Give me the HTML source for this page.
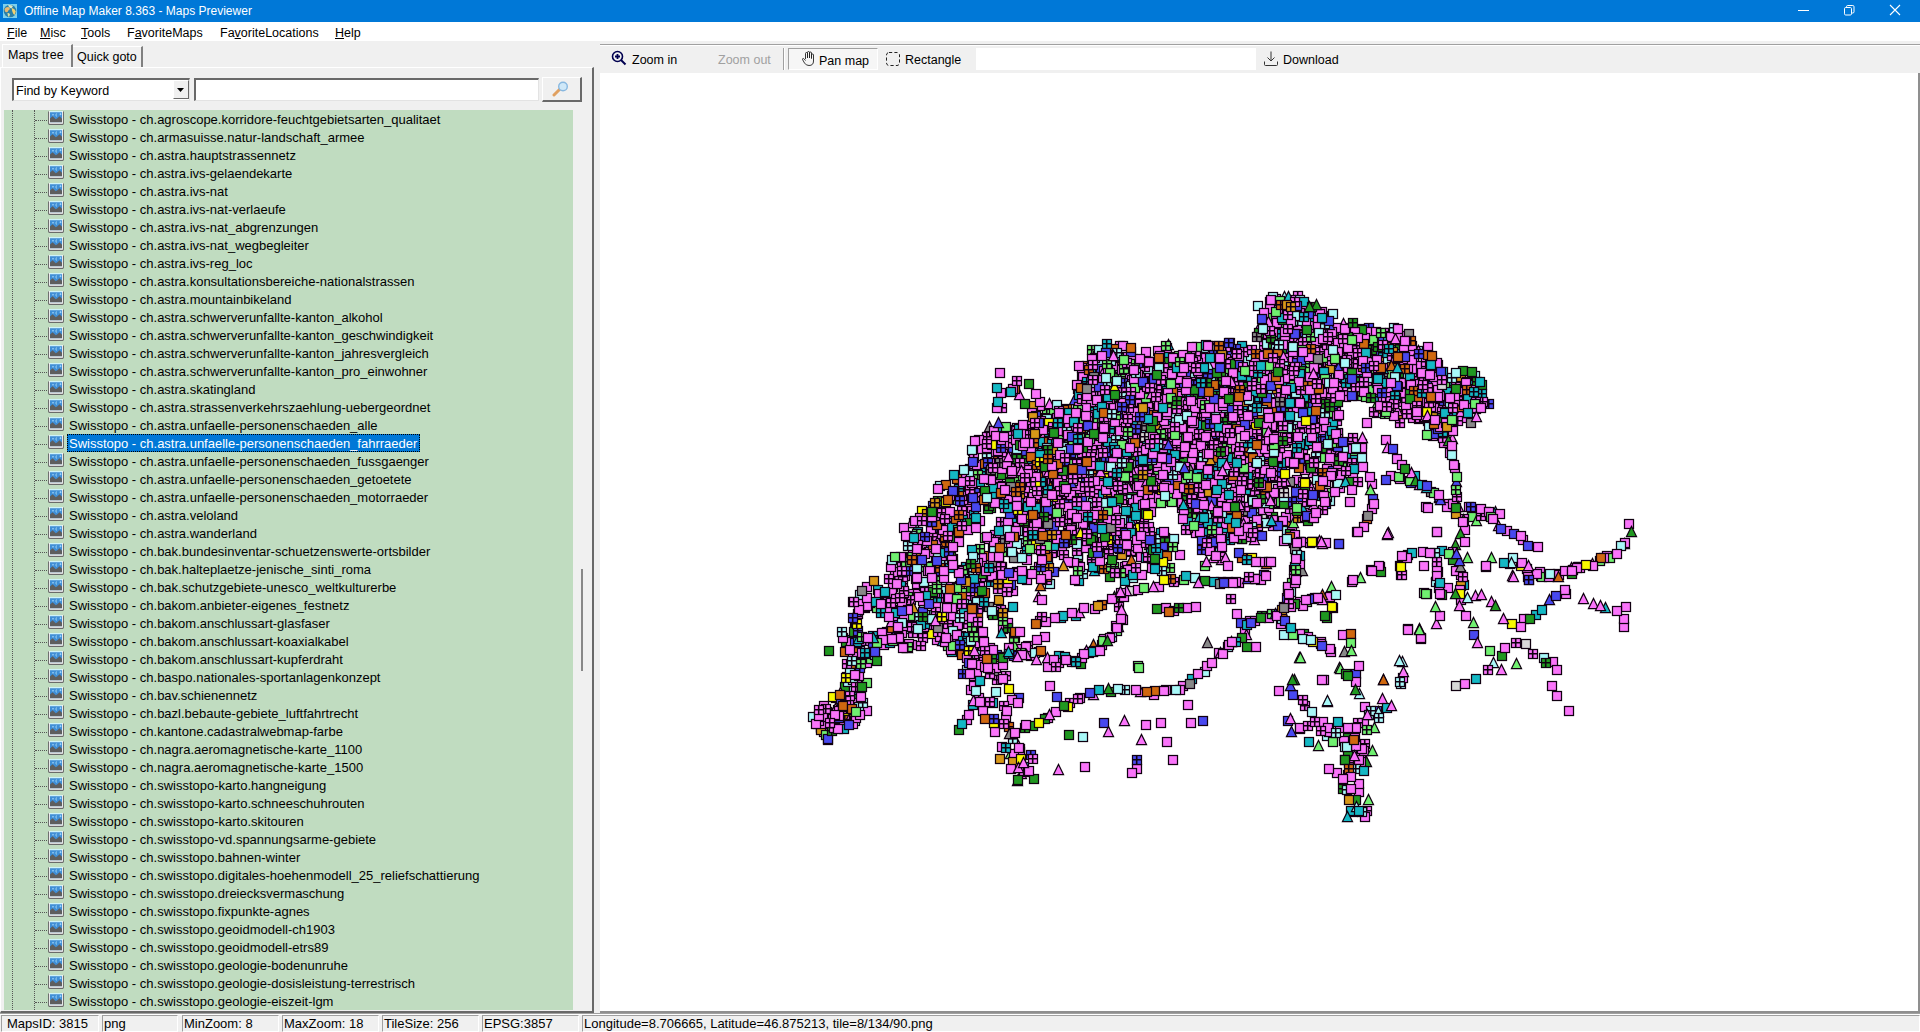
<!DOCTYPE html>
<html><head><meta charset="utf-8">
<style>
*{margin:0;padding:0;box-sizing:border-box}
html,body{width:1920px;height:1032px;overflow:hidden;background:#f0f0f0;font-family:"Liberation Sans",sans-serif;position:relative}
.a{position:absolute}
#title{left:0;top:0;width:1920px;height:22px;background:#0078d7;color:#fff;font-size:12px}
#menu{left:0;top:22px;width:1920px;height:19px;background:#fff;font-size:12.5px;color:#000}
#menu span{position:absolute;top:4px}
.tree{left:4px;top:110px;width:570px;height:900px;background:#c0dcc0;overflow:hidden;border-right:1px solid #f4f8f4}
.row{position:absolute;left:0;height:18px;width:569px;font-size:13px;line-height:16px;white-space:nowrap}
.row .t{position:absolute;left:63px;top:0;height:18px;line-height:16px;padding:1px 2px 0 1px;color:#000;border:1px solid transparent}
.row .t.sel{background:#0078d7;color:#fff;border:1px dotted #000}
.row .ic{position:absolute;left:44px;top:1px;width:16px;height:14px}
.row .h{position:absolute;left:31px;top:10px;width:12px;border-top:1px dotted #555}
.vl{position:absolute;width:0;border-left:1px dotted #555}
#status{left:0;top:1013px;width:1920px;height:19px;font-size:13px}
.sp{position:absolute;top:2px;height:17px;border-top:1px solid #a0a0a0;border-left:1px solid #a0a0a0;border-bottom:1px solid #fff;border-right:1px solid #fff;padding-left:1px;line-height:15px;white-space:nowrap}
</style></head><body>
<div id="title" class="a">
 <svg class="a" style="left:3px;top:4px" width="14" height="14" viewBox="0 0 14 14"><rect width="14" height="14" fill="#7cd0ee"/><circle cx="7" cy="7" r="6.3" fill="#2a7fa8"/><path d="M1.5 5 Q3 2.5 6 3.2 L7 5 Q5 6.5 4.5 8 Q3 8.5 2 7.5Z" fill="#e8b870"/><path d="M5 1.2 Q8 0.8 10 2 L8.5 4.5 Q7 4 6 3Z" fill="#d8e8c8"/><path d="M9 4 Q12 4.5 12.8 7.5 L11.5 11 Q10 10 9.5 8 Q8.5 6 9 4Z" fill="#f0d070"/><path d="M4.5 9 Q6.5 8.5 7 10.5 L6 13 Q4.5 12 4.5 9Z" fill="#e0e0a0"/></svg>
 <span class="a" style="left:24px;top:4px">Offline Map Maker 8.363 - Maps Previewer</span>
 <svg class="a" style="left:1798px;top:10px" width="12" height="2"><rect width="11" height="1" fill="#fff"/></svg>
 <svg class="a" style="left:1843px;top:4px" width="13" height="13" viewBox="0 0 13 13"><rect x="1.5" y="3.5" width="7" height="7.5" rx="1.2" fill="none" stroke="#fff"/><path d="M3.5 3.5V2.7Q3.5 1.5 4.7 1.5H9.8Q11 1.5 11 2.7V7.8Q11 9 9.8 9H8.5" fill="none" stroke="#fff"/></svg>
 <svg class="a" style="left:1889px;top:4px" width="12" height="12" viewBox="0 0 12 12"><path d="M1 1L11 11M11 1L1 11" stroke="#fff" stroke-width="1.1"/></svg>
</div>
<div id="menu" class="a">
 <span style="left:7px"><u>F</u>ile</span>
 <span style="left:40px"><u>M</u>isc</span>
 <span style="left:81px"><u>T</u>ools</span>
 <span style="left:127px">F<u>a</u>voriteMaps</span>
 <span style="left:220px">Fa<u>v</u>oriteLocations</span>
 <span style="left:335px"><u>H</u>elp</span>
</div>

<div class="a" style="left:2px;top:44px;width:71px;height:24px;background:#f0f0f0;border-top:1px solid #fff;border-left:1px solid #fff;border-right:2px solid #808080"></div>
<span class="a" style="left:8px;top:48px;font-size:12.5px">Maps tree</span>
<div class="a" style="left:73px;top:46px;width:70px;height:21px;border-top:1px solid #fff;border-right:2px solid #808080"></div>
<span class="a" style="left:77px;top:50px;font-size:12.5px">Quick goto</span>
<div class="a" style="left:0px;top:67px;width:594px;height:946px;border-top:1px solid #fff;border-left:1px solid #fff;border-right:2px solid #696969;border-bottom:2px solid #696969"></div>
<div class="a" style="left:12px;top:78px;width:178px;height:23px;background:#fff;border-top:2px solid #696969;border-left:2px solid #696969;border-bottom:1px solid #e3e3e3;border-right:1px solid #e3e3e3"></div>
<span class="a" style="left:16px;top:84px;font-size:12.5px">Find by Keyword</span>
<div class="a" style="left:173px;top:80px;width:16px;height:19px;background:#f0f0f0;border-right:1px solid #696969;border-bottom:1px solid #696969;border-left:1px solid #fff;border-top:1px solid #fff"></div>
<svg class="a" style="left:177px;top:88px" width="8" height="5"><path d="M0 0 H7 L3.5 4Z" fill="#000"/></svg>
<div class="a" style="left:194px;top:78px;width:345px;height:23px;background:#fff;border-top:2px solid #696969;border-left:2px solid #696969;border-bottom:1px solid #e3e3e3;border-right:1px solid #e3e3e3"></div>
<div class="a" style="left:542px;top:77px;width:40px;height:25px;background:#f0f0f0;border-top:1px solid #fff;border-left:1px solid #fff;border-right:2px solid #696969;border-bottom:2px solid #696969"></div>
<svg class="a" style="left:552px;top:81px" width="18" height="16" viewBox="0 0 18 16"><line x1="2" y1="14" x2="8" y2="8" stroke="#e0a060" stroke-width="3" stroke-linecap="round"/><circle cx="11" cy="5.5" r="4.3" fill="#cfe8f8" stroke="#88b8e0" stroke-width="1.4"/></svg>
<div class="a tree">
<div class="vl" style="left:8px;top:0;height:900px"></div>
<div class="vl" style="left:30px;top:0;height:900px"></div>
<div class="row" style="top:0px"><div class="h"></div><svg class="ic" viewBox="0 0 16 14"><rect x="1" y="0" width="14" height="13" fill="#fff"/><path d="M0.6 0.5V12.6Q0.6 13.4 1.4 13.4H14.6Q15.4 13.4 15.4 12.6V0.5" fill="none" stroke="#6a6a6a" stroke-width="1.1"/><rect x="2" y="0.3" width="12" height="0.9" fill="#b8eef8"/><rect x="2" y="1.2" width="12" height="10" fill="#3f8ed6"/><path d="M2 11.2V7.5L4.6 5.3L7.8 8.2L9.4 7.2L11.5 5.2L14 7.8V11.2Z" fill="#5e5e5e"/><path d="M5 2.8L5.9 3.8L5 4.8L4.1 3.8Z" fill="#a8dcff"/><path d="M9.3 2.3A1.6 1.6 0 1 0 9.3 5.8A2 2 0 0 1 9.3 2.3Z" fill="#c8f4ff"/><path d="M12.5 2.2V4.2M11.5 3.2H13.5" stroke="#a8dcff" stroke-width="0.8"/></svg><span class="t">Swisstopo - ch.agroscope.korridore-feuchtgebietsarten_qualitaet</span></div>
<div class="row" style="top:18px"><div class="h"></div><svg class="ic" viewBox="0 0 16 14"><rect x="1" y="0" width="14" height="13" fill="#fff"/><path d="M0.6 0.5V12.6Q0.6 13.4 1.4 13.4H14.6Q15.4 13.4 15.4 12.6V0.5" fill="none" stroke="#6a6a6a" stroke-width="1.1"/><rect x="2" y="0.3" width="12" height="0.9" fill="#b8eef8"/><rect x="2" y="1.2" width="12" height="10" fill="#3f8ed6"/><path d="M2 11.2V7.5L4.6 5.3L7.8 8.2L9.4 7.2L11.5 5.2L14 7.8V11.2Z" fill="#5e5e5e"/><path d="M5 2.8L5.9 3.8L5 4.8L4.1 3.8Z" fill="#a8dcff"/><path d="M9.3 2.3A1.6 1.6 0 1 0 9.3 5.8A2 2 0 0 1 9.3 2.3Z" fill="#c8f4ff"/><path d="M12.5 2.2V4.2M11.5 3.2H13.5" stroke="#a8dcff" stroke-width="0.8"/></svg><span class="t">Swisstopo - ch.armasuisse.natur-landschaft_armee</span></div>
<div class="row" style="top:36px"><div class="h"></div><svg class="ic" viewBox="0 0 16 14"><rect x="1" y="0" width="14" height="13" fill="#fff"/><path d="M0.6 0.5V12.6Q0.6 13.4 1.4 13.4H14.6Q15.4 13.4 15.4 12.6V0.5" fill="none" stroke="#6a6a6a" stroke-width="1.1"/><rect x="2" y="0.3" width="12" height="0.9" fill="#b8eef8"/><rect x="2" y="1.2" width="12" height="10" fill="#3f8ed6"/><path d="M2 11.2V7.5L4.6 5.3L7.8 8.2L9.4 7.2L11.5 5.2L14 7.8V11.2Z" fill="#5e5e5e"/><path d="M5 2.8L5.9 3.8L5 4.8L4.1 3.8Z" fill="#a8dcff"/><path d="M9.3 2.3A1.6 1.6 0 1 0 9.3 5.8A2 2 0 0 1 9.3 2.3Z" fill="#c8f4ff"/><path d="M12.5 2.2V4.2M11.5 3.2H13.5" stroke="#a8dcff" stroke-width="0.8"/></svg><span class="t">Swisstopo - ch.astra.hauptstrassennetz</span></div>
<div class="row" style="top:54px"><div class="h"></div><svg class="ic" viewBox="0 0 16 14"><rect x="1" y="0" width="14" height="13" fill="#fff"/><path d="M0.6 0.5V12.6Q0.6 13.4 1.4 13.4H14.6Q15.4 13.4 15.4 12.6V0.5" fill="none" stroke="#6a6a6a" stroke-width="1.1"/><rect x="2" y="0.3" width="12" height="0.9" fill="#b8eef8"/><rect x="2" y="1.2" width="12" height="10" fill="#3f8ed6"/><path d="M2 11.2V7.5L4.6 5.3L7.8 8.2L9.4 7.2L11.5 5.2L14 7.8V11.2Z" fill="#5e5e5e"/><path d="M5 2.8L5.9 3.8L5 4.8L4.1 3.8Z" fill="#a8dcff"/><path d="M9.3 2.3A1.6 1.6 0 1 0 9.3 5.8A2 2 0 0 1 9.3 2.3Z" fill="#c8f4ff"/><path d="M12.5 2.2V4.2M11.5 3.2H13.5" stroke="#a8dcff" stroke-width="0.8"/></svg><span class="t">Swisstopo - ch.astra.ivs-gelaendekarte</span></div>
<div class="row" style="top:72px"><div class="h"></div><svg class="ic" viewBox="0 0 16 14"><rect x="1" y="0" width="14" height="13" fill="#fff"/><path d="M0.6 0.5V12.6Q0.6 13.4 1.4 13.4H14.6Q15.4 13.4 15.4 12.6V0.5" fill="none" stroke="#6a6a6a" stroke-width="1.1"/><rect x="2" y="0.3" width="12" height="0.9" fill="#b8eef8"/><rect x="2" y="1.2" width="12" height="10" fill="#3f8ed6"/><path d="M2 11.2V7.5L4.6 5.3L7.8 8.2L9.4 7.2L11.5 5.2L14 7.8V11.2Z" fill="#5e5e5e"/><path d="M5 2.8L5.9 3.8L5 4.8L4.1 3.8Z" fill="#a8dcff"/><path d="M9.3 2.3A1.6 1.6 0 1 0 9.3 5.8A2 2 0 0 1 9.3 2.3Z" fill="#c8f4ff"/><path d="M12.5 2.2V4.2M11.5 3.2H13.5" stroke="#a8dcff" stroke-width="0.8"/></svg><span class="t">Swisstopo - ch.astra.ivs-nat</span></div>
<div class="row" style="top:90px"><div class="h"></div><svg class="ic" viewBox="0 0 16 14"><rect x="1" y="0" width="14" height="13" fill="#fff"/><path d="M0.6 0.5V12.6Q0.6 13.4 1.4 13.4H14.6Q15.4 13.4 15.4 12.6V0.5" fill="none" stroke="#6a6a6a" stroke-width="1.1"/><rect x="2" y="0.3" width="12" height="0.9" fill="#b8eef8"/><rect x="2" y="1.2" width="12" height="10" fill="#3f8ed6"/><path d="M2 11.2V7.5L4.6 5.3L7.8 8.2L9.4 7.2L11.5 5.2L14 7.8V11.2Z" fill="#5e5e5e"/><path d="M5 2.8L5.9 3.8L5 4.8L4.1 3.8Z" fill="#a8dcff"/><path d="M9.3 2.3A1.6 1.6 0 1 0 9.3 5.8A2 2 0 0 1 9.3 2.3Z" fill="#c8f4ff"/><path d="M12.5 2.2V4.2M11.5 3.2H13.5" stroke="#a8dcff" stroke-width="0.8"/></svg><span class="t">Swisstopo - ch.astra.ivs-nat-verlaeufe</span></div>
<div class="row" style="top:108px"><div class="h"></div><svg class="ic" viewBox="0 0 16 14"><rect x="1" y="0" width="14" height="13" fill="#fff"/><path d="M0.6 0.5V12.6Q0.6 13.4 1.4 13.4H14.6Q15.4 13.4 15.4 12.6V0.5" fill="none" stroke="#6a6a6a" stroke-width="1.1"/><rect x="2" y="0.3" width="12" height="0.9" fill="#b8eef8"/><rect x="2" y="1.2" width="12" height="10" fill="#3f8ed6"/><path d="M2 11.2V7.5L4.6 5.3L7.8 8.2L9.4 7.2L11.5 5.2L14 7.8V11.2Z" fill="#5e5e5e"/><path d="M5 2.8L5.9 3.8L5 4.8L4.1 3.8Z" fill="#a8dcff"/><path d="M9.3 2.3A1.6 1.6 0 1 0 9.3 5.8A2 2 0 0 1 9.3 2.3Z" fill="#c8f4ff"/><path d="M12.5 2.2V4.2M11.5 3.2H13.5" stroke="#a8dcff" stroke-width="0.8"/></svg><span class="t">Swisstopo - ch.astra.ivs-nat_abgrenzungen</span></div>
<div class="row" style="top:126px"><div class="h"></div><svg class="ic" viewBox="0 0 16 14"><rect x="1" y="0" width="14" height="13" fill="#fff"/><path d="M0.6 0.5V12.6Q0.6 13.4 1.4 13.4H14.6Q15.4 13.4 15.4 12.6V0.5" fill="none" stroke="#6a6a6a" stroke-width="1.1"/><rect x="2" y="0.3" width="12" height="0.9" fill="#b8eef8"/><rect x="2" y="1.2" width="12" height="10" fill="#3f8ed6"/><path d="M2 11.2V7.5L4.6 5.3L7.8 8.2L9.4 7.2L11.5 5.2L14 7.8V11.2Z" fill="#5e5e5e"/><path d="M5 2.8L5.9 3.8L5 4.8L4.1 3.8Z" fill="#a8dcff"/><path d="M9.3 2.3A1.6 1.6 0 1 0 9.3 5.8A2 2 0 0 1 9.3 2.3Z" fill="#c8f4ff"/><path d="M12.5 2.2V4.2M11.5 3.2H13.5" stroke="#a8dcff" stroke-width="0.8"/></svg><span class="t">Swisstopo - ch.astra.ivs-nat_wegbegleiter</span></div>
<div class="row" style="top:144px"><div class="h"></div><svg class="ic" viewBox="0 0 16 14"><rect x="1" y="0" width="14" height="13" fill="#fff"/><path d="M0.6 0.5V12.6Q0.6 13.4 1.4 13.4H14.6Q15.4 13.4 15.4 12.6V0.5" fill="none" stroke="#6a6a6a" stroke-width="1.1"/><rect x="2" y="0.3" width="12" height="0.9" fill="#b8eef8"/><rect x="2" y="1.2" width="12" height="10" fill="#3f8ed6"/><path d="M2 11.2V7.5L4.6 5.3L7.8 8.2L9.4 7.2L11.5 5.2L14 7.8V11.2Z" fill="#5e5e5e"/><path d="M5 2.8L5.9 3.8L5 4.8L4.1 3.8Z" fill="#a8dcff"/><path d="M9.3 2.3A1.6 1.6 0 1 0 9.3 5.8A2 2 0 0 1 9.3 2.3Z" fill="#c8f4ff"/><path d="M12.5 2.2V4.2M11.5 3.2H13.5" stroke="#a8dcff" stroke-width="0.8"/></svg><span class="t">Swisstopo - ch.astra.ivs-reg_loc</span></div>
<div class="row" style="top:162px"><div class="h"></div><svg class="ic" viewBox="0 0 16 14"><rect x="1" y="0" width="14" height="13" fill="#fff"/><path d="M0.6 0.5V12.6Q0.6 13.4 1.4 13.4H14.6Q15.4 13.4 15.4 12.6V0.5" fill="none" stroke="#6a6a6a" stroke-width="1.1"/><rect x="2" y="0.3" width="12" height="0.9" fill="#b8eef8"/><rect x="2" y="1.2" width="12" height="10" fill="#3f8ed6"/><path d="M2 11.2V7.5L4.6 5.3L7.8 8.2L9.4 7.2L11.5 5.2L14 7.8V11.2Z" fill="#5e5e5e"/><path d="M5 2.8L5.9 3.8L5 4.8L4.1 3.8Z" fill="#a8dcff"/><path d="M9.3 2.3A1.6 1.6 0 1 0 9.3 5.8A2 2 0 0 1 9.3 2.3Z" fill="#c8f4ff"/><path d="M12.5 2.2V4.2M11.5 3.2H13.5" stroke="#a8dcff" stroke-width="0.8"/></svg><span class="t">Swisstopo - ch.astra.konsultationsbereiche-nationalstrassen</span></div>
<div class="row" style="top:180px"><div class="h"></div><svg class="ic" viewBox="0 0 16 14"><rect x="1" y="0" width="14" height="13" fill="#fff"/><path d="M0.6 0.5V12.6Q0.6 13.4 1.4 13.4H14.6Q15.4 13.4 15.4 12.6V0.5" fill="none" stroke="#6a6a6a" stroke-width="1.1"/><rect x="2" y="0.3" width="12" height="0.9" fill="#b8eef8"/><rect x="2" y="1.2" width="12" height="10" fill="#3f8ed6"/><path d="M2 11.2V7.5L4.6 5.3L7.8 8.2L9.4 7.2L11.5 5.2L14 7.8V11.2Z" fill="#5e5e5e"/><path d="M5 2.8L5.9 3.8L5 4.8L4.1 3.8Z" fill="#a8dcff"/><path d="M9.3 2.3A1.6 1.6 0 1 0 9.3 5.8A2 2 0 0 1 9.3 2.3Z" fill="#c8f4ff"/><path d="M12.5 2.2V4.2M11.5 3.2H13.5" stroke="#a8dcff" stroke-width="0.8"/></svg><span class="t">Swisstopo - ch.astra.mountainbikeland</span></div>
<div class="row" style="top:198px"><div class="h"></div><svg class="ic" viewBox="0 0 16 14"><rect x="1" y="0" width="14" height="13" fill="#fff"/><path d="M0.6 0.5V12.6Q0.6 13.4 1.4 13.4H14.6Q15.4 13.4 15.4 12.6V0.5" fill="none" stroke="#6a6a6a" stroke-width="1.1"/><rect x="2" y="0.3" width="12" height="0.9" fill="#b8eef8"/><rect x="2" y="1.2" width="12" height="10" fill="#3f8ed6"/><path d="M2 11.2V7.5L4.6 5.3L7.8 8.2L9.4 7.2L11.5 5.2L14 7.8V11.2Z" fill="#5e5e5e"/><path d="M5 2.8L5.9 3.8L5 4.8L4.1 3.8Z" fill="#a8dcff"/><path d="M9.3 2.3A1.6 1.6 0 1 0 9.3 5.8A2 2 0 0 1 9.3 2.3Z" fill="#c8f4ff"/><path d="M12.5 2.2V4.2M11.5 3.2H13.5" stroke="#a8dcff" stroke-width="0.8"/></svg><span class="t">Swisstopo - ch.astra.schwerverunfallte-kanton_alkohol</span></div>
<div class="row" style="top:216px"><div class="h"></div><svg class="ic" viewBox="0 0 16 14"><rect x="1" y="0" width="14" height="13" fill="#fff"/><path d="M0.6 0.5V12.6Q0.6 13.4 1.4 13.4H14.6Q15.4 13.4 15.4 12.6V0.5" fill="none" stroke="#6a6a6a" stroke-width="1.1"/><rect x="2" y="0.3" width="12" height="0.9" fill="#b8eef8"/><rect x="2" y="1.2" width="12" height="10" fill="#3f8ed6"/><path d="M2 11.2V7.5L4.6 5.3L7.8 8.2L9.4 7.2L11.5 5.2L14 7.8V11.2Z" fill="#5e5e5e"/><path d="M5 2.8L5.9 3.8L5 4.8L4.1 3.8Z" fill="#a8dcff"/><path d="M9.3 2.3A1.6 1.6 0 1 0 9.3 5.8A2 2 0 0 1 9.3 2.3Z" fill="#c8f4ff"/><path d="M12.5 2.2V4.2M11.5 3.2H13.5" stroke="#a8dcff" stroke-width="0.8"/></svg><span class="t">Swisstopo - ch.astra.schwerverunfallte-kanton_geschwindigkeit</span></div>
<div class="row" style="top:234px"><div class="h"></div><svg class="ic" viewBox="0 0 16 14"><rect x="1" y="0" width="14" height="13" fill="#fff"/><path d="M0.6 0.5V12.6Q0.6 13.4 1.4 13.4H14.6Q15.4 13.4 15.4 12.6V0.5" fill="none" stroke="#6a6a6a" stroke-width="1.1"/><rect x="2" y="0.3" width="12" height="0.9" fill="#b8eef8"/><rect x="2" y="1.2" width="12" height="10" fill="#3f8ed6"/><path d="M2 11.2V7.5L4.6 5.3L7.8 8.2L9.4 7.2L11.5 5.2L14 7.8V11.2Z" fill="#5e5e5e"/><path d="M5 2.8L5.9 3.8L5 4.8L4.1 3.8Z" fill="#a8dcff"/><path d="M9.3 2.3A1.6 1.6 0 1 0 9.3 5.8A2 2 0 0 1 9.3 2.3Z" fill="#c8f4ff"/><path d="M12.5 2.2V4.2M11.5 3.2H13.5" stroke="#a8dcff" stroke-width="0.8"/></svg><span class="t">Swisstopo - ch.astra.schwerverunfallte-kanton_jahresvergleich</span></div>
<div class="row" style="top:252px"><div class="h"></div><svg class="ic" viewBox="0 0 16 14"><rect x="1" y="0" width="14" height="13" fill="#fff"/><path d="M0.6 0.5V12.6Q0.6 13.4 1.4 13.4H14.6Q15.4 13.4 15.4 12.6V0.5" fill="none" stroke="#6a6a6a" stroke-width="1.1"/><rect x="2" y="0.3" width="12" height="0.9" fill="#b8eef8"/><rect x="2" y="1.2" width="12" height="10" fill="#3f8ed6"/><path d="M2 11.2V7.5L4.6 5.3L7.8 8.2L9.4 7.2L11.5 5.2L14 7.8V11.2Z" fill="#5e5e5e"/><path d="M5 2.8L5.9 3.8L5 4.8L4.1 3.8Z" fill="#a8dcff"/><path d="M9.3 2.3A1.6 1.6 0 1 0 9.3 5.8A2 2 0 0 1 9.3 2.3Z" fill="#c8f4ff"/><path d="M12.5 2.2V4.2M11.5 3.2H13.5" stroke="#a8dcff" stroke-width="0.8"/></svg><span class="t">Swisstopo - ch.astra.schwerverunfallte-kanton_pro_einwohner</span></div>
<div class="row" style="top:270px"><div class="h"></div><svg class="ic" viewBox="0 0 16 14"><rect x="1" y="0" width="14" height="13" fill="#fff"/><path d="M0.6 0.5V12.6Q0.6 13.4 1.4 13.4H14.6Q15.4 13.4 15.4 12.6V0.5" fill="none" stroke="#6a6a6a" stroke-width="1.1"/><rect x="2" y="0.3" width="12" height="0.9" fill="#b8eef8"/><rect x="2" y="1.2" width="12" height="10" fill="#3f8ed6"/><path d="M2 11.2V7.5L4.6 5.3L7.8 8.2L9.4 7.2L11.5 5.2L14 7.8V11.2Z" fill="#5e5e5e"/><path d="M5 2.8L5.9 3.8L5 4.8L4.1 3.8Z" fill="#a8dcff"/><path d="M9.3 2.3A1.6 1.6 0 1 0 9.3 5.8A2 2 0 0 1 9.3 2.3Z" fill="#c8f4ff"/><path d="M12.5 2.2V4.2M11.5 3.2H13.5" stroke="#a8dcff" stroke-width="0.8"/></svg><span class="t">Swisstopo - ch.astra.skatingland</span></div>
<div class="row" style="top:288px"><div class="h"></div><svg class="ic" viewBox="0 0 16 14"><rect x="1" y="0" width="14" height="13" fill="#fff"/><path d="M0.6 0.5V12.6Q0.6 13.4 1.4 13.4H14.6Q15.4 13.4 15.4 12.6V0.5" fill="none" stroke="#6a6a6a" stroke-width="1.1"/><rect x="2" y="0.3" width="12" height="0.9" fill="#b8eef8"/><rect x="2" y="1.2" width="12" height="10" fill="#3f8ed6"/><path d="M2 11.2V7.5L4.6 5.3L7.8 8.2L9.4 7.2L11.5 5.2L14 7.8V11.2Z" fill="#5e5e5e"/><path d="M5 2.8L5.9 3.8L5 4.8L4.1 3.8Z" fill="#a8dcff"/><path d="M9.3 2.3A1.6 1.6 0 1 0 9.3 5.8A2 2 0 0 1 9.3 2.3Z" fill="#c8f4ff"/><path d="M12.5 2.2V4.2M11.5 3.2H13.5" stroke="#a8dcff" stroke-width="0.8"/></svg><span class="t">Swisstopo - ch.astra.strassenverkehrszaehlung-uebergeordnet</span></div>
<div class="row" style="top:306px"><div class="h"></div><svg class="ic" viewBox="0 0 16 14"><rect x="1" y="0" width="14" height="13" fill="#fff"/><path d="M0.6 0.5V12.6Q0.6 13.4 1.4 13.4H14.6Q15.4 13.4 15.4 12.6V0.5" fill="none" stroke="#6a6a6a" stroke-width="1.1"/><rect x="2" y="0.3" width="12" height="0.9" fill="#b8eef8"/><rect x="2" y="1.2" width="12" height="10" fill="#3f8ed6"/><path d="M2 11.2V7.5L4.6 5.3L7.8 8.2L9.4 7.2L11.5 5.2L14 7.8V11.2Z" fill="#5e5e5e"/><path d="M5 2.8L5.9 3.8L5 4.8L4.1 3.8Z" fill="#a8dcff"/><path d="M9.3 2.3A1.6 1.6 0 1 0 9.3 5.8A2 2 0 0 1 9.3 2.3Z" fill="#c8f4ff"/><path d="M12.5 2.2V4.2M11.5 3.2H13.5" stroke="#a8dcff" stroke-width="0.8"/></svg><span class="t">Swisstopo - ch.astra.unfaelle-personenschaeden_alle</span></div>
<div class="row" style="top:324px"><div class="h"></div><svg class="ic" viewBox="0 0 16 14"><rect x="1" y="0" width="14" height="13" fill="#fff"/><path d="M0.6 0.5V12.6Q0.6 13.4 1.4 13.4H14.6Q15.4 13.4 15.4 12.6V0.5" fill="none" stroke="#6a6a6a" stroke-width="1.1"/><rect x="2" y="0.3" width="12" height="0.9" fill="#b8eef8"/><rect x="2" y="1.2" width="12" height="10" fill="#3f8ed6"/><path d="M2 11.2V7.5L4.6 5.3L7.8 8.2L9.4 7.2L11.5 5.2L14 7.8V11.2Z" fill="#5e5e5e"/><path d="M5 2.8L5.9 3.8L5 4.8L4.1 3.8Z" fill="#a8dcff"/><path d="M9.3 2.3A1.6 1.6 0 1 0 9.3 5.8A2 2 0 0 1 9.3 2.3Z" fill="#c8f4ff"/><path d="M12.5 2.2V4.2M11.5 3.2H13.5" stroke="#a8dcff" stroke-width="0.8"/></svg><span class="t sel">Swisstopo - ch.astra.unfaelle-personenschaeden_fahrraeder</span></div>
<div class="row" style="top:342px"><div class="h"></div><svg class="ic" viewBox="0 0 16 14"><rect x="1" y="0" width="14" height="13" fill="#fff"/><path d="M0.6 0.5V12.6Q0.6 13.4 1.4 13.4H14.6Q15.4 13.4 15.4 12.6V0.5" fill="none" stroke="#6a6a6a" stroke-width="1.1"/><rect x="2" y="0.3" width="12" height="0.9" fill="#b8eef8"/><rect x="2" y="1.2" width="12" height="10" fill="#3f8ed6"/><path d="M2 11.2V7.5L4.6 5.3L7.8 8.2L9.4 7.2L11.5 5.2L14 7.8V11.2Z" fill="#5e5e5e"/><path d="M5 2.8L5.9 3.8L5 4.8L4.1 3.8Z" fill="#a8dcff"/><path d="M9.3 2.3A1.6 1.6 0 1 0 9.3 5.8A2 2 0 0 1 9.3 2.3Z" fill="#c8f4ff"/><path d="M12.5 2.2V4.2M11.5 3.2H13.5" stroke="#a8dcff" stroke-width="0.8"/></svg><span class="t">Swisstopo - ch.astra.unfaelle-personenschaeden_fussgaenger</span></div>
<div class="row" style="top:360px"><div class="h"></div><svg class="ic" viewBox="0 0 16 14"><rect x="1" y="0" width="14" height="13" fill="#fff"/><path d="M0.6 0.5V12.6Q0.6 13.4 1.4 13.4H14.6Q15.4 13.4 15.4 12.6V0.5" fill="none" stroke="#6a6a6a" stroke-width="1.1"/><rect x="2" y="0.3" width="12" height="0.9" fill="#b8eef8"/><rect x="2" y="1.2" width="12" height="10" fill="#3f8ed6"/><path d="M2 11.2V7.5L4.6 5.3L7.8 8.2L9.4 7.2L11.5 5.2L14 7.8V11.2Z" fill="#5e5e5e"/><path d="M5 2.8L5.9 3.8L5 4.8L4.1 3.8Z" fill="#a8dcff"/><path d="M9.3 2.3A1.6 1.6 0 1 0 9.3 5.8A2 2 0 0 1 9.3 2.3Z" fill="#c8f4ff"/><path d="M12.5 2.2V4.2M11.5 3.2H13.5" stroke="#a8dcff" stroke-width="0.8"/></svg><span class="t">Swisstopo - ch.astra.unfaelle-personenschaeden_getoetete</span></div>
<div class="row" style="top:378px"><div class="h"></div><svg class="ic" viewBox="0 0 16 14"><rect x="1" y="0" width="14" height="13" fill="#fff"/><path d="M0.6 0.5V12.6Q0.6 13.4 1.4 13.4H14.6Q15.4 13.4 15.4 12.6V0.5" fill="none" stroke="#6a6a6a" stroke-width="1.1"/><rect x="2" y="0.3" width="12" height="0.9" fill="#b8eef8"/><rect x="2" y="1.2" width="12" height="10" fill="#3f8ed6"/><path d="M2 11.2V7.5L4.6 5.3L7.8 8.2L9.4 7.2L11.5 5.2L14 7.8V11.2Z" fill="#5e5e5e"/><path d="M5 2.8L5.9 3.8L5 4.8L4.1 3.8Z" fill="#a8dcff"/><path d="M9.3 2.3A1.6 1.6 0 1 0 9.3 5.8A2 2 0 0 1 9.3 2.3Z" fill="#c8f4ff"/><path d="M12.5 2.2V4.2M11.5 3.2H13.5" stroke="#a8dcff" stroke-width="0.8"/></svg><span class="t">Swisstopo - ch.astra.unfaelle-personenschaeden_motorraeder</span></div>
<div class="row" style="top:396px"><div class="h"></div><svg class="ic" viewBox="0 0 16 14"><rect x="1" y="0" width="14" height="13" fill="#fff"/><path d="M0.6 0.5V12.6Q0.6 13.4 1.4 13.4H14.6Q15.4 13.4 15.4 12.6V0.5" fill="none" stroke="#6a6a6a" stroke-width="1.1"/><rect x="2" y="0.3" width="12" height="0.9" fill="#b8eef8"/><rect x="2" y="1.2" width="12" height="10" fill="#3f8ed6"/><path d="M2 11.2V7.5L4.6 5.3L7.8 8.2L9.4 7.2L11.5 5.2L14 7.8V11.2Z" fill="#5e5e5e"/><path d="M5 2.8L5.9 3.8L5 4.8L4.1 3.8Z" fill="#a8dcff"/><path d="M9.3 2.3A1.6 1.6 0 1 0 9.3 5.8A2 2 0 0 1 9.3 2.3Z" fill="#c8f4ff"/><path d="M12.5 2.2V4.2M11.5 3.2H13.5" stroke="#a8dcff" stroke-width="0.8"/></svg><span class="t">Swisstopo - ch.astra.veloland</span></div>
<div class="row" style="top:414px"><div class="h"></div><svg class="ic" viewBox="0 0 16 14"><rect x="1" y="0" width="14" height="13" fill="#fff"/><path d="M0.6 0.5V12.6Q0.6 13.4 1.4 13.4H14.6Q15.4 13.4 15.4 12.6V0.5" fill="none" stroke="#6a6a6a" stroke-width="1.1"/><rect x="2" y="0.3" width="12" height="0.9" fill="#b8eef8"/><rect x="2" y="1.2" width="12" height="10" fill="#3f8ed6"/><path d="M2 11.2V7.5L4.6 5.3L7.8 8.2L9.4 7.2L11.5 5.2L14 7.8V11.2Z" fill="#5e5e5e"/><path d="M5 2.8L5.9 3.8L5 4.8L4.1 3.8Z" fill="#a8dcff"/><path d="M9.3 2.3A1.6 1.6 0 1 0 9.3 5.8A2 2 0 0 1 9.3 2.3Z" fill="#c8f4ff"/><path d="M12.5 2.2V4.2M11.5 3.2H13.5" stroke="#a8dcff" stroke-width="0.8"/></svg><span class="t">Swisstopo - ch.astra.wanderland</span></div>
<div class="row" style="top:432px"><div class="h"></div><svg class="ic" viewBox="0 0 16 14"><rect x="1" y="0" width="14" height="13" fill="#fff"/><path d="M0.6 0.5V12.6Q0.6 13.4 1.4 13.4H14.6Q15.4 13.4 15.4 12.6V0.5" fill="none" stroke="#6a6a6a" stroke-width="1.1"/><rect x="2" y="0.3" width="12" height="0.9" fill="#b8eef8"/><rect x="2" y="1.2" width="12" height="10" fill="#3f8ed6"/><path d="M2 11.2V7.5L4.6 5.3L7.8 8.2L9.4 7.2L11.5 5.2L14 7.8V11.2Z" fill="#5e5e5e"/><path d="M5 2.8L5.9 3.8L5 4.8L4.1 3.8Z" fill="#a8dcff"/><path d="M9.3 2.3A1.6 1.6 0 1 0 9.3 5.8A2 2 0 0 1 9.3 2.3Z" fill="#c8f4ff"/><path d="M12.5 2.2V4.2M11.5 3.2H13.5" stroke="#a8dcff" stroke-width="0.8"/></svg><span class="t">Swisstopo - ch.bak.bundesinventar-schuetzenswerte-ortsbilder</span></div>
<div class="row" style="top:450px"><div class="h"></div><svg class="ic" viewBox="0 0 16 14"><rect x="1" y="0" width="14" height="13" fill="#fff"/><path d="M0.6 0.5V12.6Q0.6 13.4 1.4 13.4H14.6Q15.4 13.4 15.4 12.6V0.5" fill="none" stroke="#6a6a6a" stroke-width="1.1"/><rect x="2" y="0.3" width="12" height="0.9" fill="#b8eef8"/><rect x="2" y="1.2" width="12" height="10" fill="#3f8ed6"/><path d="M2 11.2V7.5L4.6 5.3L7.8 8.2L9.4 7.2L11.5 5.2L14 7.8V11.2Z" fill="#5e5e5e"/><path d="M5 2.8L5.9 3.8L5 4.8L4.1 3.8Z" fill="#a8dcff"/><path d="M9.3 2.3A1.6 1.6 0 1 0 9.3 5.8A2 2 0 0 1 9.3 2.3Z" fill="#c8f4ff"/><path d="M12.5 2.2V4.2M11.5 3.2H13.5" stroke="#a8dcff" stroke-width="0.8"/></svg><span class="t">Swisstopo - ch.bak.halteplaetze-jenische_sinti_roma</span></div>
<div class="row" style="top:468px"><div class="h"></div><svg class="ic" viewBox="0 0 16 14"><rect x="1" y="0" width="14" height="13" fill="#fff"/><path d="M0.6 0.5V12.6Q0.6 13.4 1.4 13.4H14.6Q15.4 13.4 15.4 12.6V0.5" fill="none" stroke="#6a6a6a" stroke-width="1.1"/><rect x="2" y="0.3" width="12" height="0.9" fill="#b8eef8"/><rect x="2" y="1.2" width="12" height="10" fill="#3f8ed6"/><path d="M2 11.2V7.5L4.6 5.3L7.8 8.2L9.4 7.2L11.5 5.2L14 7.8V11.2Z" fill="#5e5e5e"/><path d="M5 2.8L5.9 3.8L5 4.8L4.1 3.8Z" fill="#a8dcff"/><path d="M9.3 2.3A1.6 1.6 0 1 0 9.3 5.8A2 2 0 0 1 9.3 2.3Z" fill="#c8f4ff"/><path d="M12.5 2.2V4.2M11.5 3.2H13.5" stroke="#a8dcff" stroke-width="0.8"/></svg><span class="t">Swisstopo - ch.bak.schutzgebiete-unesco_weltkulturerbe</span></div>
<div class="row" style="top:486px"><div class="h"></div><svg class="ic" viewBox="0 0 16 14"><rect x="1" y="0" width="14" height="13" fill="#fff"/><path d="M0.6 0.5V12.6Q0.6 13.4 1.4 13.4H14.6Q15.4 13.4 15.4 12.6V0.5" fill="none" stroke="#6a6a6a" stroke-width="1.1"/><rect x="2" y="0.3" width="12" height="0.9" fill="#b8eef8"/><rect x="2" y="1.2" width="12" height="10" fill="#3f8ed6"/><path d="M2 11.2V7.5L4.6 5.3L7.8 8.2L9.4 7.2L11.5 5.2L14 7.8V11.2Z" fill="#5e5e5e"/><path d="M5 2.8L5.9 3.8L5 4.8L4.1 3.8Z" fill="#a8dcff"/><path d="M9.3 2.3A1.6 1.6 0 1 0 9.3 5.8A2 2 0 0 1 9.3 2.3Z" fill="#c8f4ff"/><path d="M12.5 2.2V4.2M11.5 3.2H13.5" stroke="#a8dcff" stroke-width="0.8"/></svg><span class="t">Swisstopo - ch.bakom.anbieter-eigenes_festnetz</span></div>
<div class="row" style="top:504px"><div class="h"></div><svg class="ic" viewBox="0 0 16 14"><rect x="1" y="0" width="14" height="13" fill="#fff"/><path d="M0.6 0.5V12.6Q0.6 13.4 1.4 13.4H14.6Q15.4 13.4 15.4 12.6V0.5" fill="none" stroke="#6a6a6a" stroke-width="1.1"/><rect x="2" y="0.3" width="12" height="0.9" fill="#b8eef8"/><rect x="2" y="1.2" width="12" height="10" fill="#3f8ed6"/><path d="M2 11.2V7.5L4.6 5.3L7.8 8.2L9.4 7.2L11.5 5.2L14 7.8V11.2Z" fill="#5e5e5e"/><path d="M5 2.8L5.9 3.8L5 4.8L4.1 3.8Z" fill="#a8dcff"/><path d="M9.3 2.3A1.6 1.6 0 1 0 9.3 5.8A2 2 0 0 1 9.3 2.3Z" fill="#c8f4ff"/><path d="M12.5 2.2V4.2M11.5 3.2H13.5" stroke="#a8dcff" stroke-width="0.8"/></svg><span class="t">Swisstopo - ch.bakom.anschlussart-glasfaser</span></div>
<div class="row" style="top:522px"><div class="h"></div><svg class="ic" viewBox="0 0 16 14"><rect x="1" y="0" width="14" height="13" fill="#fff"/><path d="M0.6 0.5V12.6Q0.6 13.4 1.4 13.4H14.6Q15.4 13.4 15.4 12.6V0.5" fill="none" stroke="#6a6a6a" stroke-width="1.1"/><rect x="2" y="0.3" width="12" height="0.9" fill="#b8eef8"/><rect x="2" y="1.2" width="12" height="10" fill="#3f8ed6"/><path d="M2 11.2V7.5L4.6 5.3L7.8 8.2L9.4 7.2L11.5 5.2L14 7.8V11.2Z" fill="#5e5e5e"/><path d="M5 2.8L5.9 3.8L5 4.8L4.1 3.8Z" fill="#a8dcff"/><path d="M9.3 2.3A1.6 1.6 0 1 0 9.3 5.8A2 2 0 0 1 9.3 2.3Z" fill="#c8f4ff"/><path d="M12.5 2.2V4.2M11.5 3.2H13.5" stroke="#a8dcff" stroke-width="0.8"/></svg><span class="t">Swisstopo - ch.bakom.anschlussart-koaxialkabel</span></div>
<div class="row" style="top:540px"><div class="h"></div><svg class="ic" viewBox="0 0 16 14"><rect x="1" y="0" width="14" height="13" fill="#fff"/><path d="M0.6 0.5V12.6Q0.6 13.4 1.4 13.4H14.6Q15.4 13.4 15.4 12.6V0.5" fill="none" stroke="#6a6a6a" stroke-width="1.1"/><rect x="2" y="0.3" width="12" height="0.9" fill="#b8eef8"/><rect x="2" y="1.2" width="12" height="10" fill="#3f8ed6"/><path d="M2 11.2V7.5L4.6 5.3L7.8 8.2L9.4 7.2L11.5 5.2L14 7.8V11.2Z" fill="#5e5e5e"/><path d="M5 2.8L5.9 3.8L5 4.8L4.1 3.8Z" fill="#a8dcff"/><path d="M9.3 2.3A1.6 1.6 0 1 0 9.3 5.8A2 2 0 0 1 9.3 2.3Z" fill="#c8f4ff"/><path d="M12.5 2.2V4.2M11.5 3.2H13.5" stroke="#a8dcff" stroke-width="0.8"/></svg><span class="t">Swisstopo - ch.bakom.anschlussart-kupferdraht</span></div>
<div class="row" style="top:558px"><div class="h"></div><svg class="ic" viewBox="0 0 16 14"><rect x="1" y="0" width="14" height="13" fill="#fff"/><path d="M0.6 0.5V12.6Q0.6 13.4 1.4 13.4H14.6Q15.4 13.4 15.4 12.6V0.5" fill="none" stroke="#6a6a6a" stroke-width="1.1"/><rect x="2" y="0.3" width="12" height="0.9" fill="#b8eef8"/><rect x="2" y="1.2" width="12" height="10" fill="#3f8ed6"/><path d="M2 11.2V7.5L4.6 5.3L7.8 8.2L9.4 7.2L11.5 5.2L14 7.8V11.2Z" fill="#5e5e5e"/><path d="M5 2.8L5.9 3.8L5 4.8L4.1 3.8Z" fill="#a8dcff"/><path d="M9.3 2.3A1.6 1.6 0 1 0 9.3 5.8A2 2 0 0 1 9.3 2.3Z" fill="#c8f4ff"/><path d="M12.5 2.2V4.2M11.5 3.2H13.5" stroke="#a8dcff" stroke-width="0.8"/></svg><span class="t">Swisstopo - ch.baspo.nationales-sportanlagenkonzept</span></div>
<div class="row" style="top:576px"><div class="h"></div><svg class="ic" viewBox="0 0 16 14"><rect x="1" y="0" width="14" height="13" fill="#fff"/><path d="M0.6 0.5V12.6Q0.6 13.4 1.4 13.4H14.6Q15.4 13.4 15.4 12.6V0.5" fill="none" stroke="#6a6a6a" stroke-width="1.1"/><rect x="2" y="0.3" width="12" height="0.9" fill="#b8eef8"/><rect x="2" y="1.2" width="12" height="10" fill="#3f8ed6"/><path d="M2 11.2V7.5L4.6 5.3L7.8 8.2L9.4 7.2L11.5 5.2L14 7.8V11.2Z" fill="#5e5e5e"/><path d="M5 2.8L5.9 3.8L5 4.8L4.1 3.8Z" fill="#a8dcff"/><path d="M9.3 2.3A1.6 1.6 0 1 0 9.3 5.8A2 2 0 0 1 9.3 2.3Z" fill="#c8f4ff"/><path d="M12.5 2.2V4.2M11.5 3.2H13.5" stroke="#a8dcff" stroke-width="0.8"/></svg><span class="t">Swisstopo - ch.bav.schienennetz</span></div>
<div class="row" style="top:594px"><div class="h"></div><svg class="ic" viewBox="0 0 16 14"><rect x="1" y="0" width="14" height="13" fill="#fff"/><path d="M0.6 0.5V12.6Q0.6 13.4 1.4 13.4H14.6Q15.4 13.4 15.4 12.6V0.5" fill="none" stroke="#6a6a6a" stroke-width="1.1"/><rect x="2" y="0.3" width="12" height="0.9" fill="#b8eef8"/><rect x="2" y="1.2" width="12" height="10" fill="#3f8ed6"/><path d="M2 11.2V7.5L4.6 5.3L7.8 8.2L9.4 7.2L11.5 5.2L14 7.8V11.2Z" fill="#5e5e5e"/><path d="M5 2.8L5.9 3.8L5 4.8L4.1 3.8Z" fill="#a8dcff"/><path d="M9.3 2.3A1.6 1.6 0 1 0 9.3 5.8A2 2 0 0 1 9.3 2.3Z" fill="#c8f4ff"/><path d="M12.5 2.2V4.2M11.5 3.2H13.5" stroke="#a8dcff" stroke-width="0.8"/></svg><span class="t">Swisstopo - ch.bazl.bebaute-gebiete_luftfahrtrecht</span></div>
<div class="row" style="top:612px"><div class="h"></div><svg class="ic" viewBox="0 0 16 14"><rect x="1" y="0" width="14" height="13" fill="#fff"/><path d="M0.6 0.5V12.6Q0.6 13.4 1.4 13.4H14.6Q15.4 13.4 15.4 12.6V0.5" fill="none" stroke="#6a6a6a" stroke-width="1.1"/><rect x="2" y="0.3" width="12" height="0.9" fill="#b8eef8"/><rect x="2" y="1.2" width="12" height="10" fill="#3f8ed6"/><path d="M2 11.2V7.5L4.6 5.3L7.8 8.2L9.4 7.2L11.5 5.2L14 7.8V11.2Z" fill="#5e5e5e"/><path d="M5 2.8L5.9 3.8L5 4.8L4.1 3.8Z" fill="#a8dcff"/><path d="M9.3 2.3A1.6 1.6 0 1 0 9.3 5.8A2 2 0 0 1 9.3 2.3Z" fill="#c8f4ff"/><path d="M12.5 2.2V4.2M11.5 3.2H13.5" stroke="#a8dcff" stroke-width="0.8"/></svg><span class="t">Swisstopo - ch.kantone.cadastralwebmap-farbe</span></div>
<div class="row" style="top:630px"><div class="h"></div><svg class="ic" viewBox="0 0 16 14"><rect x="1" y="0" width="14" height="13" fill="#fff"/><path d="M0.6 0.5V12.6Q0.6 13.4 1.4 13.4H14.6Q15.4 13.4 15.4 12.6V0.5" fill="none" stroke="#6a6a6a" stroke-width="1.1"/><rect x="2" y="0.3" width="12" height="0.9" fill="#b8eef8"/><rect x="2" y="1.2" width="12" height="10" fill="#3f8ed6"/><path d="M2 11.2V7.5L4.6 5.3L7.8 8.2L9.4 7.2L11.5 5.2L14 7.8V11.2Z" fill="#5e5e5e"/><path d="M5 2.8L5.9 3.8L5 4.8L4.1 3.8Z" fill="#a8dcff"/><path d="M9.3 2.3A1.6 1.6 0 1 0 9.3 5.8A2 2 0 0 1 9.3 2.3Z" fill="#c8f4ff"/><path d="M12.5 2.2V4.2M11.5 3.2H13.5" stroke="#a8dcff" stroke-width="0.8"/></svg><span class="t">Swisstopo - ch.nagra.aeromagnetische-karte_1100</span></div>
<div class="row" style="top:648px"><div class="h"></div><svg class="ic" viewBox="0 0 16 14"><rect x="1" y="0" width="14" height="13" fill="#fff"/><path d="M0.6 0.5V12.6Q0.6 13.4 1.4 13.4H14.6Q15.4 13.4 15.4 12.6V0.5" fill="none" stroke="#6a6a6a" stroke-width="1.1"/><rect x="2" y="0.3" width="12" height="0.9" fill="#b8eef8"/><rect x="2" y="1.2" width="12" height="10" fill="#3f8ed6"/><path d="M2 11.2V7.5L4.6 5.3L7.8 8.2L9.4 7.2L11.5 5.2L14 7.8V11.2Z" fill="#5e5e5e"/><path d="M5 2.8L5.9 3.8L5 4.8L4.1 3.8Z" fill="#a8dcff"/><path d="M9.3 2.3A1.6 1.6 0 1 0 9.3 5.8A2 2 0 0 1 9.3 2.3Z" fill="#c8f4ff"/><path d="M12.5 2.2V4.2M11.5 3.2H13.5" stroke="#a8dcff" stroke-width="0.8"/></svg><span class="t">Swisstopo - ch.nagra.aeromagnetische-karte_1500</span></div>
<div class="row" style="top:666px"><div class="h"></div><svg class="ic" viewBox="0 0 16 14"><rect x="1" y="0" width="14" height="13" fill="#fff"/><path d="M0.6 0.5V12.6Q0.6 13.4 1.4 13.4H14.6Q15.4 13.4 15.4 12.6V0.5" fill="none" stroke="#6a6a6a" stroke-width="1.1"/><rect x="2" y="0.3" width="12" height="0.9" fill="#b8eef8"/><rect x="2" y="1.2" width="12" height="10" fill="#3f8ed6"/><path d="M2 11.2V7.5L4.6 5.3L7.8 8.2L9.4 7.2L11.5 5.2L14 7.8V11.2Z" fill="#5e5e5e"/><path d="M5 2.8L5.9 3.8L5 4.8L4.1 3.8Z" fill="#a8dcff"/><path d="M9.3 2.3A1.6 1.6 0 1 0 9.3 5.8A2 2 0 0 1 9.3 2.3Z" fill="#c8f4ff"/><path d="M12.5 2.2V4.2M11.5 3.2H13.5" stroke="#a8dcff" stroke-width="0.8"/></svg><span class="t">Swisstopo - ch.swisstopo-karto.hangneigung</span></div>
<div class="row" style="top:684px"><div class="h"></div><svg class="ic" viewBox="0 0 16 14"><rect x="1" y="0" width="14" height="13" fill="#fff"/><path d="M0.6 0.5V12.6Q0.6 13.4 1.4 13.4H14.6Q15.4 13.4 15.4 12.6V0.5" fill="none" stroke="#6a6a6a" stroke-width="1.1"/><rect x="2" y="0.3" width="12" height="0.9" fill="#b8eef8"/><rect x="2" y="1.2" width="12" height="10" fill="#3f8ed6"/><path d="M2 11.2V7.5L4.6 5.3L7.8 8.2L9.4 7.2L11.5 5.2L14 7.8V11.2Z" fill="#5e5e5e"/><path d="M5 2.8L5.9 3.8L5 4.8L4.1 3.8Z" fill="#a8dcff"/><path d="M9.3 2.3A1.6 1.6 0 1 0 9.3 5.8A2 2 0 0 1 9.3 2.3Z" fill="#c8f4ff"/><path d="M12.5 2.2V4.2M11.5 3.2H13.5" stroke="#a8dcff" stroke-width="0.8"/></svg><span class="t">Swisstopo - ch.swisstopo-karto.schneeschuhrouten</span></div>
<div class="row" style="top:702px"><div class="h"></div><svg class="ic" viewBox="0 0 16 14"><rect x="1" y="0" width="14" height="13" fill="#fff"/><path d="M0.6 0.5V12.6Q0.6 13.4 1.4 13.4H14.6Q15.4 13.4 15.4 12.6V0.5" fill="none" stroke="#6a6a6a" stroke-width="1.1"/><rect x="2" y="0.3" width="12" height="0.9" fill="#b8eef8"/><rect x="2" y="1.2" width="12" height="10" fill="#3f8ed6"/><path d="M2 11.2V7.5L4.6 5.3L7.8 8.2L9.4 7.2L11.5 5.2L14 7.8V11.2Z" fill="#5e5e5e"/><path d="M5 2.8L5.9 3.8L5 4.8L4.1 3.8Z" fill="#a8dcff"/><path d="M9.3 2.3A1.6 1.6 0 1 0 9.3 5.8A2 2 0 0 1 9.3 2.3Z" fill="#c8f4ff"/><path d="M12.5 2.2V4.2M11.5 3.2H13.5" stroke="#a8dcff" stroke-width="0.8"/></svg><span class="t">Swisstopo - ch.swisstopo-karto.skitouren</span></div>
<div class="row" style="top:720px"><div class="h"></div><svg class="ic" viewBox="0 0 16 14"><rect x="1" y="0" width="14" height="13" fill="#fff"/><path d="M0.6 0.5V12.6Q0.6 13.4 1.4 13.4H14.6Q15.4 13.4 15.4 12.6V0.5" fill="none" stroke="#6a6a6a" stroke-width="1.1"/><rect x="2" y="0.3" width="12" height="0.9" fill="#b8eef8"/><rect x="2" y="1.2" width="12" height="10" fill="#3f8ed6"/><path d="M2 11.2V7.5L4.6 5.3L7.8 8.2L9.4 7.2L11.5 5.2L14 7.8V11.2Z" fill="#5e5e5e"/><path d="M5 2.8L5.9 3.8L5 4.8L4.1 3.8Z" fill="#a8dcff"/><path d="M9.3 2.3A1.6 1.6 0 1 0 9.3 5.8A2 2 0 0 1 9.3 2.3Z" fill="#c8f4ff"/><path d="M12.5 2.2V4.2M11.5 3.2H13.5" stroke="#a8dcff" stroke-width="0.8"/></svg><span class="t">Swisstopo - ch.swisstopo-vd.spannungsarme-gebiete</span></div>
<div class="row" style="top:738px"><div class="h"></div><svg class="ic" viewBox="0 0 16 14"><rect x="1" y="0" width="14" height="13" fill="#fff"/><path d="M0.6 0.5V12.6Q0.6 13.4 1.4 13.4H14.6Q15.4 13.4 15.4 12.6V0.5" fill="none" stroke="#6a6a6a" stroke-width="1.1"/><rect x="2" y="0.3" width="12" height="0.9" fill="#b8eef8"/><rect x="2" y="1.2" width="12" height="10" fill="#3f8ed6"/><path d="M2 11.2V7.5L4.6 5.3L7.8 8.2L9.4 7.2L11.5 5.2L14 7.8V11.2Z" fill="#5e5e5e"/><path d="M5 2.8L5.9 3.8L5 4.8L4.1 3.8Z" fill="#a8dcff"/><path d="M9.3 2.3A1.6 1.6 0 1 0 9.3 5.8A2 2 0 0 1 9.3 2.3Z" fill="#c8f4ff"/><path d="M12.5 2.2V4.2M11.5 3.2H13.5" stroke="#a8dcff" stroke-width="0.8"/></svg><span class="t">Swisstopo - ch.swisstopo.bahnen-winter</span></div>
<div class="row" style="top:756px"><div class="h"></div><svg class="ic" viewBox="0 0 16 14"><rect x="1" y="0" width="14" height="13" fill="#fff"/><path d="M0.6 0.5V12.6Q0.6 13.4 1.4 13.4H14.6Q15.4 13.4 15.4 12.6V0.5" fill="none" stroke="#6a6a6a" stroke-width="1.1"/><rect x="2" y="0.3" width="12" height="0.9" fill="#b8eef8"/><rect x="2" y="1.2" width="12" height="10" fill="#3f8ed6"/><path d="M2 11.2V7.5L4.6 5.3L7.8 8.2L9.4 7.2L11.5 5.2L14 7.8V11.2Z" fill="#5e5e5e"/><path d="M5 2.8L5.9 3.8L5 4.8L4.1 3.8Z" fill="#a8dcff"/><path d="M9.3 2.3A1.6 1.6 0 1 0 9.3 5.8A2 2 0 0 1 9.3 2.3Z" fill="#c8f4ff"/><path d="M12.5 2.2V4.2M11.5 3.2H13.5" stroke="#a8dcff" stroke-width="0.8"/></svg><span class="t">Swisstopo - ch.swisstopo.digitales-hoehenmodell_25_reliefschattierung</span></div>
<div class="row" style="top:774px"><div class="h"></div><svg class="ic" viewBox="0 0 16 14"><rect x="1" y="0" width="14" height="13" fill="#fff"/><path d="M0.6 0.5V12.6Q0.6 13.4 1.4 13.4H14.6Q15.4 13.4 15.4 12.6V0.5" fill="none" stroke="#6a6a6a" stroke-width="1.1"/><rect x="2" y="0.3" width="12" height="0.9" fill="#b8eef8"/><rect x="2" y="1.2" width="12" height="10" fill="#3f8ed6"/><path d="M2 11.2V7.5L4.6 5.3L7.8 8.2L9.4 7.2L11.5 5.2L14 7.8V11.2Z" fill="#5e5e5e"/><path d="M5 2.8L5.9 3.8L5 4.8L4.1 3.8Z" fill="#a8dcff"/><path d="M9.3 2.3A1.6 1.6 0 1 0 9.3 5.8A2 2 0 0 1 9.3 2.3Z" fill="#c8f4ff"/><path d="M12.5 2.2V4.2M11.5 3.2H13.5" stroke="#a8dcff" stroke-width="0.8"/></svg><span class="t">Swisstopo - ch.swisstopo.dreiecksvermaschung</span></div>
<div class="row" style="top:792px"><div class="h"></div><svg class="ic" viewBox="0 0 16 14"><rect x="1" y="0" width="14" height="13" fill="#fff"/><path d="M0.6 0.5V12.6Q0.6 13.4 1.4 13.4H14.6Q15.4 13.4 15.4 12.6V0.5" fill="none" stroke="#6a6a6a" stroke-width="1.1"/><rect x="2" y="0.3" width="12" height="0.9" fill="#b8eef8"/><rect x="2" y="1.2" width="12" height="10" fill="#3f8ed6"/><path d="M2 11.2V7.5L4.6 5.3L7.8 8.2L9.4 7.2L11.5 5.2L14 7.8V11.2Z" fill="#5e5e5e"/><path d="M5 2.8L5.9 3.8L5 4.8L4.1 3.8Z" fill="#a8dcff"/><path d="M9.3 2.3A1.6 1.6 0 1 0 9.3 5.8A2 2 0 0 1 9.3 2.3Z" fill="#c8f4ff"/><path d="M12.5 2.2V4.2M11.5 3.2H13.5" stroke="#a8dcff" stroke-width="0.8"/></svg><span class="t">Swisstopo - ch.swisstopo.fixpunkte-agnes</span></div>
<div class="row" style="top:810px"><div class="h"></div><svg class="ic" viewBox="0 0 16 14"><rect x="1" y="0" width="14" height="13" fill="#fff"/><path d="M0.6 0.5V12.6Q0.6 13.4 1.4 13.4H14.6Q15.4 13.4 15.4 12.6V0.5" fill="none" stroke="#6a6a6a" stroke-width="1.1"/><rect x="2" y="0.3" width="12" height="0.9" fill="#b8eef8"/><rect x="2" y="1.2" width="12" height="10" fill="#3f8ed6"/><path d="M2 11.2V7.5L4.6 5.3L7.8 8.2L9.4 7.2L11.5 5.2L14 7.8V11.2Z" fill="#5e5e5e"/><path d="M5 2.8L5.9 3.8L5 4.8L4.1 3.8Z" fill="#a8dcff"/><path d="M9.3 2.3A1.6 1.6 0 1 0 9.3 5.8A2 2 0 0 1 9.3 2.3Z" fill="#c8f4ff"/><path d="M12.5 2.2V4.2M11.5 3.2H13.5" stroke="#a8dcff" stroke-width="0.8"/></svg><span class="t">Swisstopo - ch.swisstopo.geoidmodell-ch1903</span></div>
<div class="row" style="top:828px"><div class="h"></div><svg class="ic" viewBox="0 0 16 14"><rect x="1" y="0" width="14" height="13" fill="#fff"/><path d="M0.6 0.5V12.6Q0.6 13.4 1.4 13.4H14.6Q15.4 13.4 15.4 12.6V0.5" fill="none" stroke="#6a6a6a" stroke-width="1.1"/><rect x="2" y="0.3" width="12" height="0.9" fill="#b8eef8"/><rect x="2" y="1.2" width="12" height="10" fill="#3f8ed6"/><path d="M2 11.2V7.5L4.6 5.3L7.8 8.2L9.4 7.2L11.5 5.2L14 7.8V11.2Z" fill="#5e5e5e"/><path d="M5 2.8L5.9 3.8L5 4.8L4.1 3.8Z" fill="#a8dcff"/><path d="M9.3 2.3A1.6 1.6 0 1 0 9.3 5.8A2 2 0 0 1 9.3 2.3Z" fill="#c8f4ff"/><path d="M12.5 2.2V4.2M11.5 3.2H13.5" stroke="#a8dcff" stroke-width="0.8"/></svg><span class="t">Swisstopo - ch.swisstopo.geoidmodell-etrs89</span></div>
<div class="row" style="top:846px"><div class="h"></div><svg class="ic" viewBox="0 0 16 14"><rect x="1" y="0" width="14" height="13" fill="#fff"/><path d="M0.6 0.5V12.6Q0.6 13.4 1.4 13.4H14.6Q15.4 13.4 15.4 12.6V0.5" fill="none" stroke="#6a6a6a" stroke-width="1.1"/><rect x="2" y="0.3" width="12" height="0.9" fill="#b8eef8"/><rect x="2" y="1.2" width="12" height="10" fill="#3f8ed6"/><path d="M2 11.2V7.5L4.6 5.3L7.8 8.2L9.4 7.2L11.5 5.2L14 7.8V11.2Z" fill="#5e5e5e"/><path d="M5 2.8L5.9 3.8L5 4.8L4.1 3.8Z" fill="#a8dcff"/><path d="M9.3 2.3A1.6 1.6 0 1 0 9.3 5.8A2 2 0 0 1 9.3 2.3Z" fill="#c8f4ff"/><path d="M12.5 2.2V4.2M11.5 3.2H13.5" stroke="#a8dcff" stroke-width="0.8"/></svg><span class="t">Swisstopo - ch.swisstopo.geologie-bodenunruhe</span></div>
<div class="row" style="top:864px"><div class="h"></div><svg class="ic" viewBox="0 0 16 14"><rect x="1" y="0" width="14" height="13" fill="#fff"/><path d="M0.6 0.5V12.6Q0.6 13.4 1.4 13.4H14.6Q15.4 13.4 15.4 12.6V0.5" fill="none" stroke="#6a6a6a" stroke-width="1.1"/><rect x="2" y="0.3" width="12" height="0.9" fill="#b8eef8"/><rect x="2" y="1.2" width="12" height="10" fill="#3f8ed6"/><path d="M2 11.2V7.5L4.6 5.3L7.8 8.2L9.4 7.2L11.5 5.2L14 7.8V11.2Z" fill="#5e5e5e"/><path d="M5 2.8L5.9 3.8L5 4.8L4.1 3.8Z" fill="#a8dcff"/><path d="M9.3 2.3A1.6 1.6 0 1 0 9.3 5.8A2 2 0 0 1 9.3 2.3Z" fill="#c8f4ff"/><path d="M12.5 2.2V4.2M11.5 3.2H13.5" stroke="#a8dcff" stroke-width="0.8"/></svg><span class="t">Swisstopo - ch.swisstopo.geologie-dosisleistung-terrestrisch</span></div>
<div class="row" style="top:882px"><div class="h"></div><svg class="ic" viewBox="0 0 16 14"><rect x="1" y="0" width="14" height="13" fill="#fff"/><path d="M0.6 0.5V12.6Q0.6 13.4 1.4 13.4H14.6Q15.4 13.4 15.4 12.6V0.5" fill="none" stroke="#6a6a6a" stroke-width="1.1"/><rect x="2" y="0.3" width="12" height="0.9" fill="#b8eef8"/><rect x="2" y="1.2" width="12" height="10" fill="#3f8ed6"/><path d="M2 11.2V7.5L4.6 5.3L7.8 8.2L9.4 7.2L11.5 5.2L14 7.8V11.2Z" fill="#5e5e5e"/><path d="M5 2.8L5.9 3.8L5 4.8L4.1 3.8Z" fill="#a8dcff"/><path d="M9.3 2.3A1.6 1.6 0 1 0 9.3 5.8A2 2 0 0 1 9.3 2.3Z" fill="#c8f4ff"/><path d="M12.5 2.2V4.2M11.5 3.2H13.5" stroke="#a8dcff" stroke-width="0.8"/></svg><span class="t">Swisstopo - ch.swisstopo.geologie-eiszeit-lgm</span></div>
</div>
<div class="a" style="left:573px;top:110px;width:18px;height:900px;background:#f0f0f0"></div>
<div class="a" style="left:581px;top:569px;width:2px;height:102px;background:#888"></div>

<div class="a" style="left:600px;top:44px;width:1320px;height:2px;border-top:1px solid #a0a0a0;border-bottom:1px solid #fff"></div>
<div class="a" style="left:600px;top:46px;width:1320px;height:27px;background:#f0f0f0"></div>
<svg class="a" style="left:611px;top:50px" width="16" height="16" viewBox="0 0 16 16"><circle cx="6.5" cy="6.5" r="5" fill="none" stroke="#000050" stroke-width="1.6"/><path d="M4 6.5 H9 M6.5 4 V9" stroke="#000050" stroke-width="1.8"/><path d="M10 10 L14.5 14.5" stroke="#000050" stroke-width="2"/></svg>
<span class="a" style="left:632px;top:53px;font-size:12.5px">Zoom in</span>
<span class="a" style="left:718px;top:53px;font-size:12.5px;color:#a0a0a0">Zoom out</span>
<div class="a" style="left:783px;top:48px;width:2px;height:22px;border-left:1px solid #a0a0a0;border-right:1px solid #fff"></div>
<div class="a" style="left:788px;top:48px;width:90px;height:22px;background:#f6f6f6;border-top:1px solid #a0a0a0;border-left:1px solid #a0a0a0;border-right:1px solid #fff;border-bottom:1px solid #fff"></div>
<svg class="a" style="left:802px;top:51px" width="12" height="15" viewBox="0 0 12 15"><path d="M3.5 8 V2.5 Q3.5 1.5 4.5 1.5 Q5.5 1.5 5.5 2.5 V7 V1.5 Q5.5 0.5 6.5 0.5 Q7.5 0.5 7.5 1.5 V7 V2 Q7.5 1 8.5 1 Q9.5 1 9.5 2 V7.5 V4 Q9.5 3 10.5 3 Q11.5 3 11.5 4 V10 Q11.5 14.5 7 14.5 Q4 14.5 2.5 12 L0.5 8.5 Q0.3 7.5 1.3 7.5 Q2 7.5 3.5 9.5" fill="none" stroke="#222" stroke-width="0.9"/></svg>
<span class="a" style="left:819px;top:54px;font-size:12.5px">Pan map</span>
<svg class="a" style="left:886px;top:52px" width="15" height="15" viewBox="0 0 15 15"><rect x="0.5" y="0.5" width="13" height="13" rx="2.5" fill="none" stroke="#222" stroke-width="1" stroke-dasharray="3.2 2.2"/></svg>
<span class="a" style="left:905px;top:53px;font-size:12.5px">Rectangle</span>
<div class="a" style="left:976px;top:48px;width:280px;height:22px;background:#fff"></div>
<svg class="a" style="left:1264px;top:51px" width="14" height="16" viewBox="0 0 14 16"><path d="M7 0.5 V10 M3.5 6.5 L7 10 L10.5 6.5 M0.5 10.5 V13.5 Q0.5 14.5 1.5 14.5 H12.5 Q13.5 14.5 13.5 13.5 V10.5" fill="none" stroke="#333" stroke-width="1"/></svg>
<span class="a" style="left:1283px;top:53px;font-size:12.5px">Download</span>
<div class="a" style="left:600px;top:73px;width:1320px;height:940px;background:#fff;border-right:2px solid #8f8f8f;border-bottom:2px solid #8f8f8f"></div>
<style>#mp rect{width:9px;height:9px}.c0{fill:#fa74fa}.c1{fill:#a8f8f8}.c2{fill:#14b8c4}.c3{fill:#70f070}.c4{fill:#209820}.c5{fill:#4848f0}.c6{fill:#f8f800}.c7{fill:#d06810}.c8{fill:#d89818}.c9{fill:#888}.c10{fill:#d8d8d8}.c11{fill:#888}</style><svg id="mp" class="a" style="left:0;top:0" width="1920" height="1032" stroke="#100010" stroke-width="1.25"><defs><g id="g"><rect x="0" y="0"/><path d="M0 4.2H9M4.2 0V9" fill="none" stroke-width="1.6"/></g></defs><g transform="translate(.5 .5)"><rect x="1136" y="439" class="c0"/><use href="#g" x="1198" y="522" class="c0"/><rect x="1054" y="651" class="c2"/><rect x="1295" y="412" class="c0"/><rect x="1018" y="430" class="c5"/><rect x="1337" y="443" class="c5"/><rect x="1298" y="376" class="c4"/><rect x="1076" y="467" class="c2"/><use href="#g" x="976" y="628" class="c5"/><rect x="1223" y="459" class="c0"/><rect x="977" y="641" class="c0"/><rect x="1246" y="461" class="c0"/><rect x="1464" y="502" class="c0"/><rect x="879" y="628" class="c1"/><rect x="1262" y="434" class="c4"/><use href="#g" x="1073" y="552" class="c4"/><rect x="1216" y="577" class="c0"/><path d="M881 611l5-10 5 10z" class="c1"/><rect x="1446" y="381" class="c4"/><use href="#g" x="1200" y="424" class="c0"/><use href="#g" x="1455" y="375" class="c0"/><use href="#g" x="1374" y="377" class="c2"/><rect x="1328" y="731" class="c3"/><rect x="1271" y="313" class="c0"/><rect x="1073" y="384" class="c0"/><use href="#g" x="996" y="517" class="c0"/><use href="#g" x="1270" y="417" class="c0"/><rect x="1467" y="512" class="c3"/><rect x="1325" y="488" class="c3"/><rect x="1364" y="350" class="c1"/><rect x="939" y="586" class="c1"/><rect x="932" y="582" class="c0"/><use href="#g" x="1293" y="291" class="c0"/><rect x="1076" y="414" class="c0"/><rect x="955" y="588" class="c2"/><rect x="1198" y="455" class="c0"/><use href="#g" x="1208" y="513" class="c0"/><use href="#g" x="1087" y="345" class="c3"/><rect x="1402" y="388" class="c1"/><rect x="1108" y="426" class="c6"/><rect x="1225" y="472" class="c0"/><use href="#g" x="1229" y="507" class="c0"/><rect x="1301" y="502" class="c0"/><rect x="1325" y="431" class="c4"/><rect x="1297" y="448" class="c0"/><use href="#g" x="1333" y="457" class="c5"/><rect x="1176" y="386" class="c0"/><rect x="1382" y="393" class="c0"/><path d="M1277 622l5-10 5 10z" class="c0"/><path d="M1429 373l5-10 5 10z" class="c3"/><rect x="1573" y="562" class="c0"/><rect x="879" y="640" class="c0"/><rect x="1266" y="498" class="c6"/><rect x="1295" y="597" class="c0"/><rect x="1240" y="627" class="c0"/><use href="#g" x="1298" y="444" class="c0"/><rect x="1332" y="479" class="c1"/><rect x="917" y="506" class="c6"/><use href="#g" x="1083" y="513" class="c4"/><rect x="1451" y="395" class="c3"/><use href="#g" x="1280" y="413" class="c4"/><rect x="1262" y="336" class="c6"/><rect x="1006" y="540" class="c0"/><rect x="1028" y="467" class="c0"/><rect x="1229" y="452" class="c5"/><rect x="1283" y="716" class="c5"/><rect x="1162" y="401" class="c0"/><rect x="1255" y="459" class="c0"/><rect x="919" y="543" class="c0"/><use href="#g" x="1237" y="443" class="c0"/><path d="M1233 542l5-10 5 10z" class="c4"/><rect x="1261" y="438" class="c0"/><use href="#g" x="1232" y="442" class="c3"/><rect x="908" y="589" class="c0"/><rect x="1378" y="359" class="c4"/><rect x="1234" y="471" class="c3"/><rect x="1127" y="586" class="c10"/><rect x="1301" y="480" class="c0"/><rect x="1391" y="341" class="c5"/><rect x="816" y="723" class="c4"/><rect x="1265" y="316" class="c9"/><rect x="1477" y="380" class="c4"/><rect x="1298" y="334" class="c5"/><use href="#g" x="1124" y="523" class="c5"/><rect x="912" y="579" class="c0"/><rect x="1446" y="389" class="c0"/><rect x="1261" y="336" class="c0"/><rect x="997" y="530" class="c0"/><use href="#g" x="1069" y="427" class="c5"/><use href="#g" x="1239" y="484" class="c2"/><rect x="1309" y="311" class="c0"/><rect x="1268" y="512" class="c4"/><rect x="995" y="652" class="c6"/><rect x="1368" y="494" class="c5"/><use href="#g" x="1084" y="491" class="c1"/><use href="#g" x="1209" y="444" class="c0"/><rect x="969" y="671" class="c0"/><use href="#g" x="1218" y="409" class="c0"/><rect x="1190" y="573" class="c1"/><rect x="1113" y="622" class="c0"/><use href="#g" x="1067" y="508" class="c0"/><use href="#g" x="1207" y="447" class="c3"/><rect x="1096" y="549" class="c0"/><rect x="1273" y="463" class="c2"/><rect x="1422" y="589" class="c3"/><rect x="865" y="635" class="c0"/><rect x="1141" y="720" class="c0"/><rect x="1315" y="373" class="c5"/><path d="M1109 601l5-10 5 10z" class="c4"/><use href="#g" x="1186" y="434" class="c0"/><rect x="1282" y="526" class="c1"/><use href="#g" x="1128" y="457" class="c4"/><use href="#g" x="942" y="617" class="c0"/><rect x="915" y="513" class="c0"/><rect x="1203" y="376" class="c3"/><rect x="862" y="658" class="c0"/><rect x="1134" y="504" class="c0"/><rect x="1237" y="467" class="c0"/><rect x="1318" y="717" class="c0"/><use href="#g" x="1025" y="441" class="c4"/><rect x="1005" y="502" class="c7"/><use href="#g" x="1042" y="409" class="c3"/><rect x="1288" y="357" class="c0"/><rect x="898" y="597" class="c0"/><use href="#g" x="1153" y="470" class="c0"/><rect x="1287" y="523" class="c0"/><use href="#g" x="1154" y="444" class="c5"/><rect x="1086" y="494" class="c0"/><rect x="1358" y="324" class="c2"/><rect x="1228" y="478" class="c0"/><rect x="1442" y="392" class="c0"/><rect x="1268" y="357" class="c5"/><use href="#g" x="1081" y="477" class="c5"/><rect x="1149" y="690" class="c0"/><rect x="1034" y="446" class="c1"/><rect x="1522" y="564" class="c0"/><path d="M1088 699l5-10 5 10z" class="c0"/><rect x="1342" y="452" class="c2"/><path d="M1468 627l5-10 5 10z" class="c3"/><use href="#g" x="1164" y="437" class="c0"/><use href="#g" x="993" y="456" class="c7"/><path d="M1055 437l5-10 5 10z" class="c0"/><use href="#g" x="1038" y="538" class="c0"/><use href="#g" x="1201" y="438" class="c0"/><rect x="1269" y="333" class="c0"/><rect x="1459" y="580" class="c2"/><rect x="1379" y="360" class="c0"/><use href="#g" x="1159" y="540" class="c2"/><use href="#g" x="1332" y="416" class="c0"/><use href="#g" x="1267" y="347" class="c9"/><rect x="953" y="644" class="c1"/><rect x="1149" y="421" class="c3"/><use href="#g" x="1114" y="602" class="c0"/><path d="M931 577l5-10 5 10z" class="c5"/><rect x="1058" y="421" class="c0"/><use href="#g" x="936" y="624" class="c4"/><rect x="1049" y="438" class="c1"/><use href="#g" x="1095" y="457" class="c4"/><rect x="977" y="648" class="c5"/><use href="#g" x="1203" y="441" class="c7"/><use href="#g" x="994" y="557" class="c7"/><rect x="1387" y="406" class="c0"/><rect x="1043" y="713" class="c0"/><use href="#g" x="936" y="535" class="c2"/><rect x="1548" y="657" class="c0"/><rect x="1174" y="351" class="c3"/><rect x="907" y="640" class="c0"/><rect x="1602" y="551" class="c0"/><use href="#g" x="949" y="636" class="c0"/><rect x="897" y="559" class="c0"/><rect x="1221" y="515" class="c0"/><use href="#g" x="887" y="605" class="c2"/><rect x="1008" y="463" class="c0"/><rect x="1127" y="516" class="c0"/><rect x="911" y="623" class="c0"/><use href="#g" x="1026" y="750" class="c5"/><use href="#g" x="1191" y="458" class="c0"/><path d="M1005 758l5-10 5 10z" class="c3"/><rect x="1311" y="410" class="c0"/><rect x="1334" y="334" class="c0"/><rect x="1232" y="366" class="c0"/><rect x="1171" y="485" class="c0"/><rect x="1121" y="395" class="c0"/><use href="#g" x="1477" y="389" class="c2"/><rect x="1182" y="603" class="c0"/><rect x="962" y="509" class="c2"/><use href="#g" x="1108" y="542" class="c0"/><use href="#g" x="995" y="487" class="c0"/><rect x="943" y="641" class="c3"/><use href="#g" x="855" y="658" class="c3"/><rect x="1132" y="472" class="c4"/><rect x="932" y="510" class="c5"/><use href="#g" x="1289" y="565" class="c0"/><rect x="1217" y="522" class="c5"/><use href="#g" x="1211" y="424" class="c1"/><use href="#g" x="1217" y="357" class="c4"/><rect x="1289" y="538" class="c2"/><use href="#g" x="1350" y="344" class="c0"/><use href="#g" x="1192" y="377" class="c0"/><rect x="1097" y="446" class="c0"/><rect x="1134" y="433" class="c0"/><path d="M1134 485l5-10 5 10z" class="c0"/><rect x="1336" y="388" class="c1"/><rect x="1276" y="619" class="c0"/><rect x="829" y="714" class="c0"/><rect x="847" y="635" class="c2"/><rect x="842" y="672" class="c0"/><rect x="1403" y="550" class="c0"/><rect x="850" y="617" class="c0"/><rect x="993" y="473" class="c0"/><rect x="837" y="698" class="c0"/><rect x="1165" y="357" class="c3"/><use href="#g" x="1266" y="406" class="c3"/><rect x="1296" y="419" class="c2"/><use href="#g" x="1142" y="426" class="c1"/><rect x="1439" y="438" class="c0"/><use href="#g" x="1100" y="439" class="c4"/><rect x="962" y="715" class="c0"/><rect x="1227" y="367" class="c0"/><path d="M1220 404l5-10 5 10z" class="c1"/><rect x="1294" y="357" class="c0"/><use href="#g" x="1302" y="313" class="c7"/><rect x="1246" y="520" class="c0"/><rect x="1204" y="472" class="c3"/><use href="#g" x="928" y="532" class="c0"/><use href="#g" x="1204" y="505" class="c0"/><use href="#g" x="976" y="467" class="c2"/><use href="#g" x="1262" y="453" class="c0"/><rect x="855" y="646" class="c1"/><rect x="1042" y="451" class="c0"/><rect x="1277" y="614" class="c1"/><path d="M1396 377l5-10 5 10z" class="c5"/><use href="#g" x="1259" y="341" class="c0"/><path d="M1089 575l5-10 5 10z" class="c2"/><path d="M1016 778l5-10 5 10z" class="c0"/><use href="#g" x="1158" y="381" class="c0"/><rect x="813" y="719" class="c1"/><path d="M1289 684l5-10 5 10z" class="c4"/><rect x="1110" y="419" class="c0"/><use href="#g" x="1428" y="380" class="c1"/><rect x="1413" y="392" class="c2"/><rect x="1272" y="380" class="c4"/><use href="#g" x="1097" y="462" class="c0"/><rect x="1170" y="427" class="c5"/><use href="#g" x="1152" y="406" class="c0"/><use href="#g" x="1167" y="388" class="c7"/><rect x="1379" y="343" class="c0"/><rect x="1485" y="646" class="c3"/><use href="#g" x="1058" y="418" class="c0"/><rect x="1219" y="482" class="c2"/><rect x="1119" y="592" class="c0"/><rect x="1128" y="448" class="c3"/><use href="#g" x="1248" y="418" class="c0"/><rect x="932" y="635" class="c0"/><use href="#g" x="1249" y="477" class="c2"/><use href="#g" x="847" y="658" class="c0"/><rect x="948" y="486" class="c1"/><rect x="991" y="687" class="c1"/><use href="#g" x="1343" y="387" class="c0"/><rect x="1325" y="496" class="c1"/><use href="#g" x="1172" y="492" class="c2"/><rect x="1214" y="502" class="c3"/><path d="M1136 744l5-10 5 10z" class="c0"/><rect x="1210" y="412" class="c0"/><rect x="1297" y="402" class="c0"/><use href="#g" x="1334" y="349" class="c1"/><rect x="1547" y="681" class="c0"/><rect x="1182" y="430" class="c0"/><use href="#g" x="1105" y="392" class="c0"/><rect x="1261" y="387" class="c0"/><path d="M1431 628l5-10 5 10z" class="c0"/><rect x="1073" y="466" class="c0"/><use href="#g" x="1292" y="380" class="c0"/><use href="#g" x="1172" y="380" class="c0"/><rect x="980" y="533" class="c3"/><use href="#g" x="961" y="562" class="c2"/><rect x="1272" y="366" class="c0"/><rect x="926" y="544" class="c2"/><rect x="1019" y="458" class="c0"/><use href="#g" x="1305" y="538" class="c0"/><rect x="1561" y="589" class="c0"/><use href="#g" x="1294" y="553" class="c4"/><use href="#g" x="1215" y="423" class="c0"/><use href="#g" x="1400" y="393" class="c0"/><use href="#g" x="1042" y="436" class="c3"/><use href="#g" x="1311" y="329" class="c5"/><rect x="1605" y="553" class="c3"/><rect x="1324" y="458" class="c0"/><path d="M1282 607l5-10 5 10z" class="c5"/><rect x="1273" y="424" class="c1"/><use href="#g" x="1449" y="376" class="c2"/><rect x="1265" y="297" class="c0"/><rect x="1423" y="416" class="c8"/><rect x="1043" y="434" class="c0"/><rect x="1198" y="716" class="c5"/><use href="#g" x="1094" y="401" class="c1"/><rect x="1138" y="479" class="c0"/><rect x="1054" y="469" class="c0"/><path d="M1210 481l5-10 5 10z" class="c0"/><rect x="989" y="668" class="c0"/><path d="M839 727l5-10 5 10z" class="c0"/><rect x="1202" y="527" class="c4"/><rect x="1003" y="618" class="c0"/><rect x="1077" y="501" class="c5"/><rect x="1225" y="372" class="c2"/><rect x="1067" y="418" class="c7"/><rect x="1362" y="418" class="c0"/><rect x="968" y="597" class="c4"/><rect x="1223" y="507" class="c7"/><use href="#g" x="1193" y="466" class="c0"/><rect x="1048" y="416" class="c0"/><use href="#g" x="1320" y="362" class="c2"/><rect x="1218" y="447" class="c0"/><use href="#g" x="1012" y="423" class="c1"/><rect x="1171" y="396" class="c2"/><rect x="851" y="620" class="c1"/><rect x="1063" y="519" class="c0"/><rect x="913" y="527" class="c2"/><rect x="1056" y="613" class="c2"/><rect x="1328" y="603" class="c6"/><use href="#g" x="1209" y="477" class="c7"/><rect x="1082" y="493" class="c1"/><path d="M1286 736l5-10 5 10z" class="c5"/><rect x="1230" y="377" class="c1"/><rect x="1285" y="517" class="c7"/><rect x="1084" y="542" class="c5"/><rect x="1256" y="373" class="c4"/><rect x="885" y="638" class="c2"/><rect x="1008" y="586" class="c0"/><rect x="1133" y="368" class="c0"/><rect x="1242" y="412" class="c5"/><use href="#g" x="1304" y="430" class="c4"/><rect x="1120" y="414" class="c2"/><rect x="1392" y="454" class="c0"/><rect x="1185" y="492" class="c2"/><rect x="1173" y="465" class="c1"/><rect x="1120" y="373" class="c0"/><use href="#g" x="1402" y="379" class="c7"/><rect x="1135" y="396" class="c0"/><rect x="1106" y="492" class="c0"/><rect x="891" y="615" class="c5"/><rect x="941" y="625" class="c0"/><use href="#g" x="1064" y="495" class="c5"/><rect x="1118" y="352" class="c0"/><rect x="1234" y="578" class="c0"/><use href="#g" x="1006" y="432" class="c0"/><use href="#g" x="1462" y="409" class="c5"/><rect x="1332" y="332" class="c1"/><rect x="1201" y="511" class="c4"/><use href="#g" x="1196" y="387" class="c0"/><rect x="1469" y="630" class="c5"/><path d="M1490 516l5-10 5 10z" class="c2"/><rect x="1133" y="455" class="c0"/><use href="#g" x="1291" y="317" class="c5"/><use href="#g" x="1444" y="419" class="c4"/><rect x="988" y="557" class="c9"/><rect x="1158" y="405" class="c8"/><use href="#g" x="956" y="631" class="c2"/><rect x="1224" y="455" class="c0"/><rect x="1077" y="492" class="c5"/><rect x="860" y="603" class="c7"/><rect x="1103" y="485" class="c1"/><rect x="888" y="582" class="c0"/><rect x="1052" y="517" class="c0"/><rect x="1174" y="496" class="c0"/><rect x="1288" y="395" class="c4"/><use href="#g" x="1141" y="468" class="c3"/><rect x="1364" y="383" class="c0"/><use href="#g" x="937" y="498" class="c5"/><rect x="1224" y="417" class="c0"/><rect x="1159" y="462" class="c0"/><use href="#g" x="1034" y="462" class="c0"/><path d="M1216 564l5-10 5 10z" class="c0"/><rect x="1456" y="380" class="c1"/><rect x="1518" y="535" class="c0"/><rect x="1097" y="426" class="c0"/><rect x="1402" y="338" class="c0"/><rect x="1221" y="473" class="c0"/><use href="#g" x="1287" y="512" class="c0"/><rect x="1368" y="349" class="c1"/><rect x="1281" y="438" class="c0"/><rect x="1095" y="387" class="c0"/><rect x="1599" y="553" class="c0"/><rect x="1317" y="332" class="c6"/><rect x="1166" y="536" class="c0"/><use href="#g" x="1000" y="443" class="c0"/><use href="#g" x="1344" y="758" class="c0"/><rect x="1329" y="327" class="c4"/><rect x="1252" y="378" class="c1"/><rect x="1288" y="353" class="c5"/><use href="#g" x="1218" y="368" class="c1"/><use href="#g" x="1213" y="486" class="c0"/><rect x="1127" y="500" class="c0"/><rect x="1275" y="401" class="c7"/><rect x="1621" y="602" class="c0"/><rect x="1127" y="438" class="c0"/><path d="M902 652l5-10 5 10z" class="c2"/><path d="M1431 578l5-10 5 10z" class="c0"/><use href="#g" x="1451" y="382" class="c0"/><rect x="1238" y="461" class="c4"/><rect x="913" y="589" class="c0"/><rect x="1062" y="404" class="c7"/><rect x="1197" y="491" class="c2"/><rect x="1275" y="379" class="c0"/><rect x="877" y="597" class="c0"/><use href="#g" x="1180" y="487" class="c2"/><rect x="1126" y="547" class="c0"/><rect x="1224" y="352" class="c0"/><use href="#g" x="1205" y="516" class="c3"/><rect x="1018" y="490" class="c0"/><rect x="1154" y="582" class="c0"/><rect x="934" y="557" class="c0"/><use href="#g" x="1364" y="323" class="c5"/><path d="M1299 449l5-10 5 10z" class="c2"/><rect x="1345" y="342" class="c0"/><rect x="1433" y="567" class="c1"/><rect x="1368" y="392" class="c0"/><rect x="1400" y="385" class="c0"/><use href="#g" x="1047" y="548" class="c0"/><rect x="1354" y="787" class="c0"/><rect x="1362" y="514" class="c7"/><rect x="1326" y="647" class="c0"/><rect x="961" y="483" class="c0"/><rect x="1200" y="435" class="c3"/><rect x="1350" y="372" class="c0"/><use href="#g" x="1193" y="393" class="c3"/><use href="#g" x="1024" y="508" class="c1"/><rect x="1281" y="361" class="c6"/><rect x="853" y="609" class="c0"/><rect x="1014" y="693" class="c5"/><rect x="965" y="503" class="c0"/><rect x="1049" y="567" class="c5"/><use href="#g" x="906" y="612" class="c3"/><rect x="1114" y="455" class="c0"/><use href="#g" x="1089" y="415" class="c5"/><rect x="1444" y="499" class="c0"/><rect x="1350" y="449" class="c3"/><rect x="1539" y="653" class="c1"/><rect x="1168" y="423" class="c2"/><rect x="966" y="685" class="c0"/><use href="#g" x="1124" y="368" class="c3"/><use href="#g" x="1274" y="443" class="c1"/><rect x="1268" y="515" class="c0"/><use href="#g" x="1087" y="555" class="c0"/><path d="M1066 460l5-10 5 10z" class="c0"/><rect x="840" y="682" class="c4"/><use href="#g" x="996" y="605" class="c0"/><rect x="1346" y="323" class="c0"/><rect x="937" y="513" class="c0"/><use href="#g" x="912" y="613" class="c5"/><path d="M1587 568l5-10 5 10z" class="c0"/><rect x="1030" y="493" class="c7"/><use href="#g" x="968" y="479" class="c8"/><rect x="1086" y="464" class="c0"/><rect x="1188" y="441" class="c0"/><rect x="1445" y="448" class="c0"/><use href="#g" x="1022" y="534" class="c1"/><rect x="1357" y="344" class="c7"/><rect x="900" y="624" class="c1"/><rect x="1308" y="439" class="c0"/><rect x="1322" y="443" class="c0"/><rect x="1293" y="312" class="c2"/><use href="#g" x="1068" y="537" class="c0"/><rect x="1432" y="527" class="c0"/><use href="#g" x="1416" y="378" class="c0"/><use href="#g" x="1171" y="474" class="c7"/><use href="#g" x="982" y="452" class="c0"/><rect x="1204" y="424" class="c0"/><rect x="1201" y="359" class="c1"/><use href="#g" x="984" y="602" class="c9"/><use href="#g" x="1169" y="577" class="c0"/><rect x="1292" y="567" class="c0"/><use href="#g" x="971" y="663" class="c4"/><rect x="992" y="650" class="c5"/><use href="#g" x="1305" y="387" class="c0"/><rect x="1001" y="429" class="c0"/><use href="#g" x="1541" y="658" class="c4"/><use href="#g" x="1089" y="358" class="c0"/><use href="#g" x="1274" y="327" class="c0"/><rect x="1037" y="469" class="c1"/><use href="#g" x="1154" y="367" class="c0"/><rect x="1553" y="569" class="c0"/><rect x="1237" y="405" class="c1"/><rect x="1123" y="408" class="c0"/><rect x="1043" y="662" class="c0"/><rect x="862" y="582" class="c0"/><rect x="995" y="429" class="c0"/><use href="#g" x="1402" y="406" class="c0"/><rect x="1351" y="669" class="c5"/><rect x="1274" y="332" class="c0"/><use href="#g" x="1210" y="341" class="c0"/><rect x="979" y="652" class="c5"/><rect x="1336" y="376" class="c0"/><use href="#g" x="1130" y="499" class="c0"/><path d="M1144 549l5-10 5 10z" class="c0"/><rect x="1042" y="536" class="c0"/><use href="#g" x="1511" y="638" class="c0"/><rect x="1282" y="323" class="c4"/><path d="M1274 478l5-10 5 10z" class="c0"/><rect x="1481" y="562" class="c0"/><rect x="1432" y="563" class="c0"/><use href="#g" x="983" y="437" class="c0"/><use href="#g" x="993" y="434" class="c0"/><use href="#g" x="974" y="562" class="c0"/><rect x="1160" y="496" class="c4"/><rect x="1283" y="585" class="c4"/><rect x="1127" y="366" class="c0"/><rect x="1382" y="378" class="c5"/><use href="#g" x="954" y="484" class="c2"/><use href="#g" x="1370" y="337" class="c0"/><rect x="1136" y="428" class="c1"/><use href="#g" x="1252" y="472" class="c0"/><path d="M843 717l5-10 5 10z" class="c0"/><rect x="841" y="637" class="c4"/><rect x="1305" y="415" class="c0"/><use href="#g" x="908" y="628" class="c0"/><rect x="1087" y="403" class="c0"/><use href="#g" x="1342" y="365" class="c2"/><use href="#g" x="898" y="579" class="c0"/><path d="M1378 684l5-10 5 10z" class="c8"/><path d="M1471 525l5-10 5 10z" class="c3"/><rect x="1067" y="455" class="c5"/><use href="#g" x="1293" y="505" class="c1"/><rect x="1167" y="358" class="c3"/><rect x="1130" y="433" class="c0"/><rect x="1381" y="435" class="c0"/><rect x="1259" y="459" class="c0"/><rect x="1080" y="403" class="c0"/><rect x="1122" y="359" class="c5"/><rect x="1168" y="755" class="c0"/><rect x="1311" y="386" class="c7"/><path d="M1112 455l5-10 5 10z" class="c3"/><rect x="989" y="669" class="c9"/><use href="#g" x="1312" y="313" class="c0"/><rect x="1107" y="594" class="c0"/><use href="#g" x="1419" y="389" class="c0"/><rect x="1432" y="406" class="c0"/><rect x="1455" y="388" class="c0"/><use href="#g" x="1413" y="346" class="c1"/><use href="#g" x="897" y="557" class="c0"/><rect x="1274" y="432" class="c0"/><use href="#g" x="1357" y="378" class="c4"/><rect x="1111" y="365" class="c0"/><use href="#g" x="1142" y="399" class="c4"/><use href="#g" x="1313" y="345" class="c4"/><path d="M1207 444l5-10 5 10z" class="c0"/><path d="M1292 331l5-10 5 10z" class="c0"/><rect x="1261" y="378" class="c5"/><rect x="1075" y="409" class="c3"/><rect x="1260" y="492" class="c0"/><rect x="1214" y="379" class="c5"/><use href="#g" x="1312" y="449" class="c0"/><rect x="1304" y="499" class="c1"/><use href="#g" x="1476" y="511" class="c0"/><rect x="980" y="551" class="c7"/><rect x="1351" y="795" class="c4"/><use href="#g" x="1070" y="453" class="c1"/><rect x="990" y="530" class="c0"/><use href="#g" x="1316" y="432" class="c0"/><rect x="1299" y="342" class="c0"/><rect x="1009" y="425" class="c3"/><use href="#g" x="1156" y="392" class="c0"/><rect x="1269" y="461" class="c0"/><use href="#g" x="1333" y="467" class="c0"/><rect x="1282" y="593" class="c5"/><use href="#g" x="1282" y="297" class="c1"/><rect x="1028" y="721" class="c4"/><rect x="1357" y="342" class="c0"/><rect x="1065" y="517" class="c3"/><rect x="1192" y="457" class="c7"/><rect x="1200" y="561" class="c3"/><rect x="852" y="647" class="c7"/><use href="#g" x="1018" y="428" class="c0"/><rect x="1225" y="347" class="c5"/><use href="#g" x="1010" y="468" class="c0"/><rect x="1619" y="622" class="c0"/><use href="#g" x="1219" y="471" class="c0"/><rect x="1439" y="426" class="c0"/><rect x="1295" y="724" class="c0"/><path d="M1208 353l5-10 5 10z" class="c9"/><rect x="985" y="447" class="c0"/><use href="#g" x="1253" y="412" class="c0"/><use href="#g" x="1427" y="356" class="c5"/><use href="#g" x="1176" y="448" class="c1"/><rect x="1289" y="513" class="c0"/><rect x="1107" y="488" class="c0"/><use href="#g" x="1357" y="354" class="c4"/><rect x="1087" y="524" class="c2"/><use href="#g" x="1323" y="362" class="c0"/><rect x="1256" y="394" class="c0"/><rect x="1246" y="473" class="c0"/><rect x="967" y="506" class="c0"/><use href="#g" x="1424" y="397" class="c5"/><rect x="1018" y="505" class="c2"/><rect x="1214" y="648" class="c0"/><use href="#g" x="1111" y="473" class="c0"/><rect x="1100" y="480" class="c1"/><use href="#g" x="1012" y="644" class="c0"/><use href="#g" x="974" y="602" class="c0"/><rect x="1258" y="393" class="c7"/><path d="M1363 804l5-10 5 10z" class="c3"/><rect x="1128" y="354" class="c0"/><path d="M1139 450l5-10 5 10z" class="c0"/><path d="M1121 595l5-10 5 10z" class="c0"/><rect x="1243" y="400" class="c2"/><use href="#g" x="1230" y="453" class="c3"/><rect x="1262" y="506" class="c0"/><rect x="1179" y="575" class="c3"/><rect x="1008" y="452" class="c7"/><use href="#g" x="1177" y="392" class="c2"/><use href="#g" x="1364" y="341" class="c0"/><rect x="1331" y="397" class="c6"/><use href="#g" x="845" y="693" class="c2"/><rect x="1113" y="384" class="c7"/><path d="M1371 365l5-10 5 10z" class="c0"/><rect x="1308" y="374" class="c1"/><rect x="1502" y="526" class="c0"/><use href="#g" x="1229" y="393" class="c1"/><use href="#g" x="1014" y="534" class="c1"/><rect x="1111" y="403" class="c7"/><path d="M1131 474l5-10 5 10z" class="c0"/><rect x="1038" y="442" class="c3"/><use href="#g" x="1300" y="368" class="c3"/><rect x="1049" y="405" class="c3"/><rect x="1007" y="695" class="c0"/><use href="#g" x="1202" y="462" class="c4"/><rect x="1337" y="382" class="c0"/><rect x="1333" y="429" class="c0"/><rect x="1206" y="433" class="c0"/><rect x="1035" y="429" class="c4"/><rect x="1209" y="401" class="c0"/><use href="#g" x="1058" y="468" class="c2"/><rect x="988" y="698" class="c2"/><rect x="1185" y="460" class="c0"/><rect x="887" y="588" class="c0"/><rect x="1144" y="522" class="c0"/><rect x="1163" y="476" class="c0"/><rect x="1427" y="413" class="c9"/><rect x="1094" y="563" class="c1"/><use href="#g" x="1015" y="744" class="c2"/><use href="#g" x="1327" y="440" class="c0"/><use href="#g" x="1109" y="562" class="c3"/><use href="#g" x="1209" y="531" class="c0"/><path d="M1338 328l5-10 5 10z" class="c0"/><rect x="1168" y="445" class="c1"/><use href="#g" x="1012" y="567" class="c5"/><rect x="1560" y="585" class="c0"/><rect x="1028" y="458" class="c7"/><path d="M1361 766l5-10 5 10z" class="c4"/><rect x="1290" y="574" class="c0"/><rect x="1331" y="432" class="c0"/><rect x="852" y="629" class="c7"/><rect x="1004" y="497" class="c0"/><use href="#g" x="1018" y="492" class="c0"/><rect x="1261" y="329" class="c0"/><rect x="1253" y="416" class="c0"/><rect x="1032" y="413" class="c2"/><rect x="1128" y="495" class="c0"/><use href="#g" x="1237" y="355" class="c0"/><rect x="1290" y="349" class="c0"/><rect x="1062" y="439" class="c0"/><use href="#g" x="961" y="642" class="c0"/><use href="#g" x="893" y="634" class="c0"/><rect x="1260" y="365" class="c0"/><use href="#g" x="912" y="561" class="c2"/><rect x="1177" y="424" class="c0"/><rect x="927" y="565" class="c2"/><rect x="977" y="553" class="c0"/><rect x="1281" y="374" class="c0"/><rect x="962" y="665" class="c1"/><rect x="1181" y="498" class="c4"/><use href="#g" x="1087" y="423" class="c0"/><rect x="1356" y="749" class="c0"/><use href="#g" x="1297" y="332" class="c4"/><rect x="1536" y="571" class="c3"/><rect x="1149" y="560" class="c3"/><path d="M941 518l5-10 5 10z" class="c9"/><use href="#g" x="1075" y="454" class="c1"/><rect x="1067" y="421" class="c7"/><rect x="1177" y="476" class="c2"/><use href="#g" x="1069" y="471" class="c2"/><path d="M1125 524l5-10 5 10z" class="c2"/><use href="#g" x="1328" y="424" class="c2"/><rect x="1240" y="378" class="c0"/><rect x="986" y="503" class="c4"/><rect x="1128" y="573" class="c1"/><rect x="954" y="725" class="c4"/><use href="#g" x="1396" y="679" class="c1"/><rect x="961" y="472" class="c0"/><rect x="1087" y="504" class="c4"/><rect x="1087" y="410" class="c0"/><rect x="1299" y="358" class="c2"/><rect x="1055" y="422" class="c5"/><use href="#g" x="1448" y="409" class="c1"/><use href="#g" x="1342" y="367" class="c3"/><rect x="1112" y="626" class="c3"/><rect x="1078" y="423" class="c0"/><rect x="1064" y="730" class="c4"/><rect x="1357" y="439" class="c0"/><use href="#g" x="1294" y="301" class="c4"/><path d="M1370 411l5-10 5 10z" class="c3"/><path d="M1008 554l5-10 5 10z" class="c0"/><rect x="1058" y="611" class="c2"/><rect x="851" y="692" class="c2"/><path d="M1313 750l5-10 5 10z" class="c3"/><rect x="1203" y="352" class="c0"/><use href="#g" x="1122" y="489" class="c1"/><rect x="1329" y="335" class="c4"/><rect x="1162" y="446" class="c2"/><use href="#g" x="1097" y="600" class="c7"/><rect x="1249" y="474" class="c1"/><path d="M1261 568l5-10 5 10z" class="c7"/><rect x="1322" y="731" class="c1"/><rect x="1300" y="634" class="c1"/><rect x="1072" y="487" class="c0"/><rect x="1087" y="368" class="c8"/><use href="#g" x="1318" y="338" class="c7"/><use href="#g" x="1261" y="476" class="c6"/><rect x="1348" y="470" class="c0"/><rect x="1321" y="393" class="c7"/><rect x="1183" y="447" class="c0"/><use href="#g" x="1180" y="418" class="c0"/><path d="M1314 545l5-10 5 10z" class="c0"/><rect x="1122" y="437" class="c0"/><use href="#g" x="1268" y="356" class="c5"/><rect x="1456" y="570" class="c0"/><rect x="1321" y="424" class="c0"/><rect x="1505" y="559" class="c0"/><rect x="1158" y="361" class="c0"/><rect x="1007" y="515" class="c0"/><path d="M1308 509l5-10 5 10z" class="c0"/><rect x="1039" y="487" class="c1"/><rect x="1097" y="435" class="c0"/><use href="#g" x="943" y="619" class="c0"/><rect x="1012" y="539" class="c1"/><rect x="1299" y="428" class="c1"/><rect x="1408" y="413" class="c0"/><rect x="918" y="629" class="c7"/><rect x="1345" y="497" class="c0"/><rect x="1015" y="448" class="c1"/><path d="M1439 397l5-10 5 10z" class="c7"/><rect x="903" y="592" class="c3"/><rect x="1289" y="574" class="c0"/><rect x="1215" y="436" class="c5"/><rect x="1420" y="398" class="c0"/><rect x="1348" y="807" class="c0"/><rect x="1191" y="528" class="c0"/><rect x="1127" y="380" class="c0"/><rect x="1331" y="407" class="c0"/><rect x="1297" y="350" class="c0"/><use href="#g" x="1177" y="434" class="c0"/><path d="M1341 388l5-10 5 10z" class="c0"/><rect x="1248" y="439" class="c5"/><rect x="968" y="700" class="c2"/><rect x="1521" y="639" class="c10"/><use href="#g" x="1438" y="407" class="c7"/><use href="#g" x="1358" y="362" class="c2"/><path d="M1507 580l5-10 5 10z" class="c0"/><use href="#g" x="1301" y="343" class="c0"/><rect x="1120" y="369" class="c0"/><use href="#g" x="1135" y="416" class="c1"/><rect x="1437" y="402" class="c2"/><rect x="1438" y="367" class="c2"/><path d="M1288 527l5-10 5 10z" class="c3"/><use href="#g" x="1243" y="373" class="c0"/><use href="#g" x="1111" y="534" class="c0"/><rect x="1038" y="436" class="c7"/><use href="#g" x="919" y="581" class="c0"/><use href="#g" x="1197" y="545" class="c5"/><rect x="1067" y="458" class="c7"/><rect x="1326" y="422" class="c3"/><rect x="1223" y="642" class="c1"/><rect x="964" y="710" class="c0"/><rect x="1174" y="407" class="c0"/><use href="#g" x="1008" y="734" class="c1"/><use href="#g" x="1406" y="345" class="c0"/><rect x="1202" y="509" class="c1"/><rect x="1459" y="514" class="c0"/><rect x="1172" y="358" class="c2"/><use href="#g" x="1010" y="459" class="c0"/><path d="M1434 502l5-10 5 10z" class="c4"/><rect x="1419" y="561" class="c0"/><rect x="1183" y="372" class="c0"/><rect x="1322" y="464" class="c0"/><use href="#g" x="1033" y="519" class="c1"/><rect x="978" y="642" class="c0"/><rect x="1274" y="686" class="c0"/><rect x="1126" y="458" class="c1"/><rect x="1277" y="312" class="c3"/><rect x="1233" y="378" class="c0"/><rect x="1431" y="412" class="c8"/><use href="#g" x="1175" y="365" class="c0"/><rect x="1112" y="382" class="c10"/><use href="#g" x="1107" y="632" class="c1"/><rect x="1387" y="342" class="c7"/><rect x="1449" y="502" class="c0"/><rect x="1178" y="453" class="c0"/><path d="M1496 674l5-10 5 10z" class="c0"/><use href="#g" x="1119" y="437" class="c3"/><path d="M1331 396l5-10 5 10z" class="c0"/><rect x="1297" y="355" class="c5"/><rect x="1003" y="498" class="c0"/><rect x="1554" y="570" class="c0"/><use href="#g" x="1430" y="383" class="c3"/><rect x="1368" y="332" class="c9"/><rect x="1442" y="502" class="c0"/><rect x="1166" y="416" class="c0"/><rect x="1099" y="514" class="c0"/><rect x="1088" y="441" class="c4"/><path d="M835 697l5-10 5 10z" class="c0"/><use href="#g" x="1253" y="511" class="c7"/><use href="#g" x="1062" y="460" class="c5"/><use href="#g" x="1111" y="462" class="c0"/><use href="#g" x="1120" y="685" class="c1"/><rect x="1413" y="356" class="c0"/><use href="#g" x="1185" y="439" class="c4"/><use href="#g" x="986" y="649" class="c0"/><rect x="1184" y="516" class="c2"/><rect x="1313" y="348" class="c0"/><path d="M1004 655l5-10 5 10z" class="c7"/><use href="#g" x="1369" y="392" class="c2"/><path d="M1215 657l5-10 5 10z" class="c0"/><use href="#g" x="1093" y="468" class="c0"/><rect x="1119" y="513" class="c5"/><rect x="1103" y="473" class="c0"/><path d="M1202 647l5-10 5 10z" class="c11"/><path d="M1088 410l5-10 5 10z" class="c2"/><rect x="1326" y="416" class="c7"/><rect x="947" y="647" class="c2"/><rect x="1223" y="418" class="c4"/><use href="#g" x="1092" y="504" class="c5"/><rect x="1293" y="556" class="c0"/><rect x="1163" y="421" class="c2"/><path d="M1141 394l5-10 5 10z" class="c0"/><use href="#g" x="1272" y="406" class="c3"/><use href="#g" x="832" y="717" class="c0"/><rect x="1099" y="718" class="c5"/><rect x="1302" y="383" class="c5"/><use href="#g" x="819" y="727" class="c0"/><rect x="1354" y="779" class="c0"/><use href="#g" x="1024" y="456" class="c0"/><rect x="842" y="710" class="c0"/><use href="#g" x="1257" y="428" class="c0"/><use href="#g" x="1282" y="329" class="c1"/><use href="#g" x="1053" y="456" class="c8"/><rect x="816" y="722" class="c0"/><use href="#g" x="1185" y="474" class="c1"/><use href="#g" x="1293" y="513" class="c8"/><use href="#g" x="1028" y="447" class="c1"/><path d="M1619 548l5-10 5 10z" class="c1"/><rect x="1033" y="539" class="c0"/><rect x="919" y="577" class="c1"/><rect x="1033" y="519" class="c0"/><rect x="1133" y="490" class="c0"/><rect x="1046" y="526" class="c3"/><rect x="962" y="596" class="c1"/><rect x="1460" y="394" class="c0"/><rect x="1144" y="459" class="c3"/><rect x="1450" y="463" class="c0"/><rect x="924" y="625" class="c1"/><rect x="1052" y="413" class="c0"/><use href="#g" x="848" y="664" class="c2"/><rect x="1303" y="369" class="c3"/><path d="M1116 614l5-10 5 10z" class="c0"/><use href="#g" x="997" y="403" class="c0"/><path d="M1486 562l5-10 5 10z" class="c3"/><rect x="1127" y="359" class="c4"/><rect x="1048" y="526" class="c3"/><rect x="1249" y="373" class="c2"/><rect x="1310" y="593" class="c0"/><rect x="1068" y="408" class="c2"/><rect x="972" y="667" class="c0"/><rect x="1406" y="401" class="c0"/><use href="#g" x="1197" y="356" class="c0"/><rect x="1084" y="648" class="c0"/><use href="#g" x="1115" y="363" class="c1"/><rect x="896" y="577" class="c2"/><rect x="1317" y="405" class="c0"/><path d="M1142 414l5-10 5 10z" class="c0"/><use href="#g" x="1144" y="450" class="c0"/><path d="M1334 672l5-10 5 10z" class="c3"/><use href="#g" x="1324" y="336" class="c0"/><rect x="1179" y="454" class="c4"/><rect x="1341" y="392" class="c0"/><rect x="1355" y="375" class="c0"/><use href="#g" x="1226" y="438" class="c0"/><rect x="1136" y="522" class="c0"/><use href="#g" x="1313" y="470" class="c0"/><rect x="1289" y="415" class="c3"/><use href="#g" x="934" y="559" class="c0"/><rect x="1428" y="431" class="c0"/><use href="#g" x="1217" y="418" class="c4"/><use href="#g" x="1131" y="392" class="c0"/><rect x="1400" y="368" class="c4"/><use href="#g" x="1271" y="427" class="c0"/><rect x="1133" y="447" class="c3"/><use href="#g" x="1225" y="411" class="c4"/><use href="#g" x="1237" y="449" class="c2"/><path d="M1297 575l5-10 5 10z" class="c9"/><path d="M1089 377l5-10 5 10z" class="c2"/><rect x="900" y="565" class="c0"/><rect x="1303" y="516" class="c4"/><rect x="1149" y="463" class="c8"/><rect x="1367" y="504" class="c0"/><rect x="904" y="639" class="c0"/><rect x="846" y="706" class="c0"/><rect x="1303" y="340" class="c0"/><use href="#g" x="1163" y="376" class="c7"/><use href="#g" x="1062" y="469" class="c7"/><rect x="1198" y="524" class="c5"/><rect x="1449" y="499" class="c0"/><rect x="1470" y="371" class="c1"/><use href="#g" x="1269" y="473" class="c0"/><rect x="876" y="604" class="c0"/><rect x="928" y="596" class="c0"/><rect x="852" y="679" class="c0"/><rect x="1516" y="561" class="c6"/><use href="#g" x="1235" y="492" class="c0"/><use href="#g" x="1261" y="426" class="c5"/><use href="#g" x="1020" y="550" class="c1"/><use href="#g" x="967" y="654" class="c0"/><use href="#g" x="1294" y="537" class="c6"/><rect x="1418" y="547" class="c0"/><use href="#g" x="1021" y="452" class="c1"/><rect x="873" y="585" class="c2"/><use href="#g" x="1257" y="611" class="c4"/><rect x="1164" y="478" class="c5"/><rect x="1170" y="378" class="c0"/><rect x="1338" y="630" class="c0"/><rect x="1162" y="353" class="c0"/><use href="#g" x="1101" y="413" class="c0"/><rect x="1458" y="394" class="c0"/><rect x="1137" y="526" class="c0"/><rect x="931" y="601" class="c0"/><rect x="1335" y="723" class="c0"/><rect x="1375" y="562" class="c0"/><rect x="1215" y="403" class="c0"/><rect x="1271" y="298" class="c1"/><rect x="1204" y="367" class="c7"/><rect x="1161" y="603" class="c0"/><rect x="1115" y="341" class="c0"/><use href="#g" x="1283" y="403" class="c0"/><use href="#g" x="823" y="716" class="c0"/><rect x="1471" y="404" class="c0"/><rect x="855" y="590" class="c1"/><use href="#g" x="1273" y="392" class="c7"/><rect x="1325" y="341" class="c0"/><rect x="1426" y="487" class="c9"/><rect x="816" y="725" class="c8"/><rect x="824" y="709" class="c4"/><path d="M1167 421l5-10 5 10z" class="c2"/><rect x="1299" y="629" class="c4"/><rect x="821" y="730" class="c3"/><rect x="1307" y="353" class="c0"/><use href="#g" x="1157" y="418" class="c0"/><use href="#g" x="992" y="575" class="c0"/><rect x="1406" y="478" class="c5"/><use href="#g" x="1107" y="397" class="c4"/><rect x="1624" y="519" class="c0"/><rect x="1059" y="502" class="c2"/><rect x="1247" y="431" class="c6"/><use href="#g" x="1060" y="514" class="c0"/><use href="#g" x="1180" y="367" class="c0"/><use href="#g" x="1343" y="354" class="c1"/><use href="#g" x="1131" y="400" class="c0"/><use href="#g" x="1032" y="534" class="c0"/><rect x="1121" y="391" class="c0"/><use href="#g" x="971" y="650" class="c1"/><use href="#g" x="1268" y="388" class="c0"/><rect x="1161" y="685" class="c0"/><rect x="1519" y="614" class="c0"/><use href="#g" x="1289" y="336" class="c0"/><rect x="849" y="627" class="c4"/><rect x="1308" y="537" class="c0"/><rect x="953" y="495" class="c3"/><use href="#g" x="1261" y="373" class="c0"/><use href="#g" x="1089" y="514" class="c3"/><rect x="831" y="693" class="c5"/><rect x="1178" y="411" class="c0"/><use href="#g" x="948" y="639" class="c0"/><use href="#g" x="1362" y="806" class="c0"/><rect x="1001" y="712" class="c0"/><use href="#g" x="930" y="625" class="c0"/><rect x="1174" y="441" class="c8"/><use href="#g" x="1327" y="329" class="c0"/><use href="#g" x="1396" y="570" class="c0"/><rect x="872" y="603" class="c3"/><rect x="1348" y="376" class="c0"/><path d="M1335 673l5-10 5 10z" class="c3"/><rect x="1146" y="467" class="c0"/><rect x="1378" y="394" class="c0"/><rect x="1276" y="453" class="c0"/><rect x="911" y="574" class="c0"/><rect x="1242" y="362" class="c0"/><use href="#g" x="1305" y="359" class="c3"/><rect x="833" y="722" class="c0"/><use href="#g" x="1102" y="379" class="c5"/><rect x="1188" y="494" class="c0"/><use href="#g" x="1107" y="522" class="c0"/><rect x="882" y="627" class="c0"/><use href="#g" x="1165" y="563" class="c3"/><rect x="1105" y="572" class="c4"/><use href="#g" x="1007" y="426" class="c0"/><use href="#g" x="1143" y="398" class="c0"/><rect x="1246" y="465" class="c0"/><use href="#g" x="1164" y="352" class="c2"/><rect x="962" y="521" class="c0"/><rect x="1082" y="361" class="c7"/><rect x="1265" y="453" class="c7"/><rect x="1359" y="718" class="c0"/><path d="M1231 365l5-10 5 10z" class="c1"/><rect x="1298" y="461" class="c5"/><rect x="1014" y="445" class="c0"/><use href="#g" x="1187" y="508" class="c4"/><rect x="1324" y="448" class="c0"/><rect x="1127" y="445" class="c1"/><use href="#g" x="1328" y="404" class="c5"/><path d="M1427 408l5-10 5 10z" class="c0"/><use href="#g" x="1210" y="504" class="c4"/><rect x="1107" y="427" class="c3"/><use href="#g" x="1183" y="523" class="c7"/><use href="#g" x="1134" y="488" class="c0"/><rect x="1595" y="556" class="c3"/><use href="#g" x="1396" y="385" class="c4"/><use href="#g" x="1308" y="468" class="c0"/><use href="#g" x="1177" y="503" class="c0"/><rect x="1453" y="404" class="c3"/><rect x="1093" y="351" class="c8"/><use href="#g" x="1211" y="539" class="c0"/><use href="#g" x="1232" y="360" class="c0"/><rect x="849" y="683" class="c1"/><rect x="1303" y="632" class="c0"/><rect x="1295" y="629" class="c0"/><rect x="1158" y="446" class="c0"/><use href="#g" x="965" y="464" class="c0"/><rect x="1135" y="523" class="c6"/><rect x="1297" y="397" class="c0"/><rect x="1093" y="562" class="c4"/><rect x="1333" y="428" class="c0"/><rect x="1236" y="512" class="c2"/><use href="#g" x="1191" y="375" class="c0"/><rect x="1117" y="550" class="c8"/><rect x="900" y="571" class="c0"/><rect x="1022" y="421" class="c0"/><rect x="1256" y="507" class="c0"/><rect x="969" y="681" class="c0"/><rect x="1428" y="392" class="c0"/><rect x="952" y="474" class="c7"/><rect x="1177" y="474" class="c3"/><use href="#g" x="1305" y="350" class="c2"/><rect x="887" y="623" class="c7"/><rect x="1360" y="702" class="c0"/><use href="#g" x="1266" y="418" class="c0"/><use href="#g" x="1363" y="363" class="c3"/><rect x="1127" y="508" class="c4"/><rect x="1466" y="400" class="c0"/><path d="M1426 374l5-10 5 10z" class="c7"/><rect x="1334" y="539" class="c5"/><path d="M1294 662l5-10 5 10z" class="c3"/><rect x="998" y="624" class="c0"/><rect x="854" y="703" class="c0"/><rect x="1078" y="378" class="c5"/><rect x="937" y="552" class="c0"/><path d="M1009 650l5-10 5 10z" class="c3"/><rect x="1187" y="351" class="c4"/><rect x="1258" y="557" class="c0"/><use href="#g" x="1120" y="425" class="c0"/><rect x="1268" y="309" class="c0"/><rect x="1327" y="472" class="c4"/><rect x="1574" y="562" class="c0"/><rect x="1088" y="447" class="c0"/><rect x="985" y="643" class="c0"/><use href="#g" x="975" y="492" class="c0"/><rect x="964" y="487" class="c0"/><rect x="1186" y="718" class="c0"/><use href="#g" x="987" y="654" class="c4"/><rect x="1250" y="432" class="c5"/><use href="#g" x="1105" y="533" class="c0"/><rect x="1403" y="375" class="c5"/><rect x="1102" y="435" class="c0"/><use href="#g" x="1124" y="400" class="c0"/><rect x="1414" y="381" class="c5"/><use href="#g" x="959" y="613" class="c0"/><rect x="1194" y="413" class="c9"/><use href="#g" x="1022" y="454" class="c2"/><rect x="946" y="582" class="c0"/><use href="#g" x="1010" y="530" class="c1"/><rect x="1153" y="399" class="c0"/><rect x="1107" y="346" class="c7"/><rect x="1218" y="649" class="c0"/><rect x="1239" y="356" class="c3"/><rect x="1071" y="611" class="c2"/><use href="#g" x="1174" y="449" class="c0"/><rect x="1164" y="426" class="c1"/><use href="#g" x="1110" y="360" class="c7"/><rect x="1197" y="384" class="c0"/><rect x="1052" y="448" class="c0"/><use href="#g" x="1262" y="322" class="c9"/><use href="#g" x="1418" y="363" class="c0"/><use href="#g" x="1060" y="436" class="c3"/><use href="#g" x="1264" y="461" class="c0"/><rect x="1101" y="357" class="c0"/><use href="#g" x="1302" y="597" class="c3"/><use href="#g" x="1028" y="754" class="c0"/><rect x="1223" y="577" class="c0"/><use href="#g" x="909" y="518" class="c1"/><path d="M1254 331l5-10 5 10z" class="c0"/><use href="#g" x="920" y="562" class="c3"/><rect x="1222" y="391" class="c7"/><rect x="1160" y="350" class="c2"/><rect x="1377" y="350" class="c5"/><rect x="1015" y="507" class="c4"/><use href="#g" x="1268" y="363" class="c1"/><rect x="1209" y="354" class="c4"/><rect x="1077" y="372" class="c0"/><rect x="1142" y="371" class="c0"/><rect x="942" y="512" class="c0"/><rect x="1006" y="516" class="c7"/><rect x="1084" y="503" class="c0"/><use href="#g" x="1213" y="439" class="c0"/><rect x="946" y="645" class="c0"/><rect x="1043" y="554" class="c2"/><rect x="958" y="477" class="c0"/><use href="#g" x="1081" y="487" class="c0"/><rect x="1405" y="352" class="c1"/><rect x="1359" y="330" class="c5"/><use href="#g" x="1226" y="478" class="c0"/><rect x="1322" y="432" class="c4"/><rect x="1243" y="485" class="c2"/><rect x="1321" y="350" class="c6"/><rect x="1237" y="345" class="c0"/><rect x="1005" y="511" class="c5"/><rect x="1030" y="566" class="c3"/><rect x="1182" y="404" class="c0"/><path d="M1553 581l5-10 5 10z" class="c7"/><path d="M1069 404l5-10 5 10z" class="c5"/><rect x="1054" y="423" class="c0"/><use href="#g" x="1012" y="518" class="c2"/><rect x="1350" y="455" class="c2"/><rect x="1123" y="420" class="c4"/><rect x="1022" y="575" class="c0"/><rect x="1143" y="451" class="c0"/><rect x="1240" y="367" class="c2"/><use href="#g" x="1314" y="358" class="c0"/><use href="#g" x="1320" y="392" class="c10"/><rect x="1371" y="346" class="c5"/><rect x="1133" y="363" class="c0"/><rect x="1273" y="307" class="c0"/><rect x="1209" y="466" class="c2"/><path d="M1382 452l5-10 5 10z" class="c0"/><rect x="1078" y="372" class="c0"/><rect x="1215" y="409" class="c0"/><rect x="1074" y="576" class="c2"/><path d="M1369 732l5-10 5 10z" class="c3"/><rect x="1279" y="497" class="c0"/><rect x="1038" y="502" class="c4"/><use href="#g" x="1104" y="470" class="c0"/><rect x="998" y="449" class="c0"/><rect x="1150" y="445" class="c2"/><rect x="974" y="577" class="c0"/><rect x="1456" y="372" class="c8"/><rect x="1268" y="521" class="c0"/><rect x="892" y="632" class="c5"/><use href="#g" x="1141" y="461" class="c0"/><rect x="1243" y="356" class="c1"/><use href="#g" x="1174" y="429" class="c1"/><rect x="1285" y="376" class="c0"/><rect x="1097" y="540" class="c0"/><rect x="1195" y="423" class="c0"/><rect x="1315" y="491" class="c2"/><rect x="846" y="637" class="c0"/><rect x="1334" y="340" class="c5"/><rect x="949" y="470" class="c2"/><rect x="1288" y="690" class="c5"/><rect x="1340" y="346" class="c7"/><rect x="1219" y="364" class="c3"/><rect x="1267" y="403" class="c0"/><use href="#g" x="1057" y="412" class="c0"/><rect x="1059" y="405" class="c7"/><use href="#g" x="912" y="529" class="c3"/><rect x="1077" y="363" class="c0"/><use href="#g" x="1199" y="484" class="c0"/><use href="#g" x="1261" y="518" class="c0"/><rect x="1340" y="458" class="c0"/><use href="#g" x="853" y="626" class="c5"/><use href="#g" x="1046" y="492" class="c5"/><rect x="838" y="633" class="c0"/><rect x="1156" y="437" class="c3"/><rect x="1247" y="553" class="c6"/><rect x="1110" y="344" class="c7"/><rect x="1163" y="357" class="c4"/><use href="#g" x="1152" y="417" class="c7"/><rect x="964" y="512" class="c0"/><use href="#g" x="1322" y="445" class="c0"/><rect x="1325" y="440" class="c1"/><use href="#g" x="1019" y="517" class="c0"/><use href="#g" x="1432" y="557" class="c0"/><path d="M1297 512l5-10 5 10z" class="c2"/><path d="M1130 460l5-10 5 10z" class="c4"/><use href="#g" x="1340" y="374" class="c2"/><rect x="1434" y="403" class="c0"/><rect x="827" y="713" class="c7"/><rect x="1044" y="476" class="c0"/><path d="M1434 501l5-10 5 10z" class="c5"/><rect x="1150" y="357" class="c4"/><rect x="1182" y="468" class="c6"/><rect x="1304" y="352" class="c0"/><rect x="1264" y="463" class="c0"/><rect x="1100" y="548" class="c4"/><rect x="1092" y="436" class="c3"/><rect x="1144" y="367" class="c0"/><use href="#g" x="1020" y="510" class="c6"/><use href="#g" x="1338" y="784" class="c4"/><use href="#g" x="1129" y="478" class="c4"/><use href="#g" x="1225" y="535" class="c2"/><rect x="1262" y="311" class="c3"/><rect x="1359" y="522" class="c0"/><rect x="849" y="660" class="c7"/><rect x="831" y="708" class="c5"/><path d="M1600 612l5-10 5 10z" class="c2"/><path d="M1116 497l5-10 5 10z" class="c0"/><rect x="903" y="601" class="c0"/><path d="M1262 526l5-10 5 10z" class="c2"/><use href="#g" x="963" y="495" class="c0"/><rect x="970" y="473" class="c5"/><rect x="1040" y="428" class="c0"/><use href="#g" x="1223" y="423" class="c0"/><use href="#g" x="1218" y="348" class="c5"/><use href="#g" x="1458" y="392" class="c0"/><rect x="1403" y="369" class="c1"/><rect x="1312" y="340" class="c0"/><use href="#g" x="1394" y="397" class="c0"/><path d="M1544 604l5-10 5 10z" class="c5"/><rect x="1118" y="615" class="c0"/><use href="#g" x="1352" y="341" class="c0"/><rect x="977" y="561" class="c0"/><rect x="1264" y="503" class="c0"/><rect x="944" y="610" class="c0"/><rect x="1254" y="328" class="c4"/><rect x="1451" y="566" class="c0"/><path d="M1241 639l5-10 5 10z" class="c0"/><rect x="1362" y="376" class="c0"/><use href="#g" x="1314" y="380" class="c7"/><rect x="1192" y="433" class="c8"/><rect x="1087" y="398" class="c5"/><rect x="1449" y="460" class="c0"/><use href="#g" x="959" y="619" class="c0"/><rect x="1332" y="768" class="c0"/><rect x="1313" y="401" class="c2"/><rect x="1319" y="432" class="c2"/><use href="#g" x="1250" y="425" class="c0"/><rect x="1279" y="536" class="c0"/><rect x="1292" y="362" class="c0"/><rect x="1245" y="418" class="c0"/><rect x="937" y="575" class="c1"/><rect x="1133" y="494" class="c0"/><rect x="1317" y="348" class="c0"/><use href="#g" x="1372" y="408" class="c1"/><rect x="1156" y="718" class="c0"/><use href="#g" x="1152" y="368" class="c0"/><use href="#g" x="1276" y="318" class="c3"/><rect x="1118" y="442" class="c2"/><rect x="1237" y="553" class="c7"/><rect x="1200" y="394" class="c8"/><rect x="942" y="637" class="c9"/><rect x="897" y="628" class="c0"/><rect x="1054" y="434" class="c3"/><rect x="1053" y="426" class="c0"/><rect x="1108" y="361" class="c0"/><rect x="1075" y="693" class="c0"/><use href="#g" x="1408" y="376" class="c1"/><rect x="817" y="719" class="c0"/><rect x="1049" y="473" class="c10"/><rect x="1297" y="366" class="c4"/><rect x="1119" y="407" class="c3"/><use href="#g" x="1380" y="370" class="c2"/><rect x="1067" y="427" class="c0"/><use href="#g" x="868" y="631" class="c2"/><rect x="857" y="648" class="c0"/><rect x="1056" y="489" class="c0"/><rect x="1257" y="397" class="c3"/><rect x="1268" y="472" class="c0"/><rect x="1035" y="401" class="c0"/><use href="#g" x="1464" y="388" class="c5"/><rect x="1440" y="381" class="c3"/><rect x="1201" y="343" class="c1"/><rect x="991" y="663" class="c0"/><use href="#g" x="1164" y="456" class="c0"/><rect x="1115" y="381" class="c0"/><rect x="988" y="542" class="c0"/><use href="#g" x="1408" y="372" class="c0"/><use href="#g" x="1321" y="323" class="c0"/><rect x="1224" y="467" class="c1"/><use href="#g" x="915" y="533" class="c7"/><use href="#g" x="1032" y="426" class="c1"/><rect x="1012" y="437" class="c5"/><rect x="859" y="602" class="c0"/><rect x="1410" y="471" class="c2"/><rect x="1257" y="373" class="c3"/><rect x="1317" y="413" class="c0"/><rect x="1097" y="427" class="c2"/><use href="#g" x="1342" y="458" class="c3"/><use href="#g" x="955" y="581" class="c7"/><rect x="1403" y="352" class="c0"/><rect x="1575" y="563" class="c0"/><rect x="1186" y="367" class="c5"/><rect x="1366" y="565" class="c3"/><rect x="1182" y="421" class="c0"/><rect x="1475" y="400" class="c8"/><rect x="1019" y="762" class="c2"/><use href="#g" x="1142" y="488" class="c1"/><use href="#g" x="1020" y="723" class="c4"/><rect x="1190" y="413" class="c7"/><rect x="1317" y="453" class="c3"/><use href="#g" x="1462" y="377" class="c0"/><use href="#g" x="975" y="544" class="c3"/><path d="M1113 631l5-10 5 10z" class="c5"/><rect x="1301" y="304" class="c0"/><rect x="995" y="528" class="c0"/><use href="#g" x="1278" y="483" class="c0"/><use href="#g" x="955" y="636" class="c0"/><rect x="983" y="504" class="c4"/><use href="#g" x="1215" y="472" class="c0"/><rect x="1378" y="392" class="c0"/><use href="#g" x="998" y="456" class="c0"/><rect x="849" y="694" class="c4"/><rect x="1097" y="373" class="c4"/><path d="M833 719l5-10 5 10z" class="c0"/><use href="#g" x="1438" y="398" class="c0"/><rect x="1118" y="430" class="c1"/><use href="#g" x="1088" y="501" class="c0"/><use href="#g" x="1014" y="568" class="c0"/><use href="#g" x="1251" y="456" class="c0"/><rect x="874" y="589" class="c0"/><rect x="840" y="713" class="c6"/><rect x="1178" y="681" class="c0"/><rect x="1409" y="408" class="c2"/><rect x="1298" y="326" class="c0"/><rect x="1057" y="547" class="c0"/><rect x="1146" y="507" class="c0"/><rect x="967" y="631" class="c0"/><use href="#g" x="936" y="524" class="c1"/><rect x="1028" y="540" class="c7"/><use href="#g" x="1069" y="489" class="c4"/><rect x="888" y="636" class="c3"/><rect x="1043" y="521" class="c5"/><use href="#g" x="1347" y="388" class="c10"/><use href="#g" x="1018" y="454" class="c4"/><rect x="1295" y="295" class="c1"/><rect x="1236" y="618" class="c5"/><use href="#g" x="1352" y="386" class="c0"/><rect x="1332" y="323" class="c0"/><rect x="966" y="470" class="c1"/><rect x="952" y="601" class="c0"/><rect x="1001" y="437" class="c0"/><use href="#g" x="1322" y="371" class="c0"/><rect x="1467" y="383" class="c0"/><rect x="1204" y="433" class="c0"/><rect x="1076" y="659" class="c4"/><use href="#g" x="1288" y="423" class="c2"/><rect x="1050" y="472" class="c0"/><rect x="1072" y="506" class="c3"/><rect x="1186" y="379" class="c6"/><rect x="1228" y="474" class="c0"/><rect x="1163" y="366" class="c0"/><use href="#g" x="925" y="610" class="c1"/><rect x="1376" y="330" class="c0"/><use href="#g" x="1391" y="333" class="c7"/><use href="#g" x="933" y="590" class="c4"/><path d="M1472 647l5-10 5 10z" class="c0"/><use href="#g" x="1279" y="403" class="c4"/><rect x="877" y="628" class="c0"/><rect x="946" y="562" class="c3"/><rect x="1102" y="350" class="c3"/><rect x="1029" y="774" class="c4"/><rect x="1264" y="557" class="c0"/><rect x="1335" y="357" class="c7"/><rect x="1068" y="438" class="c3"/><rect x="959" y="607" class="c2"/><rect x="1272" y="446" class="c0"/><rect x="1159" y="376" class="c0"/><use href="#g" x="984" y="501" class="c4"/><use href="#g" x="1078" y="525" class="c0"/><use href="#g" x="1316" y="432" class="c5"/><rect x="1053" y="496" class="c3"/><use href="#g" x="1331" y="450" class="c0"/><rect x="1095" y="363" class="c5"/><rect x="1185" y="361" class="c0"/><rect x="1263" y="346" class="c0"/><rect x="1090" y="604" class="c0"/><rect x="1142" y="434" class="c2"/><rect x="1165" y="367" class="c0"/><rect x="977" y="491" class="c3"/><use href="#g" x="1318" y="468" class="c7"/><rect x="822" y="707" class="c1"/><rect x="1147" y="554" class="c3"/><rect x="1429" y="488" class="c3"/><rect x="998" y="652" class="c0"/><rect x="843" y="677" class="c1"/><rect x="1367" y="330" class="c1"/><rect x="1325" y="592" class="c0"/><rect x="1231" y="402" class="c0"/><rect x="1329" y="343" class="c0"/><rect x="900" y="615" class="c5"/><use href="#g" x="895" y="568" class="c0"/><use href="#g" x="1348" y="433" class="c0"/><rect x="1481" y="507" class="c0"/><rect x="952" y="525" class="c1"/><use href="#g" x="1118" y="459" class="c0"/><path d="M1185 474l5-10 5 10z" class="c9"/><rect x="1127" y="485" class="c4"/><rect x="989" y="490" class="c2"/><rect x="1109" y="432" class="c0"/><rect x="1177" y="498" class="c0"/><rect x="902" y="621" class="c0"/><use href="#g" x="823" y="735" class="c0"/><rect x="1251" y="574" class="c4"/><rect x="1008" y="602" class="c2"/><rect x="1222" y="484" class="c1"/><use href="#g" x="1011" y="473" class="c3"/><use href="#g" x="1221" y="354" class="c0"/><rect x="1293" y="426" class="c0"/><use href="#g" x="1398" y="409" class="c8"/><use href="#g" x="1117" y="495" class="c0"/><rect x="1078" y="732" class="c1"/><rect x="848" y="675" class="c1"/><use href="#g" x="1317" y="443" class="c4"/><rect x="1022" y="465" class="c0"/><rect x="943" y="634" class="c0"/><rect x="1417" y="385" class="c7"/><rect x="953" y="620" class="c0"/><rect x="1333" y="338" class="c0"/><rect x="1116" y="588" class="c0"/><path d="M1074 617l5-10 5 10z" class="c0"/><use href="#g" x="1004" y="722" class="c7"/><path d="M1327 370l5-10 5 10z" class="c0"/><rect x="1145" y="367" class="c0"/><rect x="1258" y="325" class="c3"/><rect x="1307" y="594" class="c5"/><rect x="1058" y="466" class="c4"/><use href="#g" x="1227" y="374" class="c0"/><path d="M1283 595l5-10 5 10z" class="c0"/><rect x="1094" y="357" class="c1"/><use href="#g" x="1122" y="570" class="c0"/><rect x="1448" y="555" class="c4"/><rect x="1231" y="577" class="c0"/><rect x="1050" y="613" class="c0"/><use href="#g" x="1316" y="393" class="c0"/><rect x="1261" y="358" class="c0"/><rect x="1364" y="327" class="c0"/><use href="#g" x="1247" y="378" class="c0"/><use href="#g" x="1084" y="365" class="c7"/><rect x="1092" y="397" class="c0"/><rect x="828" y="714" class="c0"/><rect x="1161" y="424" class="c0"/><path d="M1045 491l5-10 5 10z" class="c7"/><rect x="1247" y="495" class="c1"/><rect x="1094" y="483" class="c8"/><rect x="1238" y="427" class="c6"/><use href="#g" x="1227" y="513" class="c2"/><rect x="1201" y="413" class="c0"/><rect x="1086" y="379" class="c7"/><use href="#g" x="1088" y="469" class="c7"/><rect x="1045" y="579" class="c1"/><use href="#g" x="1178" y="438" class="c4"/><rect x="1405" y="476" class="c3"/><rect x="824" y="646" class="c4"/><path d="M1392 415l5-10 5 10z" class="c0"/><rect x="1094" y="408" class="c1"/><rect x="1115" y="388" class="c3"/><rect x="1047" y="509" class="c0"/><rect x="1028" y="492" class="c0"/><rect x="1273" y="328" class="c0"/><rect x="1240" y="413" class="c7"/><use href="#g" x="1144" y="377" class="c5"/><path d="M1278 618l5-10 5 10z" class="c7"/><use href="#g" x="1342" y="785" class="c1"/><path d="M1305 428l5-10 5 10z" class="c0"/><rect x="957" y="650" class="c7"/><rect x="1497" y="651" class="c4"/><use href="#g" x="1360" y="739" class="c0"/><use href="#g" x="1466" y="502" class="c5"/><rect x="935" y="481" class="c1"/><rect x="1172" y="473" class="c0"/><rect x="1074" y="402" class="c0"/><rect x="1238" y="382" class="c4"/><rect x="998" y="660" class="c0"/><use href="#g" x="1089" y="387" class="c0"/><use href="#g" x="1306" y="375" class="c0"/><path d="M1013 750l5-10 5 10z" class="c0"/><rect x="1035" y="616" class="c0"/><use href="#g" x="1303" y="428" class="c7"/><rect x="1169" y="534" class="c1"/><use href="#g" x="1100" y="393" class="c8"/><use href="#g" x="814" y="716" class="c0"/><use href="#g" x="1254" y="484" class="c0"/><use href="#g" x="996" y="493" class="c0"/><rect x="1354" y="661" class="c0"/><rect x="996" y="388" class="c0"/><rect x="1114" y="353" class="c4"/><rect x="1116" y="472" class="c0"/><rect x="1216" y="368" class="c4"/><rect x="1153" y="532" class="c7"/><use href="#g" x="1271" y="294" class="c0"/><rect x="1328" y="418" class="c2"/><use href="#g" x="1019" y="767" class="c0"/><rect x="1333" y="474" class="c0"/><use href="#g" x="837" y="627" class="c1"/><path d="M1493 530l5-10 5 10z" class="c0"/><rect x="1073" y="550" class="c1"/><rect x="1033" y="490" class="c0"/><use href="#g" x="833" y="717" class="c0"/><path d="M1081 655l5-10 5 10z" class="c0"/><rect x="1421" y="364" class="c10"/><use href="#g" x="1166" y="574" class="c7"/><use href="#g" x="1089" y="387" class="c0"/><use href="#g" x="840" y="715" class="c7"/><path d="M1088 649l5-10 5 10z" class="c7"/><rect x="998" y="581" class="c0"/><rect x="1052" y="692" class="c5"/><use href="#g" x="911" y="551" class="c0"/><use href="#g" x="1359" y="388" class="c2"/><rect x="1298" y="601" class="c0"/><use href="#g" x="1193" y="497" class="c7"/><rect x="1277" y="605" class="c8"/><use href="#g" x="934" y="593" class="c0"/><path d="M1191 358l5-10 5 10z" class="c2"/><rect x="1311" y="325" class="c0"/><rect x="1153" y="477" class="c9"/><rect x="1152" y="470" class="c2"/><rect x="1413" y="364" class="c0"/><use href="#g" x="1117" y="383" class="c0"/><use href="#g" x="1239" y="438" class="c7"/><use href="#g" x="999" y="464" class="c0"/><path d="M845 721l5-10 5 10z" class="c0"/><use href="#g" x="1284" y="398" class="c10"/><rect x="912" y="571" class="c5"/><rect x="1054" y="658" class="c0"/><rect x="1295" y="559" class="c0"/><use href="#g" x="1333" y="369" class="c0"/><rect x="1284" y="303" class="c8"/><rect x="1203" y="398" class="c1"/><use href="#g" x="1439" y="396" class="c5"/><use href="#g" x="1283" y="417" class="c0"/><rect x="1053" y="463" class="c0"/><rect x="1028" y="401" class="c8"/><use href="#g" x="1385" y="328" class="c0"/><rect x="1359" y="746" class="c0"/><use href="#g" x="1026" y="651" class="c0"/><rect x="957" y="719" class="c2"/><rect x="1327" y="327" class="c0"/><rect x="1328" y="737" class="c3"/><path d="M1406 477l5-10 5 10z" class="c0"/><use href="#g" x="1182" y="491" class="c4"/><rect x="1286" y="388" class="c1"/><rect x="1213" y="481" class="c3"/><rect x="1205" y="546" class="c0"/><rect x="1205" y="489" class="c4"/><use href="#g" x="1093" y="406" class="c2"/><rect x="1298" y="434" class="c2"/><rect x="1106" y="439" class="c2"/><path d="M1354 698l5-10 5 10z" class="c1"/><rect x="862" y="706" class="c0"/><path d="M1173 402l5-10 5 10z" class="c0"/><rect x="1040" y="632" class="c0"/><rect x="1284" y="337" class="c0"/><rect x="900" y="561" class="c0"/><rect x="1221" y="494" class="c0"/><use href="#g" x="1172" y="443" class="c0"/><use href="#g" x="1003" y="468" class="c3"/><use href="#g" x="989" y="567" class="c0"/><use href="#g" x="1347" y="332" class="c0"/><rect x="972" y="460" class="c0"/><rect x="1509" y="529" class="c5"/><rect x="968" y="558" class="c0"/><rect x="1564" y="706" class="c0"/><rect x="1274" y="452" class="c0"/><rect x="908" y="547" class="c0"/><rect x="1378" y="404" class="c7"/><rect x="1081" y="505" class="c0"/><rect x="1079" y="517" class="c1"/><rect x="1054" y="506" class="c10"/><use href="#g" x="1096" y="414" class="c0"/><use href="#g" x="1181" y="417" class="c2"/><use href="#g" x="1143" y="532" class="c2"/><rect x="1032" y="440" class="c0"/><rect x="1228" y="383" class="c0"/><rect x="1229" y="443" class="c0"/><use href="#g" x="1039" y="468" class="c7"/><use href="#g" x="1093" y="391" class="c0"/><rect x="1015" y="466" class="c0"/><rect x="1223" y="453" class="c2"/><rect x="1481" y="561" class="c0"/><rect x="1305" y="396" class="c0"/><rect x="1377" y="339" class="c5"/><path d="M1326 591l5-10 5 10z" class="c3"/><use href="#g" x="1318" y="346" class="c0"/><use href="#g" x="890" y="570" class="c0"/><rect x="1360" y="812" class="c0"/><rect x="1219" y="403" class="c1"/><rect x="1096" y="376" class="c0"/><rect x="1321" y="538" class="c0"/><rect x="1272" y="412" class="c0"/><rect x="839" y="719" class="c0"/><rect x="1141" y="347" class="c0"/><rect x="1271" y="336" class="c3"/><rect x="1015" y="747" class="c0"/><path d="M1486 606l5-10 5 10z" class="c0"/><use href="#g" x="1102" y="492" class="c8"/><rect x="1210" y="407" class="c1"/><rect x="1298" y="432" class="c1"/><use href="#g" x="1285" y="364" class="c1"/><rect x="1253" y="574" class="c5"/><rect x="1407" y="347" class="c0"/><rect x="1435" y="611" class="c0"/><use href="#g" x="1228" y="357" class="c0"/><rect x="1227" y="488" class="c0"/><rect x="1237" y="534" class="c0"/><rect x="1271" y="489" class="c0"/><rect x="1069" y="459" class="c3"/><rect x="1106" y="414" class="c0"/><path d="M1285 723l5-10 5 10z" class="c0"/><rect x="1356" y="757" class="c0"/><rect x="1160" y="392" class="c0"/><use href="#g" x="1190" y="368" class="c1"/><use href="#g" x="1315" y="347" class="c0"/><use href="#g" x="1416" y="366" class="c0"/><path d="M1035 590l5-10 5 10z" class="c7"/><rect x="1094" y="685" class="c2"/><rect x="1210" y="361" class="c0"/><use href="#g" x="1030" y="476" class="c0"/><rect x="1236" y="508" class="c7"/><use href="#g" x="1175" y="418" class="c1"/><use href="#g" x="1099" y="564" class="c7"/><rect x="1344" y="477" class="c4"/><path d="M1208 562l5-10 5 10z" class="c0"/><use href="#g" x="999" y="701" class="c0"/><rect x="1110" y="372" class="c3"/><use href="#g" x="968" y="446" class="c1"/><rect x="1241" y="425" class="c0"/><use href="#g" x="1090" y="449" class="c2"/><use href="#g" x="1340" y="349" class="c0"/><use href="#g" x="1350" y="327" class="c0"/><rect x="1456" y="581" class="c8"/><rect x="1224" y="401" class="c5"/><rect x="866" y="654" class="c3"/><rect x="992" y="498" class="c2"/><rect x="1192" y="513" class="c1"/><rect x="1523" y="572" class="c0"/><use href="#g" x="1383" y="354" class="c2"/><rect x="1004" y="435" class="c1"/><rect x="1335" y="470" class="c0"/><rect x="1208" y="478" class="c0"/><rect x="1397" y="460" class="c0"/><rect x="922" y="623" class="c0"/><use href="#g" x="1023" y="536" class="c3"/><rect x="1403" y="624" class="c0"/><rect x="1094" y="345" class="c1"/><rect x="1386" y="471" class="c0"/><use href="#g" x="918" y="633" class="c0"/><rect x="958" y="588" class="c3"/><rect x="1347" y="349" class="c0"/><rect x="1032" y="505" class="c6"/><rect x="1287" y="368" class="c0"/><path d="M1470 600l5-10 5 10z" class="c0"/><rect x="1451" y="681" class="c10"/><rect x="1212" y="369" class="c2"/><rect x="1130" y="438" class="c7"/><rect x="1031" y="544" class="c0"/><rect x="1279" y="602" class="c0"/><rect x="1117" y="422" class="c0"/><use href="#g" x="1172" y="375" class="c0"/><rect x="1127" y="528" class="c5"/><rect x="1185" y="426" class="c0"/><rect x="1216" y="547" class="c0"/><use href="#g" x="1108" y="451" class="c4"/><rect x="1371" y="327" class="c0"/><rect x="998" y="653" class="c4"/><use href="#g" x="1231" y="492" class="c2"/><rect x="1333" y="347" class="c0"/><use href="#g" x="1214" y="382" class="c3"/><rect x="1036" y="528" class="c0"/><rect x="1093" y="601" class="c8"/><rect x="1424" y="422" class="c1"/><rect x="1003" y="518" class="c0"/><use href="#g" x="1088" y="532" class="c4"/><rect x="1232" y="522" class="c0"/><rect x="865" y="598" class="c0"/><path d="M1414 633l5-10 5 10z" class="c3"/><rect x="1105" y="398" class="c0"/><use href="#g" x="1013" y="553" class="c3"/><path d="M1135 696l5-10 5 10z" class="c0"/><path d="M1462 562l5-10 5 10z" class="c3"/><use href="#g" x="1106" y="405" class="c0"/><rect x="1183" y="517" class="c2"/><rect x="1078" y="438" class="c0"/><use href="#g" x="1059" y="550" class="c0"/><rect x="1189" y="483" class="c2"/><rect x="1097" y="506" class="c0"/><rect x="964" y="611" class="c0"/><rect x="1357" y="453" class="c1"/><use href="#g" x="1311" y="452" class="c1"/><rect x="1620" y="538" class="c0"/><rect x="1318" y="311" class="c7"/><rect x="1398" y="673" class="c0"/><rect x="1339" y="338" class="c0"/><path d="M1184 410l5-10 5 10z" class="c0"/><rect x="1281" y="512" class="c0"/><rect x="928" y="510" class="c0"/><rect x="1106" y="687" class="c4"/><use href="#g" x="1202" y="408" class="c0"/><rect x="1287" y="578" class="c3"/><rect x="1111" y="352" class="c2"/><rect x="1282" y="450" class="c0"/><use href="#g" x="906" y="595" class="c0"/><rect x="993" y="461" class="c3"/><rect x="1077" y="425" class="c0"/><use href="#g" x="1161" y="429" class="c0"/><rect x="1251" y="422" class="c6"/><path d="M1295 662l5-10 5 10z" class="c3"/><rect x="1035" y="437" class="c2"/><use href="#g" x="976" y="572" class="c0"/><rect x="850" y="638" class="c5"/><path d="M1265 397l5-10 5 10z" class="c1"/><rect x="1393" y="345" class="c2"/><use href="#g" x="1300" y="701" class="c0"/><rect x="1150" y="498" class="c0"/><use href="#g" x="1151" y="394" class="c0"/><path d="M1126 474l5-10 5 10z" class="c0"/><rect x="1153" y="544" class="c9"/><rect x="1290" y="562" class="c2"/><use href="#g" x="1215" y="543" class="c1"/><rect x="1018" y="505" class="c0"/><rect x="1004" y="493" class="c0"/><path d="M1306 492l5-10 5 10z" class="c0"/><rect x="1396" y="378" class="c0"/><rect x="1008" y="443" class="c5"/><rect x="1215" y="460" class="c0"/><rect x="1042" y="552" class="c7"/><rect x="1368" y="385" class="c3"/><rect x="919" y="598" class="c1"/><use href="#g" x="1160" y="377" class="c2"/><rect x="1128" y="390" class="c0"/><rect x="1115" y="415" class="c0"/><use href="#g" x="1355" y="327" class="c2"/><rect x="1295" y="369" class="c2"/><rect x="1231" y="422" class="c4"/><rect x="1300" y="512" class="c0"/><rect x="1368" y="335" class="c3"/><rect x="1180" y="448" class="c0"/><use href="#g" x="1252" y="332" class="c9"/><rect x="1319" y="675" class="c0"/><use href="#g" x="1289" y="337" class="c0"/><rect x="1234" y="548" class="c5"/><rect x="1343" y="733" class="c4"/><rect x="1203" y="518" class="c2"/><rect x="1321" y="477" class="c0"/><rect x="1073" y="512" class="c1"/><rect x="1395" y="561" class="c6"/><path d="M1430 611l5-10 5 10z" class="c3"/><rect x="1159" y="416" class="c0"/><rect x="1376" y="567" class="c4"/><rect x="1009" y="749" class="c0"/><rect x="850" y="698" class="c0"/><use href="#g" x="1013" y="501" class="c0"/><rect x="1228" y="495" class="c2"/><rect x="1045" y="681" class="c0"/><rect x="1237" y="505" class="c0"/><rect x="1153" y="359" class="c0"/><rect x="1224" y="495" class="c0"/><rect x="1063" y="529" class="c0"/><use href="#g" x="844" y="700" class="c0"/><rect x="1259" y="450" class="c5"/><path d="M1292 544l5-10 5 10z" class="c0"/><rect x="1380" y="352" class="c8"/><use href="#g" x="1114" y="539" class="c5"/><rect x="862" y="678" class="c3"/><rect x="1516" y="531" class="c0"/><use href="#g" x="982" y="432" class="c0"/><use href="#g" x="1484" y="399" class="c5"/><rect x="1278" y="516" class="c0"/><rect x="1089" y="523" class="c5"/><rect x="1291" y="547" class="c0"/><rect x="1288" y="429" class="c3"/><rect x="989" y="546" class="c1"/><rect x="1251" y="642" class="c0"/><use href="#g" x="1395" y="418" class="c0"/><rect x="1421" y="502" class="c0"/><rect x="997" y="742" class="c0"/><rect x="1237" y="365" class="c0"/><rect x="1360" y="333" class="c0"/><use href="#g" x="1285" y="504" class="c0"/><use href="#g" x="1187" y="407" class="c0"/><rect x="1089" y="646" class="c5"/><rect x="1313" y="377" class="c0"/><rect x="893" y="567" class="c0"/><use href="#g" x="1298" y="326" class="c0"/><use href="#g" x="1212" y="429" class="c5"/><use href="#g" x="1114" y="482" class="c4"/><use href="#g" x="932" y="593" class="c2"/><use href="#g" x="849" y="710" class="c6"/><rect x="1043" y="499" class="c2"/><use href="#g" x="1028" y="424" class="c0"/><rect x="1131" y="503" class="c2"/><use href="#g" x="1003" y="623" class="c4"/><use href="#g" x="941" y="542" class="c7"/><rect x="1455" y="386" class="c0"/><rect x="1430" y="429" class="c5"/><rect x="1162" y="410" class="c0"/><use href="#g" x="1001" y="743" class="c2"/><rect x="1192" y="342" class="c3"/><rect x="1242" y="372" class="c2"/><rect x="1322" y="353" class="c3"/><use href="#g" x="1094" y="515" class="c4"/><rect x="1143" y="402" class="c0"/><rect x="1209" y="577" class="c2"/><path d="M932 546l5-10 5 10z" class="c0"/><path d="M1203 369l5-10 5 10z" class="c1"/><rect x="959" y="465" class="c1"/><rect x="1339" y="736" class="c0"/><rect x="1433" y="360" class="c7"/><rect x="1196" y="371" class="c0"/><rect x="1219" y="522" class="c0"/><rect x="1317" y="307" class="c0"/><use href="#g" x="1385" y="373" class="c0"/><rect x="854" y="671" class="c0"/><rect x="1347" y="577" class="c0"/><rect x="1324" y="386" class="c0"/><rect x="828" y="692" class="c6"/><use href="#g" x="928" y="561" class="c7"/><rect x="938" y="548" class="c2"/><rect x="1262" y="339" class="c1"/><rect x="1193" y="408" class="c0"/><path d="M1268 412l5-10 5 10z" class="c7"/><rect x="1552" y="665" class="c0"/><rect x="1077" y="448" class="c0"/><use href="#g" x="1458" y="403" class="c3"/><rect x="1217" y="479" class="c2"/><rect x="1298" y="497" class="c0"/><path d="M1322 706l5-10 5 10z" class="c1"/><rect x="1253" y="301" class="c1"/><rect x="911" y="565" class="c7"/><rect x="1313" y="362" class="c0"/><rect x="1205" y="537" class="c2"/><use href="#g" x="1454" y="405" class="c0"/><use href="#g" x="1090" y="353" class="c0"/><path d="M1406 401l5-10 5 10z" class="c0"/><rect x="1535" y="567" class="c0"/><rect x="833" y="705" class="c2"/><rect x="1096" y="364" class="c5"/><use href="#g" x="1438" y="433" class="c0"/><use href="#g" x="1051" y="530" class="c0"/><rect x="1081" y="543" class="c0"/><rect x="1109" y="496" class="c3"/><use href="#g" x="1133" y="447" class="c0"/><use href="#g" x="1303" y="487" class="c0"/><rect x="1006" y="486" class="c0"/><rect x="1396" y="331" class="c0"/><path d="M1263 492l5-10 5 10z" class="c0"/><rect x="1067" y="608" class="c0"/><rect x="988" y="483" class="c2"/><rect x="1048" y="420" class="c3"/><use href="#g" x="1146" y="421" class="c0"/><use href="#g" x="1398" y="364" class="c0"/><rect x="1202" y="459" class="c0"/><path d="M977 578l5-10 5 10z" class="c4"/><rect x="1456" y="595" class="c0"/><use href="#g" x="1355" y="367" class="c2"/><use href="#g" x="1023" y="641" class="c0"/><use href="#g" x="1086" y="387" class="c0"/><rect x="1117" y="471" class="c0"/><use href="#g" x="957" y="491" class="c0"/><rect x="1187" y="674" class="c2"/><rect x="834" y="713" class="c5"/><rect x="1079" y="417" class="c3"/><rect x="1225" y="338" class="c1"/><use href="#g" x="1072" y="459" class="c0"/><use href="#g" x="998" y="616" class="c3"/><rect x="1325" y="362" class="c1"/><rect x="854" y="702" class="c1"/><rect x="1042" y="469" class="c0"/><use href="#g" x="1188" y="451" class="c0"/><path d="M1458 524l5-10 5 10z" class="c4"/><rect x="1144" y="408" class="c0"/><use href="#g" x="1261" y="418" class="c6"/><rect x="1227" y="443" class="c0"/><rect x="1295" y="308" class="c0"/><rect x="1241" y="532" class="c0"/><use href="#g" x="1257" y="514" class="c10"/><rect x="1201" y="340" class="c2"/><rect x="1187" y="427" class="c0"/><rect x="1328" y="309" class="c1"/><use href="#g" x="851" y="682" class="c0"/><path d="M1364 363l5-10 5 10z" class="c0"/><path d="M1488 667l5-10 5 10z" class="c1"/><rect x="994" y="595" class="c8"/><rect x="1094" y="543" class="c0"/><use href="#g" x="1347" y="458" class="c0"/><rect x="995" y="541" class="c7"/><use href="#g" x="1301" y="398" class="c4"/><rect x="973" y="558" class="c0"/><use href="#g" x="1034" y="484" class="c0"/><use href="#g" x="1169" y="606" class="c0"/><rect x="1240" y="516" class="c0"/><rect x="850" y="668" class="c1"/><use href="#g" x="1057" y="475" class="c0"/><rect x="1051" y="509" class="c0"/><rect x="1195" y="436" class="c2"/><rect x="827" y="722" class="c0"/><rect x="1014" y="743" class="c0"/><use href="#g" x="1395" y="340" class="c4"/><use href="#g" x="1201" y="473" class="c5"/><rect x="1038" y="478" class="c0"/><rect x="1418" y="357" class="c10"/><rect x="1343" y="770" class="c0"/><use href="#g" x="1234" y="377" class="c0"/><rect x="1314" y="317" class="c0"/><rect x="1379" y="328" class="c0"/><use href="#g" x="964" y="567" class="c1"/><path d="M1414 489l5-10 5 10z" class="c0"/><rect x="1443" y="583" class="c0"/><rect x="1049" y="460" class="c0"/><rect x="1167" y="468" class="c0"/><rect x="1272" y="419" class="c4"/><rect x="1220" y="433" class="c0"/><rect x="1383" y="354" class="c1"/><rect x="1175" y="685" class="c0"/><rect x="1123" y="475" class="c0"/><use href="#g" x="1248" y="387" class="c0"/><use href="#g" x="1268" y="339" class="c4"/><rect x="1293" y="320" class="c0"/><rect x="1143" y="364" class="c1"/><use href="#g" x="1042" y="575" class="c0"/><rect x="1088" y="562" class="c2"/><rect x="1094" y="490" class="c2"/><use href="#g" x="932" y="576" class="c3"/><rect x="1364" y="373" class="c1"/><rect x="1264" y="613" class="c0"/><rect x="930" y="514" class="c0"/><rect x="1349" y="464" class="c2"/><use href="#g" x="1337" y="453" class="c0"/><rect x="1151" y="424" class="c8"/><rect x="1099" y="366" class="c0"/><use href="#g" x="924" y="592" class="c3"/><use href="#g" x="969" y="510" class="c2"/><rect x="1322" y="613" class="c4"/><rect x="1023" y="480" class="c0"/><rect x="1060" y="652" class="c2"/><use href="#g" x="1272" y="493" class="c3"/><rect x="1065" y="510" class="c0"/><use href="#g" x="1378" y="332" class="c0"/><rect x="1207" y="496" class="c5"/><use href="#g" x="1192" y="435" class="c0"/><rect x="1315" y="423" class="c0"/><rect x="1215" y="488" class="c0"/><use href="#g" x="1193" y="483" class="c2"/><path d="M1322 705l5-10 5 10z" class="c1"/><rect x="1085" y="688" class="c5"/><use href="#g" x="1397" y="393" class="c0"/><rect x="993" y="446" class="c0"/><rect x="1295" y="551" class="c2"/><rect x="1389" y="411" class="c0"/><rect x="1188" y="408" class="c0"/><rect x="1404" y="337" class="c0"/><rect x="1356" y="378" class="c2"/><use href="#g" x="1237" y="534" class="c4"/><rect x="1333" y="366" class="c0"/><use href="#g" x="1367" y="345" class="c4"/><use href="#g" x="1468" y="380" class="c2"/><rect x="1027" y="408" class="c0"/><rect x="1021" y="642" class="c0"/><rect x="1113" y="428" class="c0"/><use href="#g" x="910" y="612" class="c1"/><use href="#g" x="1081" y="428" class="c7"/><rect x="1328" y="466" class="c5"/><rect x="840" y="647" class="c7"/><use href="#g" x="1438" y="427" class="c2"/><rect x="1392" y="363" class="c4"/><path d="M1566 572l5-10 5 10z" class="c0"/><rect x="1283" y="314" class="c5"/><rect x="1500" y="643" class="c0"/><rect x="1153" y="465" class="c3"/><rect x="980" y="588" class="c7"/><rect x="931" y="553" class="c1"/><rect x="963" y="648" class="c0"/><use href="#g" x="1148" y="410" class="c7"/><rect x="1017" y="574" class="c2"/><use href="#g" x="898" y="572" class="c0"/><path d="M1410 485l5-10 5 10z" class="c4"/><use href="#g" x="951" y="530" class="c0"/><path d="M1451 486l5-10 5 10z" class="c5"/><path d="M1119 725l5-10 5 10z" class="c0"/><rect x="1301" y="595" class="c0"/><path d="M984 431l5-10 5 10z" class="c9"/><rect x="1072" y="380" class="c0"/><rect x="1244" y="472" class="c2"/><rect x="836" y="694" class="c5"/><rect x="1136" y="458" class="c0"/><rect x="1133" y="661" class="c3"/><rect x="975" y="477" class="c2"/><use href="#g" x="1034" y="562" class="c0"/><use href="#g" x="1002" y="547" class="c3"/><rect x="1087" y="481" class="c0"/><rect x="1004" y="643" class="c0"/><rect x="1268" y="362" class="c0"/><rect x="1105" y="383" class="c0"/><rect x="988" y="645" class="c0"/><rect x="898" y="593" class="c0"/><use href="#g" x="1174" y="369" class="c3"/><rect x="1414" y="414" class="c0"/><rect x="1252" y="392" class="c2"/><rect x="1422" y="377" class="c0"/><use href="#g" x="1009" y="651" class="c5"/><rect x="927" y="629" class="c6"/><rect x="1135" y="383" class="c7"/><rect x="990" y="470" class="c4"/><rect x="1286" y="629" class="c0"/><use href="#g" x="1458" y="572" class="c0"/><rect x="1008" y="757" class="c8"/><rect x="975" y="582" class="c0"/><path d="M1431 378l5-10 5 10z" class="c6"/><use href="#g" x="903" y="552" class="c3"/><rect x="818" y="712" class="c0"/><rect x="1265" y="304" class="c0"/><rect x="1042" y="414" class="c1"/><rect x="1333" y="397" class="c4"/><rect x="1167" y="453" class="c1"/><rect x="1329" y="352" class="c6"/><rect x="1153" y="346" class="c0"/><path d="M830 713l5-10 5 10z" class="c0"/><rect x="1359" y="339" class="c7"/><rect x="923" y="566" class="c0"/><rect x="948" y="611" class="c0"/><rect x="1336" y="357" class="c0"/><rect x="1031" y="540" class="c6"/><use href="#g" x="1140" y="362" class="c0"/><use href="#g" x="1212" y="518" class="c2"/><use href="#g" x="1378" y="348" class="c2"/><rect x="948" y="626" class="c1"/><use href="#g" x="959" y="632" class="c2"/><use href="#g" x="1163" y="428" class="c0"/><rect x="1396" y="388" class="c0"/><use href="#g" x="1120" y="562" class="c0"/><use href="#g" x="1104" y="421" class="c0"/><use href="#g" x="1116" y="372" class="c3"/><rect x="1132" y="483" class="c0"/><use href="#g" x="982" y="453" class="c1"/><use href="#g" x="1247" y="406" class="c3"/><use href="#g" x="1022" y="546" class="c2"/><use href="#g" x="1246" y="505" class="c0"/><rect x="1013" y="522" class="c0"/><rect x="1280" y="382" class="c2"/><rect x="1357" y="325" class="c4"/><use href="#g" x="1060" y="456" class="c5"/><use href="#g" x="1389" y="382" class="c0"/><rect x="862" y="601" class="c0"/><rect x="1164" y="607" class="c7"/><rect x="1044" y="427" class="c2"/><rect x="998" y="481" class="c1"/><use href="#g" x="1249" y="505" class="c3"/><path d="M1455 571l5-10 5 10z" class="c9"/><rect x="1316" y="637" class="c0"/><rect x="1304" y="320" class="c0"/><rect x="996" y="470" class="c4"/><use href="#g" x="1033" y="513" class="c0"/><rect x="1357" y="744" class="c0"/><rect x="1138" y="500" class="c0"/><rect x="1378" y="335" class="c5"/><rect x="1102" y="374" class="c4"/><rect x="1324" y="727" class="c0"/><rect x="841" y="702" class="c10"/><use href="#g" x="1325" y="387" class="c0"/><use href="#g" x="1184" y="387" class="c4"/><rect x="1354" y="755" class="c0"/><rect x="944" y="593" class="c0"/><rect x="1124" y="426" class="c4"/><use href="#g" x="1425" y="388" class="c4"/><use href="#g" x="1212" y="418" class="c9"/><path d="M1317 548l5-10 5 10z" class="c0"/><rect x="1385" y="388" class="c0"/><rect x="1172" y="354" class="c0"/><use href="#g" x="1105" y="509" class="c2"/><rect x="1156" y="482" class="c0"/><use href="#g" x="1189" y="380" class="c5"/><use href="#g" x="1146" y="544" class="c2"/><rect x="1254" y="438" class="c0"/><rect x="1394" y="352" class="c0"/><use href="#g" x="1338" y="386" class="c0"/><use href="#g" x="1120" y="378" class="c5"/><use href="#g" x="1139" y="517" class="c0"/><rect x="1201" y="447" class="c3"/><rect x="1437" y="590" class="c4"/><rect x="1351" y="358" class="c0"/><rect x="1237" y="371" class="c2"/><use href="#g" x="1082" y="377" class="c2"/><rect x="1210" y="537" class="c5"/><rect x="1346" y="806" class="c2"/><use href="#g" x="1393" y="357" class="c2"/><use href="#g" x="1213" y="528" class="c6"/><rect x="1132" y="764" class="c0"/><rect x="1268" y="292" class="c1"/><use href="#g" x="1300" y="332" class="c5"/><rect x="854" y="599" class="c0"/><path d="M1292 348l5-10 5 10z" class="c0"/><rect x="1032" y="456" class="c0"/><rect x="1071" y="505" class="c0"/><rect x="1285" y="347" class="c7"/><rect x="1177" y="423" class="c0"/><use href="#g" x="1265" y="370" class="c0"/><rect x="919" y="622" class="c0"/><rect x="980" y="441" class="c0"/><rect x="1343" y="749" class="c4"/><rect x="989" y="426" class="c0"/><rect x="1435" y="422" class="c0"/><rect x="947" y="491" class="c0"/><path d="M973 599l5-10 5 10z" class="c4"/><rect x="1101" y="498" class="c1"/><rect x="1333" y="442" class="c5"/><rect x="808" y="712" class="c1"/><use href="#g" x="1209" y="451" class="c0"/><path d="M1279 301l5-10 5 10z" class="c1"/><rect x="1305" y="367" class="c3"/><rect x="1145" y="473" class="c0"/><rect x="1432" y="527" class="c0"/><path d="M1333 372l5-10 5 10z" class="c5"/><use href="#g" x="1019" y="524" class="c1"/><rect x="1364" y="710" class="c1"/><rect x="1324" y="348" class="c0"/><rect x="1135" y="399" class="c0"/><rect x="1095" y="556" class="c0"/><use href="#g" x="903" y="556" class="c0"/><use href="#g" x="986" y="577" class="c2"/><rect x="1278" y="373" class="c1"/><rect x="1306" y="312" class="c2"/><rect x="1078" y="519" class="c0"/><use href="#g" x="996" y="443" class="c5"/><path d="M1261 507l5-10 5 10z" class="c1"/><use href="#g" x="1169" y="454" class="c0"/><rect x="1451" y="509" class="c8"/><rect x="1299" y="297" class="c2"/><rect x="1187" y="454" class="c0"/><rect x="1006" y="580" class="c5"/><rect x="1531" y="610" class="c2"/><use href="#g" x="1465" y="390" class="c5"/><rect x="1123" y="522" class="c0"/><use href="#g" x="1148" y="460" class="c4"/><rect x="1353" y="351" class="c0"/><rect x="1068" y="464" class="c7"/><rect x="1305" y="436" class="c2"/><rect x="1309" y="457" class="c0"/><rect x="1088" y="647" class="c2"/><rect x="1421" y="397" class="c0"/><rect x="1187" y="498" class="c0"/><use href="#g" x="1105" y="424" class="c2"/><rect x="1064" y="408" class="c2"/><use href="#g" x="1158" y="435" class="c4"/><path d="M996 637l5-10 5 10z" class="c2"/><rect x="1225" y="385" class="c0"/><use href="#g" x="1197" y="472" class="c1"/><rect x="1086" y="397" class="c0"/><rect x="948" y="554" class="c0"/><rect x="1077" y="386" class="c0"/><rect x="1412" y="361" class="c0"/><rect x="1372" y="706" class="c5"/><rect x="1080" y="762" class="c0"/><use href="#g" x="1124" y="459" class="c0"/><rect x="1316" y="425" class="c0"/><use href="#g" x="1277" y="329" class="c2"/><rect x="1129" y="421" class="c2"/><rect x="1322" y="492" class="c3"/><rect x="1344" y="795" class="c8"/><use href="#g" x="1483" y="665" class="c0"/><rect x="1173" y="391" class="c0"/><rect x="1203" y="394" class="c3"/><rect x="1213" y="422" class="c0"/><use href="#g" x="1118" y="483" class="c6"/><use href="#g" x="1211" y="427" class="c0"/><rect x="1311" y="336" class="c0"/><rect x="1127" y="768" class="c0"/><use href="#g" x="1247" y="383" class="c4"/><use href="#g" x="1291" y="385" class="c0"/><use href="#g" x="954" y="491" class="c7"/><use href="#g" x="1048" y="433" class="c1"/><rect x="969" y="574" class="c2"/><use href="#g" x="1275" y="413" class="c0"/><path d="M1044 408l5-10 5 10z" class="c0"/><rect x="1335" y="483" class="c0"/><rect x="1242" y="642" class="c4"/><rect x="1219" y="528" class="c2"/><rect x="1286" y="587" class="c1"/><path d="M1435 504l5-10 5 10z" class="c5"/><use href="#g" x="1292" y="448" class="c2"/><use href="#g" x="1252" y="429" class="c0"/><path d="M1141 501l5-10 5 10z" class="c0"/><rect x="958" y="592" class="c7"/><use href="#g" x="1447" y="373" class="c1"/><rect x="1097" y="640" class="c0"/><rect x="1301" y="318" class="c0"/><use href="#g" x="944" y="509" class="c2"/><rect x="1280" y="438" class="c0"/><use href="#g" x="1072" y="546" class="c0"/><rect x="1112" y="498" class="c2"/><use href="#g" x="997" y="562" class="c0"/><use href="#g" x="998" y="427" class="c2"/><rect x="1260" y="518" class="c1"/><path d="M1201 566l5-10 5 10z" class="c0"/><rect x="1308" y="537" class="c0"/><use href="#g" x="1106" y="356" class="c1"/><use href="#g" x="1176" y="400" class="c0"/><use href="#g" x="1067" y="519" class="c0"/><rect x="1383" y="331" class="c2"/><rect x="1162" y="386" class="c2"/><use href="#g" x="1322" y="340" class="c0"/><rect x="947" y="522" class="c2"/><use href="#g" x="1102" y="382" class="c1"/><rect x="912" y="553" class="c0"/><rect x="1162" y="343" class="c0"/><rect x="992" y="383" class="c2"/><use href="#g" x="1472" y="377" class="c4"/><use href="#g" x="1085" y="423" class="c3"/><use href="#g" x="1152" y="385" class="c7"/><use href="#g" x="1249" y="508" class="c1"/><rect x="1052" y="479" class="c0"/><rect x="946" y="552" class="c4"/><rect x="1252" y="470" class="c9"/><rect x="1168" y="353" class="c0"/><path d="M1588 608l5-10 5 10z" class="c0"/><use href="#g" x="1090" y="461" class="c2"/><rect x="1296" y="481" class="c3"/><path d="M1357 442l5-10 5 10z" class="c0"/><use href="#g" x="931" y="523" class="c5"/><rect x="1137" y="403" class="c7"/><path d="M1014 399l5-10 5 10z" class="c0"/><rect x="1216" y="463" class="c10"/><rect x="1343" y="343" class="c0"/><use href="#g" x="1137" y="420" class="c0"/><rect x="1212" y="403" class="c0"/><use href="#g" x="1119" y="454" class="c0"/><rect x="1031" y="411" class="c5"/><use href="#g" x="1258" y="480" class="c0"/><rect x="1315" y="309" class="c0"/><rect x="1024" y="379" class="c4"/><rect x="1437" y="546" class="c2"/><rect x="1619" y="614" class="c0"/><rect x="1237" y="341" class="c2"/><rect x="1111" y="621" class="c0"/><rect x="1316" y="639" class="c0"/><use href="#g" x="969" y="453" class="c0"/><use href="#g" x="870" y="650" class="c1"/><rect x="1303" y="381" class="c5"/><rect x="1163" y="401" class="c4"/><path d="M1097 378l5-10 5 10z" class="c0"/><use href="#g" x="1181" y="525" class="c0"/><use href="#g" x="1217" y="532" class="c0"/><path d="M1097 531l5-10 5 10z" class="c5"/><rect x="1105" y="456" class="c0"/><use href="#g" x="1246" y="451" class="c6"/><use href="#g" x="1016" y="648" class="c3"/><rect x="1073" y="483" class="c5"/><rect x="1136" y="552" class="c0"/><use href="#g" x="1083" y="412" class="c0"/><use href="#g" x="1109" y="373" class="c4"/><rect x="1154" y="401" class="c0"/><rect x="1087" y="430" class="c1"/><rect x="1302" y="333" class="c1"/><rect x="997" y="435" class="c0"/><rect x="1331" y="590" class="c1"/><use href="#g" x="1384" y="372" class="c9"/><use href="#g" x="1229" y="397" class="c3"/><rect x="1131" y="685" class="c0"/><rect x="973" y="608" class="c7"/><use href="#g" x="1286" y="295" class="c0"/><rect x="1103" y="364" class="c0"/><rect x="1350" y="327" class="c0"/><use href="#g" x="1267" y="609" class="c3"/><rect x="1209" y="455" class="c7"/><use href="#g" x="848" y="597" class="c2"/><use href="#g" x="1351" y="764" class="c1"/><rect x="1443" y="387" class="c2"/><path d="M1255 456l5-10 5 10z" class="c4"/><rect x="1372" y="355" class="c0"/><use href="#g" x="1233" y="395" class="c0"/><rect x="1115" y="544" class="c0"/><rect x="1258" y="446" class="c0"/><use href="#g" x="1380" y="409" class="c3"/><use href="#g" x="1010" y="633" class="c0"/><rect x="1508" y="553" class="c1"/><rect x="1321" y="422" class="c0"/><rect x="1181" y="382" class="c9"/><rect x="1170" y="450" class="c2"/><use href="#g" x="1292" y="400" class="c0"/><rect x="1005" y="438" class="c0"/><path d="M1263 326l5-10 5 10z" class="c0"/><rect x="1000" y="462" class="c0"/><rect x="1560" y="566" class="c0"/><rect x="1567" y="569" class="c4"/><rect x="1304" y="309" class="c5"/><rect x="1252" y="402" class="c0"/><path d="M1242 583l5-10 5 10z" class="c5"/><use href="#g" x="940" y="560" class="c1"/><path d="M851 616l5-10 5 10z" class="c5"/><rect x="1324" y="408" class="c3"/><rect x="853" y="637" class="c2"/><use href="#g" x="1081" y="437" class="c0"/><rect x="1272" y="318" class="c0"/><use href="#g" x="858" y="698" class="c1"/><use href="#g" x="1218" y="417" class="c4"/><rect x="1236" y="417" class="c0"/><rect x="1063" y="502" class="c0"/><rect x="1040" y="544" class="c7"/><rect x="1267" y="421" class="c0"/><rect x="1352" y="527" class="c0"/><rect x="1193" y="366" class="c0"/><rect x="987" y="608" class="c0"/><use href="#g" x="1277" y="417" class="c5"/><rect x="1183" y="470" class="c3"/><use href="#g" x="1004" y="649" class="c2"/><use href="#g" x="1266" y="333" class="c4"/><use href="#g" x="1233" y="464" class="c6"/><use href="#g" x="1223" y="378" class="c5"/><rect x="1405" y="373" class="c2"/><use href="#g" x="1387" y="362" class="c8"/><rect x="1041" y="506" class="c2"/><rect x="878" y="635" class="c0"/><rect x="1200" y="456" class="c0"/><use href="#g" x="1433" y="393" class="c0"/><use href="#g" x="1290" y="362" class="c0"/><rect x="941" y="480" class="c7"/><rect x="1323" y="439" class="c1"/><rect x="1137" y="487" class="c0"/><use href="#g" x="1218" y="376" class="c4"/><rect x="1568" y="565" class="c0"/><rect x="1156" y="528" class="c2"/><use href="#g" x="920" y="619" class="c2"/><rect x="1082" y="462" class="c4"/><path d="M971 647l5-10 5 10z" class="c0"/><use href="#g" x="966" y="591" class="c0"/><rect x="1143" y="447" class="c1"/><use href="#g" x="848" y="652" class="c0"/><rect x="1117" y="365" class="c0"/><rect x="1224" y="514" class="c2"/><use href="#g" x="1296" y="484" class="c2"/><rect x="1052" y="495" class="c0"/><rect x="1077" y="653" class="c0"/><rect x="1006" y="764" class="c0"/><rect x="1292" y="404" class="c0"/><rect x="1217" y="508" class="c1"/><rect x="1022" y="555" class="c0"/><rect x="1300" y="423" class="c0"/><rect x="1066" y="525" class="c0"/><rect x="1217" y="497" class="c0"/><rect x="1235" y="478" class="c0"/><use href="#g" x="1101" y="452" class="c5"/><use href="#g" x="1276" y="349" class="c4"/><rect x="997" y="464" class="c0"/><path d="M1450 549l5-10 5 10z" class="c4"/><rect x="1040" y="714" class="c4"/><use href="#g" x="958" y="565" class="c3"/><use href="#g" x="1165" y="407" class="c2"/><rect x="1033" y="454" class="c7"/><use href="#g" x="1058" y="442" class="c1"/><rect x="1281" y="395" class="c2"/><rect x="1461" y="378" class="c0"/><use href="#g" x="924" y="547" class="c0"/><rect x="1308" y="402" class="c5"/><rect x="1427" y="378" class="c5"/><rect x="1300" y="465" class="c0"/><rect x="883" y="607" class="c0"/><rect x="1075" y="433" class="c3"/><use href="#g" x="1121" y="538" class="c2"/><rect x="1049" y="521" class="c5"/><rect x="1218" y="401" class="c0"/><use href="#g" x="1108" y="467" class="c0"/><use href="#g" x="995" y="458" class="c9"/><use href="#g" x="1430" y="548" class="c1"/><rect x="935" y="632" class="c0"/><use href="#g" x="1036" y="416" class="c0"/><rect x="1435" y="391" class="c0"/><rect x="1517" y="558" class="c0"/><rect x="1172" y="481" class="c7"/><rect x="1387" y="369" class="c3"/><rect x="1309" y="390" class="c5"/><rect x="1373" y="368" class="c2"/><rect x="1143" y="493" class="c0"/><rect x="1227" y="388" class="c1"/><rect x="1288" y="317" class="c5"/><rect x="1299" y="392" class="c2"/><use href="#g" x="1187" y="494" class="c0"/><use href="#g" x="1078" y="569" class="c1"/><use href="#g" x="1270" y="471" class="c0"/><rect x="1402" y="409" class="c0"/><use href="#g" x="1208" y="377" class="c4"/><rect x="1282" y="458" class="c2"/><rect x="1230" y="487" class="c0"/><rect x="1122" y="561" class="c0"/><path d="M1238 528l5-10 5 10z" class="c0"/><rect x="1072" y="539" class="c1"/><path d="M1378 373l5-10 5 10z" class="c2"/><use href="#g" x="933" y="627" class="c0"/><rect x="1410" y="379" class="c0"/><rect x="937" y="529" class="c0"/><rect x="967" y="609" class="c7"/><use href="#g" x="1293" y="420" class="c1"/><rect x="1206" y="462" class="c3"/><path d="M1158 369l5-10 5 10z" class="c2"/><rect x="1452" y="399" class="c0"/><rect x="1037" y="422" class="c3"/><use href="#g" x="1307" y="302" class="c4"/><rect x="1088" y="548" class="c4"/><rect x="1323" y="723" class="c0"/><rect x="1114" y="451" class="c5"/><rect x="1367" y="365" class="c3"/><use href="#g" x="1089" y="489" class="c0"/><use href="#g" x="1351" y="364" class="c3"/><path d="M1277 342l5-10 5 10z" class="c3"/><rect x="1231" y="525" class="c0"/><rect x="1091" y="378" class="c1"/><rect x="1305" y="372" class="c0"/><use href="#g" x="1119" y="364" class="c3"/><rect x="1154" y="550" class="c0"/><rect x="1075" y="562" class="c0"/><rect x="1049" y="541" class="c2"/><use href="#g" x="916" y="548" class="c8"/><rect x="1283" y="582" class="c0"/><rect x="988" y="468" class="c3"/><rect x="911" y="562" class="c0"/><rect x="1253" y="521" class="c0"/><rect x="1032" y="635" class="c0"/><rect x="1013" y="698" class="c0"/><use href="#g" x="876" y="608" class="c2"/><rect x="984" y="534" class="c0"/><rect x="1014" y="424" class="c2"/><use href="#g" x="1127" y="375" class="c0"/><rect x="1040" y="539" class="c4"/><rect x="1343" y="363" class="c0"/><rect x="1325" y="364" class="c8"/><use href="#g" x="1340" y="755" class="c0"/><rect x="1120" y="576" class="c2"/><rect x="862" y="593" class="c0"/><use href="#g" x="1402" y="356" class="c2"/><rect x="1359" y="766" class="c2"/><use href="#g" x="1240" y="447" class="c7"/><rect x="1164" y="492" class="c3"/><rect x="1090" y="477" class="c0"/><rect x="1395" y="474" class="c0"/><path d="M906 527l5-10 5 10z" class="c0"/><use href="#g" x="1213" y="513" class="c0"/><use href="#g" x="1091" y="425" class="c4"/><rect x="1252" y="407" class="c5"/><use href="#g" x="1171" y="465" class="c0"/><rect x="1214" y="422" class="c2"/><use href="#g" x="1230" y="408" class="c0"/><rect x="1294" y="458" class="c0"/><rect x="1381" y="475" class="c5"/><use href="#g" x="1028" y="516" class="c0"/><rect x="823" y="734" class="c5"/><rect x="968" y="625" class="c0"/><rect x="1175" y="550" class="c0"/><rect x="1258" y="472" class="c5"/><rect x="1243" y="506" class="c9"/><rect x="1021" y="446" class="c5"/><rect x="1099" y="401" class="c0"/><rect x="1200" y="667" class="c1"/><rect x="1153" y="462" class="c0"/><rect x="1053" y="478" class="c0"/><rect x="1096" y="471" class="c2"/><rect x="1372" y="378" class="c4"/><use href="#g" x="834" y="706" class="c0"/><use href="#g" x="1275" y="493" class="c0"/><rect x="1378" y="378" class="c2"/><use href="#g" x="1331" y="728" class="c1"/><rect x="1367" y="479" class="c0"/><rect x="1253" y="351" class="c0"/><rect x="1069" y="558" class="c0"/><rect x="1300" y="483" class="c4"/><rect x="1190" y="385" class="c4"/><rect x="1252" y="444" class="c0"/><use href="#g" x="1362" y="725" class="c3"/><rect x="951" y="534" class="c4"/><rect x="1014" y="494" class="c2"/><rect x="992" y="403" class="c0"/><use href="#g" x="1255" y="354" class="c1"/><rect x="1296" y="492" class="c5"/><path d="M1351 811l5-10 5 10z" class="c1"/><rect x="1195" y="465" class="c2"/><rect x="1274" y="412" class="c0"/><use href="#g" x="1292" y="307" class="c0"/><rect x="1445" y="398" class="c1"/><use href="#g" x="928" y="501" class="c5"/><rect x="1399" y="357" class="c0"/><use href="#g" x="1042" y="572" class="c7"/><use href="#g" x="1198" y="354" class="c0"/><rect x="1259" y="355" class="c7"/><rect x="1081" y="403" class="c0"/><rect x="1407" y="341" class="c0"/><rect x="1082" y="452" class="c0"/><use href="#g" x="1419" y="373" class="c0"/><use href="#g" x="1055" y="499" class="c0"/><use href="#g" x="933" y="496" class="c4"/><rect x="1245" y="616" class="c0"/><rect x="1247" y="399" class="c0"/><use href="#g" x="1099" y="469" class="c6"/><rect x="1153" y="458" class="c0"/><use href="#g" x="974" y="654" class="c0"/><rect x="1288" y="373" class="c1"/><rect x="1168" y="387" class="c7"/><rect x="839" y="702" class="c7"/><use href="#g" x="1222" y="443" class="c3"/><rect x="1064" y="422" class="c0"/><rect x="969" y="658" class="c0"/><rect x="1259" y="570" class="c5"/><rect x="1047" y="449" class="c0"/><rect x="1134" y="663" class="c3"/><rect x="1181" y="397" class="c0"/><use href="#g" x="1073" y="405" class="c3"/><rect x="1075" y="484" class="c0"/><rect x="1072" y="501" class="c2"/><rect x="1280" y="331" class="c0"/><rect x="1042" y="541" class="c3"/><use href="#g" x="1171" y="413" class="c1"/><use href="#g" x="1312" y="364" class="c0"/><rect x="1244" y="367" class="c0"/><use href="#g" x="1291" y="565" class="c3"/><rect x="1071" y="656" class="c7"/><rect x="1042" y="490" class="c9"/><rect x="1147" y="563" class="c0"/><use href="#g" x="1065" y="698" class="c0"/><rect x="1410" y="393" class="c0"/><path d="M1365 494l5-10 5 10z" class="c3"/><use href="#g" x="905" y="566" class="c5"/><use href="#g" x="1388" y="347" class="c8"/><rect x="1148" y="492" class="c0"/><use href="#g" x="1008" y="438" class="c0"/><rect x="971" y="617" class="c8"/><rect x="973" y="440" class="c0"/><rect x="1448" y="499" class="c0"/><use href="#g" x="1395" y="677" class="c1"/><path d="M1283 301l5-10 5 10z" class="c2"/><use href="#g" x="1158" y="440" class="c0"/><rect x="1243" y="523" class="c0"/><use href="#g" x="1121" y="478" class="c1"/><use href="#g" x="1028" y="521" class="c0"/><rect x="868" y="646" class="c7"/><rect x="1052" y="400" class="c1"/><use href="#g" x="1067" y="657" class="c0"/><rect x="1041" y="617" class="c0"/><rect x="967" y="545" class="c2"/><rect x="1020" y="483" class="c0"/><rect x="1242" y="457" class="c0"/><rect x="1351" y="677" class="c0"/><rect x="1469" y="385" class="c0"/><rect x="952" y="583" class="c3"/><rect x="1187" y="482" class="c0"/><rect x="1323" y="383" class="c0"/><rect x="1525" y="614" class="c4"/><rect x="1063" y="414" class="c0"/><rect x="1016" y="754" class="c6"/><rect x="1295" y="723" class="c0"/><rect x="1353" y="333" class="c0"/><rect x="1147" y="498" class="c0"/><rect x="997" y="482" class="c0"/><use href="#g" x="1054" y="406" class="c0"/><rect x="972" y="597" class="c1"/><rect x="974" y="587" class="c8"/><rect x="1302" y="411" class="c0"/><rect x="1306" y="412" class="c2"/><use href="#g" x="1318" y="488" class="c0"/><rect x="920" y="549" class="c0"/><rect x="1133" y="370" class="c0"/><use href="#g" x="1298" y="337" class="c0"/><rect x="1201" y="353" class="c0"/><rect x="1099" y="634" class="c0"/><rect x="945" y="563" class="c2"/><rect x="1002" y="532" class="c2"/><rect x="1327" y="426" class="c2"/><use href="#g" x="1319" y="411" class="c0"/><rect x="1290" y="599" class="c4"/><rect x="1197" y="420" class="c2"/><use href="#g" x="935" y="614" class="c0"/><rect x="1237" y="530" class="c0"/><rect x="1037" y="478" class="c0"/><rect x="1533" y="542" class="c0"/><use href="#g" x="1043" y="485" class="c2"/><use href="#g" x="1226" y="434" class="c4"/><use href="#g" x="1073" y="437" class="c5"/><rect x="1431" y="577" class="c1"/><rect x="1150" y="686" class="c7"/><use href="#g" x="973" y="604" class="c0"/><rect x="1079" y="603" class="c0"/><rect x="1416" y="634" class="c0"/><use href="#g" x="958" y="514" class="c2"/><path d="M1021 659l5-10 5 10z" class="c0"/><use href="#g" x="970" y="488" class="c5"/><use href="#g" x="970" y="554" class="c1"/><rect x="1078" y="510" class="c0"/><path d="M1183 401l5-10 5 10z" class="c2"/><rect x="1455" y="585" class="c0"/><rect x="1139" y="388" class="c3"/><rect x="1308" y="513" class="c0"/><rect x="1407" y="364" class="c0"/><path d="M1042 662l5-10 5 10z" class="c0"/><rect x="1460" y="525" class="c0"/><path d="M886 626l5-10 5 10z" class="c0"/><rect x="1034" y="647" class="c0"/><use href="#g" x="1009" y="633" class="c3"/><rect x="962" y="653" class="c0"/><use href="#g" x="1123" y="472" class="c0"/><use href="#g" x="1287" y="433" class="c4"/><rect x="1324" y="764" class="c0"/><rect x="1270" y="398" class="c0"/><use href="#g" x="1353" y="718" class="c0"/><rect x="1290" y="544" class="c9"/><rect x="1012" y="494" class="c0"/><rect x="1328" y="345" class="c1"/><rect x="1228" y="471" class="c7"/><rect x="1021" y="477" class="c0"/><use href="#g" x="1114" y="438" class="c0"/><rect x="1144" y="383" class="c2"/><rect x="1507" y="619" class="c6"/><use href="#g" x="897" y="566" class="c0"/><rect x="872" y="656" class="c4"/><rect x="1141" y="393" class="c3"/><use href="#g" x="993" y="584" class="c0"/><rect x="850" y="716" class="c1"/><rect x="1113" y="531" class="c2"/><use href="#g" x="1293" y="316" class="c1"/><use href="#g" x="1198" y="445" class="c0"/><path d="M1200 396l5-10 5 10z" class="c3"/><use href="#g" x="920" y="587" class="c0"/><use href="#g" x="1213" y="462" class="c2"/><rect x="1210" y="384" class="c2"/><use href="#g" x="1283" y="435" class="c0"/><path d="M1373 716l5-10 5 10z" class="c1"/><rect x="1092" y="440" class="c0"/><rect x="1302" y="511" class="c5"/><rect x="1181" y="571" class="c2"/><rect x="968" y="457" class="c5"/><rect x="985" y="458" class="c0"/><rect x="980" y="459" class="c7"/><rect x="1249" y="367" class="c0"/><rect x="892" y="611" class="c0"/><use href="#g" x="1256" y="487" class="c7"/><use href="#g" x="840" y="695" class="c4"/><rect x="1031" y="503" class="c2"/><rect x="1205" y="414" class="c5"/><rect x="1198" y="492" class="c0"/><rect x="1246" y="351" class="c1"/><path d="M937 645l5-10 5 10z" class="c2"/><rect x="891" y="608" class="c2"/><rect x="1123" y="462" class="c4"/><rect x="974" y="696" class="c0"/><rect x="1167" y="463" class="c5"/><use href="#g" x="1118" y="409" class="c5"/><path d="M1103 693l5-10 5 10z" class="c4"/><rect x="1350" y="733" class="c0"/><path d="M1350 694l5-10 5 10z" class="c4"/><rect x="848" y="719" class="c0"/><rect x="1133" y="585" class="c0"/><use href="#g" x="1193" y="394" class="c4"/><rect x="857" y="682" class="c4"/><rect x="1083" y="444" class="c4"/><use href="#g" x="1326" y="393" class="c0"/><rect x="1204" y="487" class="c8"/><rect x="1250" y="616" class="c0"/><rect x="856" y="692" class="c0"/><use href="#g" x="1309" y="433" class="c2"/><path d="M1355 582l5-10 5 10z" class="c3"/><use href="#g" x="1361" y="348" class="c2"/><rect x="1023" y="502" class="c2"/><rect x="1108" y="457" class="c0"/><use href="#g" x="935" y="563" class="c7"/><rect x="1307" y="432" class="c0"/><use href="#g" x="1219" y="432" class="c0"/><rect x="1344" y="441" class="c0"/><rect x="1206" y="377" class="c1"/><use href="#g" x="1387" y="351" class="c0"/><use href="#g" x="1024" y="430" class="c0"/><rect x="1190" y="408" class="c0"/><rect x="1283" y="423" class="c1"/><rect x="1266" y="444" class="c5"/><use href="#g" x="1373" y="342" class="c4"/><rect x="1202" y="372" class="c4"/><rect x="910" y="516" class="c0"/><rect x="952" y="596" class="c0"/><rect x="1476" y="504" class="c0"/><rect x="1294" y="396" class="c4"/><use href="#g" x="1353" y="391" class="c3"/><rect x="993" y="397" class="c2"/><rect x="1141" y="553" class="c2"/><use href="#g" x="1437" y="407" class="c0"/><rect x="819" y="701" class="c0"/><use href="#g" x="1004" y="453" class="c0"/><use href="#g" x="1269" y="499" class="c3"/><use href="#g" x="1123" y="507" class="c3"/><rect x="1070" y="575" class="c0"/><rect x="1095" y="646" class="c0"/><use href="#g" x="1343" y="332" class="c4"/><path d="M1578 603l5-10 5 10z" class="c0"/><rect x="1265" y="432" class="c2"/><use href="#g" x="996" y="562" class="c0"/><use href="#g" x="974" y="693" class="c0"/><use href="#g" x="1082" y="536" class="c0"/><rect x="1447" y="407" class="c2"/><rect x="1266" y="295" class="c0"/><use href="#g" x="1036" y="545" class="c0"/><path d="M968 705l5-10 5 10z" class="c0"/><rect x="1355" y="365" class="c0"/><rect x="1068" y="430" class="c0"/><use href="#g" x="1093" y="428" class="c0"/><rect x="1158" y="368" class="c0"/><rect x="1333" y="459" class="c0"/><rect x="1003" y="577" class="c6"/><rect x="1277" y="354" class="c0"/><rect x="1048" y="466" class="c5"/><rect x="1404" y="329" class="c9"/><rect x="1213" y="527" class="c0"/><use href="#g" x="937" y="508" class="c0"/><path d="M1249 544l5-10 5 10z" class="c0"/><path d="M1013 772l5-10 5 10z" class="c0"/><path d="M1389 363l5-10 5 10z" class="c0"/><rect x="1327" y="602" class="c6"/><use href="#g" x="1218" y="449" class="c4"/><use href="#g" x="953" y="525" class="c3"/><rect x="1164" y="475" class="c5"/><use href="#g" x="827" y="726" class="c4"/><use href="#g" x="1295" y="424" class="c0"/><use href="#g" x="1325" y="378" class="c7"/><use href="#g" x="1437" y="376" class="c0"/><use href="#g" x="1151" y="474" class="c0"/><rect x="1317" y="388" class="c0"/><use href="#g" x="1104" y="549" class="c0"/><rect x="1253" y="449" class="c0"/><rect x="997" y="570" class="c0"/><rect x="952" y="630" class="c0"/><rect x="1596" y="553" class="c7"/><rect x="1346" y="784" class="c0"/><rect x="1292" y="475" class="c0"/><rect x="928" y="540" class="c7"/><use href="#g" x="1033" y="448" class="c2"/><rect x="951" y="514" class="c7"/><rect x="1071" y="481" class="c0"/><rect x="1262" y="398" class="c7"/><rect x="1458" y="413" class="c0"/><use href="#g" x="1282" y="399" class="c0"/><path d="M1163 449l5-10 5 10z" class="c5"/><use href="#g" x="1093" y="418" class="c3"/><rect x="1405" y="386" class="c4"/><rect x="916" y="620" class="c2"/><use href="#g" x="1284" y="348" class="c5"/><rect x="1285" y="477" class="c9"/><rect x="1351" y="741" class="c0"/><path d="M1226 646l5-10 5 10z" class="c4"/><rect x="905" y="611" class="c3"/><rect x="1332" y="411" class="c0"/><use href="#g" x="1239" y="347" class="c0"/><rect x="1394" y="472" class="c3"/><use href="#g" x="1158" y="395" class="c0"/><rect x="1257" y="531" class="c5"/><rect x="1294" y="379" class="c0"/><use href="#g" x="1168" y="470" class="c1"/><rect x="911" y="540" class="c1"/><use href="#g" x="1137" y="421" class="c9"/><rect x="1135" y="389" class="c0"/><rect x="1256" y="575" class="c0"/><path d="M1004 738l5-10 5 10z" class="c9"/><rect x="1011" y="435" class="c0"/><rect x="1141" y="509" class="c4"/><rect x="1286" y="602" class="c0"/><rect x="1279" y="630" class="c1"/><rect x="987" y="571" class="c0"/><rect x="1277" y="348" class="c4"/><use href="#g" x="1273" y="484" class="c0"/><rect x="1227" y="523" class="c7"/><rect x="977" y="444" class="c0"/><use href="#g" x="1152" y="385" class="c0"/><rect x="1198" y="387" class="c5"/><rect x="1030" y="648" class="c1"/><rect x="1140" y="407" class="c5"/><rect x="1029" y="522" class="c0"/><path d="M1250 361l5-10 5 10z" class="c0"/><rect x="947" y="603" class="c0"/><rect x="1431" y="377" class="c0"/><rect x="1246" y="388" class="c0"/><rect x="845" y="645" class="c0"/><path d="M1377 703l5-10 5 10z" class="c0"/><rect x="1079" y="649" class="c0"/><rect x="928" y="585" class="c3"/><rect x="1172" y="436" class="c0"/><use href="#g" x="1232" y="492" class="c0"/><rect x="1112" y="623" class="c0"/><rect x="1158" y="452" class="c1"/><rect x="966" y="583" class="c4"/><use href="#g" x="1106" y="562" class="c3"/><use href="#g" x="1203" y="369" class="c5"/><rect x="1450" y="391" class="c0"/><rect x="1093" y="409" class="c2"/><rect x="1229" y="533" class="c0"/><rect x="1198" y="528" class="c2"/><rect x="968" y="552" class="c1"/><rect x="1178" y="353" class="c0"/><rect x="1458" y="517" class="c0"/><rect x="1316" y="323" class="c0"/><use href="#g" x="1218" y="454" class="c0"/><path d="M1383 537l5-10 5 10z" class="c0"/><rect x="1161" y="481" class="c0"/><rect x="1261" y="571" class="c0"/><rect x="1074" y="390" class="c2"/><rect x="940" y="637" class="c0"/><rect x="1313" y="315" class="c0"/><use href="#g" x="1172" y="404" class="c0"/><use href="#g" x="971" y="492" class="c0"/><rect x="1537" y="572" class="c3"/><use href="#g" x="922" y="509" class="c8"/><rect x="1251" y="557" class="c0"/><rect x="1234" y="448" class="c0"/><rect x="1114" y="494" class="c4"/><use href="#g" x="1138" y="466" class="c0"/><rect x="1286" y="380" class="c3"/><rect x="1228" y="578" class="c0"/><rect x="1013" y="477" class="c3"/><use href="#g" x="1265" y="326" class="c0"/><rect x="1178" y="514" class="c0"/><rect x="1079" y="469" class="c0"/><use href="#g" x="1193" y="358" class="c0"/><use href="#g" x="884" y="574" class="c0"/><rect x="1516" y="622" class="c0"/><rect x="1452" y="472" class="c3"/><rect x="1110" y="505" class="c0"/><rect x="971" y="502" class="c5"/><path d="M1421 492l5-10 5 10z" class="c2"/><rect x="1158" y="541" class="c5"/><rect x="1341" y="669" class="c4"/><use href="#g" x="940" y="532" class="c7"/><rect x="1295" y="537" class="c0"/><rect x="1417" y="368" class="c0"/><use href="#g" x="1243" y="502" class="c4"/><use href="#g" x="1113" y="543" class="c5"/><rect x="1495" y="509" class="c0"/><use href="#g" x="1000" y="534" class="c9"/><rect x="1040" y="454" class="c0"/><use href="#g" x="983" y="458" class="c5"/><rect x="1544" y="572" class="c0"/><rect x="1003" y="583" class="c0"/><rect x="1162" y="551" class="c7"/><use href="#g" x="931" y="607" class="c0"/><rect x="1200" y="576" class="c4"/><rect x="1010" y="384" class="c7"/><rect x="1250" y="489" class="c1"/><use href="#g" x="1183" y="400" class="c0"/><rect x="1076" y="383" class="c7"/><use href="#g" x="852" y="619" class="c6"/><use href="#g" x="1099" y="412" class="c0"/><rect x="839" y="724" class="c2"/><use href="#g" x="1048" y="435" class="c0"/><rect x="1243" y="428" class="c0"/><rect x="1100" y="462" class="c0"/><rect x="926" y="562" class="c3"/><rect x="1433" y="424" class="c5"/><rect x="1161" y="463" class="c0"/><rect x="1300" y="454" class="c0"/><rect x="978" y="706" class="c0"/><rect x="1292" y="311" class="c1"/><rect x="1132" y="379" class="c4"/><use href="#g" x="1128" y="429" class="c0"/><rect x="1181" y="385" class="c0"/><rect x="1267" y="384" class="c1"/><rect x="952" y="594" class="c3"/><rect x="1447" y="450" class="c1"/><rect x="1285" y="370" class="c0"/><use href="#g" x="1421" y="357" class="c0"/><use href="#g" x="1351" y="377" class="c4"/><rect x="1085" y="434" class="c3"/><rect x="1094" y="480" class="c0"/><rect x="899" y="611" class="c0"/><rect x="938" y="525" class="c0"/><use href="#g" x="1397" y="570" class="c0"/><use href="#g" x="1287" y="497" class="c5"/><rect x="967" y="613" class="c0"/><use href="#g" x="1002" y="587" class="c0"/><path d="M908 612l5-10 5 10z" class="c8"/><rect x="1217" y="492" class="c0"/><rect x="1193" y="404" class="c5"/><rect x="1460" y="679" class="c0"/><use href="#g" x="1293" y="390" class="c0"/><use href="#g" x="1132" y="425" class="c0"/><use href="#g" x="1384" y="403" class="c0"/><path d="M1349 760l5-10 5 10z" class="c0"/><rect x="1209" y="380" class="c7"/><rect x="918" y="596" class="c0"/><use href="#g" x="1292" y="550" class="c1"/><rect x="1163" y="388" class="c0"/><path d="M1511 668l5-10 5 10z" class="c3"/><rect x="899" y="588" class="c0"/><rect x="933" y="484" class="c0"/><rect x="1258" y="405" class="c1"/><rect x="1340" y="755" class="c4"/><rect x="1305" y="460" class="c4"/><rect x="1107" y="497" class="c2"/><rect x="1283" y="353" class="c0"/><use href="#g" x="1058" y="446" class="c0"/><path d="M1454 610l5-10 5 10z" class="c0"/><use href="#g" x="1073" y="694" class="c0"/><rect x="1280" y="373" class="c0"/><rect x="1008" y="571" class="c0"/><use href="#g" x="1015" y="489" class="c8"/><rect x="1285" y="529" class="c4"/><use href="#g" x="907" y="531" class="c1"/><use href="#g" x="1276" y="402" class="c5"/><use href="#g" x="954" y="566" class="c0"/><rect x="1179" y="505" class="c0"/><use href="#g" x="1221" y="342" class="c0"/><rect x="1260" y="375" class="c0"/><rect x="1043" y="519" class="c9"/><rect x="1291" y="388" class="c1"/><rect x="925" y="566" class="c0"/><rect x="1321" y="499" class="c5"/><rect x="1393" y="332" class="c0"/><rect x="1340" y="742" class="c1"/><rect x="1399" y="342" class="c0"/><use href="#g" x="1308" y="418" class="c0"/><rect x="1067" y="509" class="c0"/><rect x="1278" y="315" class="c4"/><rect x="1201" y="408" class="c0"/><rect x="1201" y="421" class="c4"/><rect x="897" y="618" class="c1"/><rect x="1002" y="525" class="c1"/><rect x="1373" y="363" class="c0"/><rect x="1275" y="296" class="c3"/><use href="#g" x="1250" y="486" class="c0"/><rect x="1466" y="418" class="c9"/><path d="M1506 567l5-10 5 10z" class="c1"/><rect x="871" y="597" class="c2"/><path d="M1163 349l5-10 5 10z" class="c2"/><use href="#g" x="1118" y="445" class="c4"/><rect x="1086" y="535" class="c4"/><use href="#g" x="1066" y="448" class="c5"/><rect x="1342" y="742" class="c1"/><rect x="1070" y="445" class="c1"/><rect x="1313" y="322" class="c0"/><use href="#g" x="1126" y="546" class="c0"/><rect x="1451" y="384" class="c4"/><use href="#g" x="899" y="586" class="c0"/><use href="#g" x="1448" y="547" class="c0"/><rect x="1126" y="381" class="c1"/><rect x="1154" y="493" class="c0"/><rect x="1278" y="423" class="c3"/><path d="M1455 538l5-10 5 10z" class="c4"/><rect x="1413" y="395" class="c7"/><use href="#g" x="1282" y="305" class="c4"/><use href="#g" x="1253" y="368" class="c2"/><use href="#g" x="1053" y="456" class="c0"/><rect x="1443" y="413" class="c5"/><rect x="1349" y="735" class="c7"/><path d="M1490 610l5-10 5 10z" class="c4"/><rect x="1026" y="446" class="c0"/><use href="#g" x="1415" y="413" class="c0"/><use href="#g" x="1137" y="412" class="c2"/><path d="M1324 329l5-10 5 10z" class="c5"/><use href="#g" x="855" y="663" class="c5"/><use href="#g" x="1138" y="358" class="c5"/><rect x="1035" y="397" class="c0"/><use href="#g" x="1147" y="379" class="c0"/><rect x="986" y="475" class="c0"/><rect x="1334" y="539" class="c5"/><use href="#g" x="1235" y="412" class="c0"/><path d="M1220 562l5-10 5 10z" class="c0"/><rect x="854" y="605" class="c0"/><use href="#g" x="1068" y="476" class="c1"/><use href="#g" x="1191" y="351" class="c0"/><rect x="1247" y="508" class="c5"/><rect x="811" y="719" class="c0"/><use href="#g" x="970" y="583" class="c5"/><rect x="1129" y="375" class="c0"/><rect x="894" y="633" class="c0"/><path d="M1447 443l5-10 5 10z" class="c0"/><rect x="1250" y="387" class="c2"/><rect x="1134" y="481" class="c0"/><rect x="1018" y="471" class="c3"/><rect x="1258" y="324" class="c1"/><rect x="1237" y="633" class="c4"/><path d="M1455 417l5-10 5 10z" class="c0"/><rect x="1232" y="511" class="c7"/><rect x="1151" y="430" class="c0"/><use href="#g" x="1346" y="443" class="c2"/><rect x="1061" y="655" class="c0"/><rect x="1263" y="448" class="c0"/><rect x="1435" y="422" class="c0"/><rect x="939" y="573" class="c0"/><rect x="1272" y="384" class="c8"/><rect x="1406" y="380" class="c0"/><use href="#g" x="1353" y="348" class="c0"/><use href="#g" x="1248" y="528" class="c0"/><rect x="1123" y="391" class="c0"/><use href="#g" x="856" y="659" class="c3"/><use href="#g" x="842" y="659" class="c0"/><use href="#g" x="845" y="691" class="c0"/><rect x="1343" y="671" class="c4"/><rect x="931" y="544" class="c0"/><rect x="1092" y="502" class="c0"/><rect x="1383" y="388" class="c0"/><rect x="982" y="443" class="c0"/><rect x="1152" y="412" class="c0"/><path d="M1205 357l5-10 5 10z" class="c0"/><rect x="1269" y="432" class="c0"/><rect x="1170" y="430" class="c3"/><use href="#g" x="1036" y="477" class="c2"/><rect x="1140" y="499" class="c0"/><use href="#g" x="1179" y="378" class="c5"/><rect x="1317" y="409" class="c0"/><rect x="1010" y="627" class="c7"/><rect x="1256" y="613" class="c4"/><use href="#g" x="1247" y="345" class="c0"/><use href="#g" x="1151" y="534" class="c1"/><use href="#g" x="1209" y="350" class="c5"/><path d="M1317 599l5-10 5 10z" class="c7"/><rect x="1278" y="390" class="c0"/><rect x="1374" y="561" class="c0"/><use href="#g" x="1103" y="535" class="c6"/><use href="#g" x="1426" y="402" class="c0"/><path d="M1270 618l5-10 5 10z" class="c5"/><rect x="1104" y="443" class="c5"/><use href="#g" x="1072" y="530" class="c0"/><rect x="1126" y="528" class="c2"/><rect x="1167" y="497" class="c3"/><rect x="1193" y="399" class="c0"/><rect x="1211" y="488" class="c0"/><path d="M1246 452l5-10 5 10z" class="c1"/><rect x="1073" y="439" class="c9"/><rect x="1211" y="551" class="c0"/><rect x="1328" y="384" class="c0"/><use href="#g" x="916" y="641" class="c0"/><use href="#g" x="1087" y="513" class="c0"/><use href="#g" x="1306" y="332" class="c3"/><rect x="1135" y="533" class="c2"/><rect x="1348" y="575" class="c0"/><use href="#g" x="1044" y="563" class="c8"/><rect x="891" y="594" class="c0"/><rect x="989" y="607" class="c0"/><rect x="1274" y="498" class="c0"/><rect x="1333" y="717" class="c2"/><use href="#g" x="1332" y="438" class="c3"/><rect x="1308" y="637" class="c6"/><use href="#g" x="958" y="669" class="c5"/><use href="#g" x="1131" y="424" class="c5"/><rect x="1066" y="490" class="c0"/><rect x="1099" y="423" class="c0"/><rect x="1001" y="422" class="c3"/><use href="#g" x="821" y="704" class="c0"/><path d="M1311 309l5-10 5 10z" class="c4"/><rect x="1172" y="489" class="c0"/><rect x="1437" y="413" class="c4"/><rect x="939" y="566" class="c0"/><use href="#g" x="1299" y="312" class="c2"/><rect x="1087" y="354" class="c0"/><use href="#g" x="861" y="636" class="c0"/><rect x="914" y="533" class="c0"/><rect x="1069" y="417" class="c2"/><use href="#g" x="1347" y="358" class="c0"/><path d="M1317 604l5-10 5 10z" class="c0"/><rect x="1280" y="327" class="c0"/><rect x="1219" y="446" class="c0"/><use href="#g" x="1019" y="521" class="c4"/><rect x="1433" y="385" class="c0"/><use href="#g" x="1147" y="455" class="c1"/><rect x="1433" y="392" class="c0"/><use href="#g" x="1073" y="566" class="c3"/><rect x="1290" y="530" class="c0"/><rect x="961" y="577" class="c8"/><use href="#g" x="988" y="610" class="c4"/><rect x="1309" y="363" class="c0"/><rect x="1042" y="570" class="c0"/><rect x="1403" y="363" class="c0"/><rect x="994" y="526" class="c2"/><rect x="1588" y="561" class="c0"/><rect x="1297" y="418" class="c0"/><rect x="1195" y="510" class="c0"/><rect x="1496" y="524" class="c5"/><rect x="1123" y="565" class="c0"/><rect x="1361" y="348" class="c2"/><rect x="1122" y="447" class="c2"/><rect x="1143" y="357" class="c0"/><rect x="1407" y="548" class="c2"/><use href="#g" x="1088" y="455" class="c5"/><rect x="1005" y="478" class="c4"/><use href="#g" x="1524" y="575" class="c5"/><rect x="1292" y="301" class="c5"/><path d="M1031 664l5-10 5 10z" class="c0"/><rect x="1372" y="377" class="c0"/><rect x="1257" y="407" class="c1"/><use href="#g" x="1384" y="401" class="c4"/><rect x="1248" y="453" class="c7"/><use href="#g" x="1088" y="498" class="c1"/><rect x="1291" y="487" class="c5"/><rect x="1012" y="444" class="c1"/><rect x="1386" y="332" class="c0"/><rect x="1009" y="553" class="c9"/><rect x="1276" y="497" class="c3"/><rect x="926" y="524" class="c0"/><use href="#g" x="1290" y="297" class="c0"/><path d="M993 427l5-10 5 10z" class="c5"/><rect x="1552" y="691" class="c0"/><rect x="990" y="727" class="c0"/><use href="#g" x="1239" y="469" class="c0"/><path d="M1462 602l5-10 5 10z" class="c1"/><rect x="990" y="498" class="c0"/><use href="#g" x="1452" y="492" class="c0"/><use href="#g" x="959" y="599" class="c1"/><rect x="1017" y="650" class="c0"/><rect x="1264" y="361" class="c3"/><rect x="1092" y="395" class="c0"/><path d="M1331 381l5-10 5 10z" class="c5"/><use href="#g" x="958" y="636" class="c2"/><rect x="1044" y="418" class="c6"/><use href="#g" x="1366" y="706" class="c1"/><use href="#g" x="1047" y="439" class="c2"/><path d="M1384 393l5-10 5 10z" class="c0"/><use href="#g" x="1477" y="398" class="c2"/><use href="#g" x="1142" y="382" class="c0"/><use href="#g" x="861" y="649" class="c0"/><use href="#g" x="986" y="465" class="c9"/><rect x="912" y="563" class="c1"/><rect x="1173" y="374" class="c0"/><use href="#g" x="1279" y="313" class="c0"/><use href="#g" x="1302" y="497" class="c0"/><rect x="1239" y="463" class="c3"/><rect x="1197" y="497" class="c0"/><rect x="1074" y="361" class="c0"/><path d="M853 643l5-10 5 10z" class="c2"/><rect x="967" y="445" class="c1"/><rect x="1114" y="513" class="c0"/><use href="#g" x="1012" y="454" class="c4"/><use href="#g" x="1256" y="494" class="c4"/><rect x="1232" y="424" class="c7"/><use href="#g" x="1229" y="467" class="c0"/><rect x="1277" y="313" class="c2"/><rect x="1088" y="422" class="c0"/><use href="#g" x="1241" y="387" class="c0"/><use href="#g" x="829" y="723" class="c0"/><rect x="1196" y="461" class="c0"/><rect x="1002" y="706" class="c0"/><use href="#g" x="1334" y="456" class="c4"/><use href="#g" x="1036" y="562" class="c5"/><rect x="1113" y="684" class="c1"/><use href="#g" x="992" y="675" class="c0"/><rect x="1013" y="526" class="c1"/><path d="M1476 599l5-10 5 10z" class="c0"/><path d="M1043 476l5-10 5 10z" class="c0"/><use href="#g" x="1298" y="489" class="c0"/><rect x="1051" y="707" class="c0"/><rect x="1335" y="391" class="c0"/><use href="#g" x="907" y="622" class="c0"/><rect x="965" y="518" class="c4"/><rect x="1292" y="436" class="c0"/><rect x="897" y="553" class="c2"/><use href="#g" x="1247" y="381" class="c0"/><rect x="1284" y="589" class="c0"/><rect x="1031" y="478" class="c6"/><use href="#g" x="901" y="557" class="c3"/><rect x="1217" y="458" class="c2"/><use href="#g" x="1228" y="429" class="c4"/><use href="#g" x="1236" y="455" class="c0"/><rect x="1420" y="412" class="c0"/><use href="#g" x="1032" y="486" class="c0"/><rect x="1358" y="362" class="c7"/><rect x="1103" y="394" class="c0"/><use href="#g" x="988" y="463" class="c0"/><rect x="1152" y="604" class="c4"/><rect x="1105" y="368" class="c3"/><use href="#g" x="1192" y="509" class="c3"/><use href="#g" x="1160" y="533" class="c4"/><use href="#g" x="1242" y="480" class="c0"/><use href="#g" x="963" y="638" class="c2"/><use href="#g" x="893" y="623" class="c4"/><path d="M1141 486l5-10 5 10z" class="c0"/><use href="#g" x="1295" y="454" class="c5"/><path d="M1453 511l5-10 5 10z" class="c0"/><rect x="1024" y="766" class="c0"/><rect x="1292" y="412" class="c1"/><rect x="1222" y="424" class="c0"/><rect x="851" y="713" class="c0"/><rect x="1417" y="480" class="c2"/><rect x="1402" y="553" class="c0"/><use href="#g" x="1276" y="388" class="c0"/><rect x="996" y="488" class="c7"/><rect x="1164" y="484" class="c0"/><rect x="1188" y="411" class="c0"/><rect x="1268" y="373" class="c0"/><use href="#g" x="1279" y="357" class="c1"/><use href="#g" x="971" y="563" class="c7"/><rect x="1286" y="317" class="c0"/><rect x="1463" y="394" class="c2"/><use href="#g" x="1353" y="359" class="c0"/><rect x="1285" y="411" class="c2"/><use href="#g" x="1198" y="503" class="c2"/><use href="#g" x="1097" y="445" class="c0"/><rect x="1149" y="374" class="c5"/><path d="M1339 656l5-10 5 10z" class="c9"/><use href="#g" x="868" y="638" class="c5"/><rect x="1007" y="547" class="c1"/><use href="#g" x="1117" y="523" class="c0"/><rect x="1065" y="444" class="c5"/><rect x="1279" y="499" class="c4"/><rect x="897" y="598" class="c0"/><rect x="1271" y="307" class="c3"/><rect x="975" y="516" class="c0"/><use href="#g" x="1298" y="695" class="c0"/><rect x="956" y="575" class="c5"/><rect x="1193" y="503" class="c0"/><rect x="1139" y="583" class="c3"/><path d="M1044 719l5-10 5 10z" class="c0"/><rect x="1193" y="469" class="c2"/><rect x="1103" y="437" class="c2"/><use href="#g" x="895" y="593" class="c0"/><use href="#g" x="967" y="622" class="c3"/><rect x="1319" y="367" class="c2"/><rect x="884" y="612" class="c0"/><path d="M1378 684l5-10 5 10z" class="c7"/><rect x="1174" y="415" class="c1"/><rect x="1407" y="408" class="c0"/><rect x="995" y="754" class="c8"/><use href="#g" x="1135" y="456" class="c5"/><use href="#g" x="993" y="579" class="c8"/><rect x="1110" y="417" class="c0"/><use href="#g" x="1378" y="340" class="c0"/><rect x="1441" y="418" class="c0"/><rect x="1422" y="407" class="c6"/><rect x="926" y="517" class="c8"/><use href="#g" x="1231" y="344" class="c5"/><use href="#g" x="1157" y="485" class="c6"/><path d="M1123 492l5-10 5 10z" class="c0"/><use href="#g" x="1194" y="429" class="c0"/><use href="#g" x="1111" y="435" class="c1"/><rect x="1294" y="463" class="c7"/><use href="#g" x="973" y="470" class="c3"/><use href="#g" x="1320" y="399" class="c4"/><use href="#g" x="880" y="588" class="c2"/><path d="M1155 435l5-10 5 10z" class="c0"/><rect x="1043" y="505" class="c5"/><rect x="1309" y="513" class="c0"/><rect x="1011" y="526" class="c0"/><rect x="975" y="676" class="c2"/><rect x="1052" y="534" class="c0"/><rect x="1417" y="384" class="c2"/><rect x="1314" y="328" class="c1"/><rect x="1313" y="593" class="c0"/><use href="#g" x="1252" y="518" class="c7"/><rect x="1262" y="393" class="c5"/><rect x="1232" y="458" class="c2"/><rect x="1015" y="440" class="c4"/><path d="M1066 487l5-10 5 10z" class="c5"/><use href="#g" x="943" y="531" class="c0"/><use href="#g" x="1382" y="397" class="c0"/><rect x="1197" y="472" class="c4"/><use href="#g" x="1111" y="410" class="c3"/><rect x="1320" y="374" class="c3"/><use href="#g" x="1117" y="392" class="c1"/><rect x="1240" y="397" class="c8"/><rect x="1266" y="381" class="c5"/><rect x="1259" y="308" class="c0"/><rect x="1256" y="418" class="c0"/><rect x="872" y="638" class="c3"/><rect x="978" y="627" class="c0"/><use href="#g" x="1174" y="603" class="c4"/><use href="#g" x="944" y="547" class="c5"/><use href="#g" x="1155" y="559" class="c0"/><rect x="1407" y="355" class="c0"/><rect x="1376" y="363" class="c7"/><use href="#g" x="1172" y="461" class="c0"/><rect x="1143" y="485" class="c7"/><rect x="1034" y="718" class="c6"/><rect x="1312" y="398" class="c0"/><rect x="989" y="537" class="c0"/><use href="#g" x="1249" y="361" class="c0"/><use href="#g" x="980" y="646" class="c0"/><rect x="1130" y="383" class="c3"/><rect x="1319" y="491" class="c0"/><rect x="1252" y="515" class="c0"/><rect x="1475" y="377" class="c2"/><rect x="1190" y="403" class="c0"/><use href="#g" x="965" y="485" class="c0"/><path d="M1205 464l5-10 5 10z" class="c8"/><rect x="1312" y="475" class="c1"/><rect x="1092" y="449" class="c0"/><rect x="1367" y="566" class="c0"/><rect x="1129" y="412" class="c0"/><path d="M1443 445l5-10 5 10z" class="c4"/><rect x="1340" y="324" class="c0"/><use href="#g" x="1077" y="394" class="c0"/><rect x="1271" y="344" class="c1"/><rect x="1035" y="534" class="c9"/><rect x="1242" y="620" class="c2"/><rect x="1422" y="481" class="c5"/><rect x="1273" y="347" class="c7"/><use href="#g" x="957" y="506" class="c0"/><rect x="1146" y="424" class="c4"/><use href="#g" x="1132" y="755" class="c5"/><rect x="1063" y="702" class="c6"/><rect x="1471" y="674" class="c2"/><rect x="1190" y="444" class="c0"/><use href="#g" x="1409" y="386" class="c7"/><rect x="876" y="599" class="c0"/><use href="#g" x="1462" y="385" class="c7"/><rect x="1278" y="340" class="c0"/><path d="M1308 378l5-10 5 10z" class="c0"/><rect x="1093" y="375" class="c0"/><use href="#g" x="1180" y="462" class="c0"/><rect x="922" y="536" class="c0"/><rect x="1133" y="543" class="c0"/><use href="#g" x="1296" y="385" class="c0"/><rect x="1031" y="389" class="c0"/><rect x="1177" y="367" class="c0"/><rect x="1115" y="426" class="c0"/><use href="#g" x="1203" y="469" class="c2"/><rect x="1361" y="392" class="c3"/><rect x="1031" y="472" class="c0"/><rect x="1295" y="439" class="c2"/><rect x="1089" y="372" class="c9"/><path d="M1285 690l5-10 5 10z" class="c5"/><use href="#g" x="1275" y="443" class="c0"/><rect x="966" y="636" class="c1"/><rect x="1537" y="605" class="c2"/><use href="#g" x="847" y="656" class="c1"/><rect x="1467" y="403" class="c0"/><rect x="1042" y="443" class="c1"/><path d="M1053 774l5-10 5 10z" class="c0"/><rect x="1298" y="634" class="c1"/><use href="#g" x="1289" y="366" class="c0"/><use href="#g" x="1157" y="566" class="c1"/><rect x="1240" y="420" class="c5"/><rect x="1290" y="329" class="c5"/><rect x="1288" y="347" class="c0"/><use href="#g" x="1226" y="388" class="c0"/><use href="#g" x="1039" y="512" class="c4"/><rect x="948" y="641" class="c3"/><use href="#g" x="1384" y="344" class="c2"/><rect x="1008" y="384" class="c0"/><path d="M1095 476l5-10 5 10z" class="c0"/><path d="M1103 736l5-10 5 10z" class="c0"/><rect x="1179" y="483" class="c0"/><rect x="844" y="720" class="c5"/><rect x="1429" y="372" class="c0"/><use href="#g" x="1156" y="429" class="c3"/><use href="#g" x="1231" y="637" class="c2"/><rect x="1086" y="460" class="c0"/><rect x="1228" y="368" class="c0"/><rect x="1197" y="377" class="c8"/><use href="#g" x="969" y="632" class="c3"/><rect x="1006" y="387" class="c2"/><use href="#g" x="857" y="632" class="c3"/><rect x="1142" y="687" class="c7"/><rect x="1322" y="378" class="c0"/><rect x="1187" y="342" class="c0"/><rect x="1178" y="350" class="c0"/><rect x="981" y="566" class="c0"/><rect x="1120" y="472" class="c3"/><rect x="1401" y="402" class="c0"/><rect x="834" y="711" class="c0"/><rect x="1130" y="406" class="c2"/><use href="#g" x="1085" y="487" class="c0"/><use href="#g" x="1341" y="378" class="c2"/><rect x="1346" y="629" class="c7"/><rect x="886" y="562" class="c0"/><rect x="899" y="523" class="c0"/><rect x="1272" y="611" class="c0"/><path d="M1595 610l5-10 5 10z" class="c0"/><rect x="1023" y="469" class="c0"/><use href="#g" x="1159" y="363" class="c0"/><use href="#g" x="1067" y="535" class="c4"/><rect x="857" y="586" class="c9"/><rect x="1100" y="530" class="c2"/><rect x="1458" y="366" class="c4"/><rect x="1071" y="408" class="c0"/><use href="#g" x="920" y="532" class="c5"/><path d="M1148 491l5-10 5 10z" class="c6"/><rect x="979" y="657" class="c0"/><use href="#g" x="1298" y="477" class="c0"/><use href="#g" x="841" y="696" class="c0"/><rect x="1306" y="463" class="c4"/><rect x="1324" y="378" class="c1"/><rect x="1094" y="382" class="c5"/><rect x="1381" y="407" class="c3"/><use href="#g" x="1274" y="340" class="c1"/><rect x="1290" y="578" class="c0"/><rect x="1440" y="408" class="c2"/><rect x="1034" y="423" class="c0"/><rect x="932" y="520" class="c7"/><rect x="1285" y="532" class="c7"/><use href="#g" x="906" y="536" class="c4"/><rect x="1145" y="434" class="c4"/><rect x="1390" y="372" class="c1"/><use href="#g" x="1198" y="452" class="c1"/><rect x="948" y="486" class="c5"/><rect x="1203" y="341" class="c0"/><rect x="1204" y="393" class="c0"/><rect x="1280" y="616" class="c5"/><rect x="1412" y="410" class="c0"/><use href="#g" x="985" y="697" class="c0"/><rect x="971" y="513" class="c2"/><use href="#g" x="1001" y="671" class="c0"/><use href="#g" x="1342" y="355" class="c0"/><rect x="1196" y="441" class="c0"/><use href="#g" x="1080" y="482" class="c0"/><use href="#g" x="886" y="598" class="c0"/><rect x="1425" y="370" class="c0"/><rect x="1049" y="445" class="c8"/><use href="#g" x="1205" y="419" class="c5"/><rect x="1269" y="488" class="c0"/><use href="#g" x="1202" y="378" class="c4"/><rect x="1362" y="368" class="c0"/><rect x="1257" y="415" class="c7"/><rect x="1257" y="388" class="c4"/><rect x="1315" y="481" class="c7"/><rect x="1358" y="356" class="c0"/><rect x="1273" y="521" class="c5"/><rect x="1138" y="533" class="c7"/><use href="#g" x="955" y="640" class="c5"/><rect x="980" y="486" class="c4"/><rect x="1266" y="557" class="c0"/><rect x="1072" y="496" class="c2"/><rect x="982" y="532" class="c0"/><rect x="967" y="478" class="c0"/><rect x="1188" y="448" class="c0"/><use href="#g" x="1478" y="397" class="c0"/><use href="#g" x="1284" y="599" class="c0"/><use href="#g" x="1013" y="505" class="c6"/><rect x="1159" y="686" class="c0"/><use href="#g" x="1248" y="401" class="c1"/><path d="M1109 391l5-10 5 10z" class="c6"/><rect x="1098" y="537" class="c0"/><path d="M1252 476l5-10 5 10z" class="c0"/><path d="M1413 355l5-10 5 10z" class="c0"/><rect x="1187" y="361" class="c0"/><rect x="1234" y="526" class="c0"/><path d="M1265 505l5-10 5 10z" class="c0"/><use href="#g" x="964" y="646" class="c6"/><rect x="1010" y="728" class="c0"/><rect x="1197" y="535" class="c5"/><use href="#g" x="1283" y="324" class="c0"/><rect x="1090" y="510" class="c0"/><path d="M1367 755l5-10 5 10z" class="c3"/><use href="#g" x="1143" y="552" class="c0"/><use href="#g" x="1453" y="416" class="c0"/><rect x="995" y="543" class="c7"/><rect x="933" y="623" class="c9"/><path d="M1508 581l5-10 5 10z" class="c0"/><rect x="932" y="556" class="c5"/><rect x="1101" y="373" class="c1"/><rect x="974" y="435" class="c0"/><rect x="1167" y="369" class="c0"/><rect x="1203" y="465" class="c0"/><rect x="1233" y="359" class="c5"/><use href="#g" x="1357" y="807" class="c1"/><rect x="1026" y="452" class="c7"/><rect x="1307" y="707" class="c1"/><use href="#g" x="1048" y="422" class="c0"/><rect x="1195" y="527" class="c0"/><rect x="1263" y="408" class="c0"/><rect x="1334" y="410" class="c0"/><use href="#g" x="1121" y="422" class="c0"/><use href="#g" x="1471" y="397" class="c0"/><rect x="1093" y="548" class="c5"/><rect x="1444" y="549" class="c3"/><rect x="1231" y="518" class="c2"/><rect x="1201" y="432" class="c0"/><use href="#g" x="1196" y="378" class="c2"/><rect x="1059" y="487" class="c0"/><use href="#g" x="1234" y="408" class="c0"/><rect x="1158" y="470" class="c0"/><rect x="976" y="660" class="c0"/><rect x="1353" y="527" class="c0"/><rect x="1425" y="548" class="c0"/><rect x="1302" y="325" class="c4"/><use href="#g" x="1406" y="336" class="c7"/><use href="#g" x="1251" y="349" class="c7"/><rect x="1405" y="394" class="c4"/><rect x="1073" y="444" class="c0"/><rect x="1182" y="411" class="c1"/><use href="#g" x="930" y="498" class="c8"/><path d="M1012 785l5-10 5 10z" class="c0"/><use href="#g" x="1318" y="505" class="c0"/><rect x="1333" y="479" class="c1"/><rect x="1455" y="589" class="c6"/><rect x="1616" y="541" class="c1"/><use href="#g" x="1247" y="522" class="c1"/><use href="#g" x="1122" y="410" class="c0"/><rect x="963" y="525" class="c0"/><rect x="1202" y="661" class="c0"/><rect x="1363" y="511" class="c9"/><use href="#g" x="973" y="617" class="c0"/><rect x="1288" y="630" class="c3"/><path d="M1146 398l5-10 5 10z" class="c0"/><rect x="1002" y="459" class="c0"/><rect x="1292" y="506" class="c4"/><rect x="1382" y="703" class="c2"/><rect x="1004" y="568" class="c5"/><rect x="1416" y="633" class="c0"/><rect x="1320" y="611" class="c4"/><use href="#g" x="1341" y="466" class="c0"/><rect x="1130" y="407" class="c0"/><use href="#g" x="1413" y="402" class="c0"/><rect x="1306" y="635" class="c1"/><use href="#g" x="1048" y="492" class="c6"/><rect x="1346" y="638" class="c3"/><rect x="1181" y="434" class="c4"/><use href="#g" x="913" y="540" class="c0"/><rect x="979" y="495" class="c7"/><path d="M1386 710l5-10 5 10z" class="c0"/><use href="#g" x="1043" y="445" class="c4"/><rect x="1262" y="482" class="c7"/><path d="M1342 821l5-10 5 10z" class="c2"/><rect x="945" y="584" class="c7"/><rect x="1294" y="377" class="c0"/><rect x="1397" y="551" class="c0"/><use href="#g" x="1311" y="394" class="c0"/><rect x="1172" y="363" class="c2"/><use href="#g" x="1037" y="612" class="c0"/><rect x="1307" y="407" class="c2"/><use href="#g" x="1139" y="377" class="c3"/><use href="#g" x="1194" y="483" class="c0"/><rect x="1422" y="430" class="c3"/><rect x="1354" y="806" class="c2"/><path d="M1193 587l5-10 5 10z" class="c0"/><rect x="1131" y="511" class="c2"/><rect x="1304" y="737" class="c2"/><rect x="1175" y="462" class="c1"/><rect x="1294" y="449" class="c0"/><use href="#g" x="1309" y="458" class="c0"/><rect x="1118" y="341" class="c0"/><use href="#g" x="1245" y="436" class="c5"/><rect x="1197" y="398" class="c0"/><rect x="1296" y="537" class="c0"/><rect x="1279" y="492" class="c1"/><rect x="1499" y="558" class="c2"/><rect x="1215" y="579" class="c9"/><use href="#g" x="1417" y="388" class="c2"/><rect x="1109" y="442" class="c2"/><rect x="1155" y="351" class="c0"/><rect x="1445" y="393" class="c0"/><rect x="1347" y="368" class="c4"/><use href="#g" x="1247" y="438" class="c0"/><rect x="1581" y="560" class="c6"/><rect x="1036" y="574" class="c0"/><rect x="968" y="603" class="c1"/><rect x="1347" y="391" class="c5"/><path d="M1226 386l5-10 5 10z" class="c0"/><use href="#g" x="1303" y="381" class="c7"/><use href="#g" x="955" y="613" class="c1"/><use href="#g" x="1071" y="657" class="c2"/><rect x="1116" y="614" class="c0"/><use href="#g" x="1098" y="448" class="c0"/><rect x="1434" y="583" class="c0"/><path d="M1278 361l5-10 5 10z" class="c0"/><rect x="1117" y="440" class="c3"/><rect x="1060" y="538" class="c2"/><rect x="1132" y="535" class="c0"/><use href="#g" x="1210" y="391" class="c0"/><rect x="1223" y="561" class="c0"/><use href="#g" x="1256" y="384" class="c0"/><rect x="1166" y="457" class="c0"/><rect x="887" y="555" class="c1"/><use href="#g" x="1212" y="391" class="c4"/><rect x="901" y="531" class="c0"/><use href="#g" x="930" y="588" class="c0"/><rect x="1325" y="453" class="c0"/><rect x="1423" y="342" class="c0"/><use href="#g" x="1393" y="382" class="c1"/><rect x="1012" y="492" class="c0"/><path d="M1362 719l5-10 5 10z" class="c0"/><use href="#g" x="1141" y="538" class="c0"/><rect x="1209" y="394" class="c5"/><use href="#g" x="1250" y="397" class="c2"/><rect x="1191" y="499" class="c5"/><rect x="1318" y="334" class="c0"/><rect x="927" y="614" class="c1"/><rect x="1032" y="518" class="c0"/><rect x="1227" y="405" class="c5"/><rect x="927" y="517" class="c5"/><use href="#g" x="1145" y="527" class="c0"/><path d="M1382 539l5-10 5 10z" class="c0"/><rect x="1391" y="393" class="c0"/><use href="#g" x="1112" y="348" class="c1"/><rect x="1268" y="457" class="c4"/><use href="#g" x="1275" y="397" class="c9"/><rect x="1300" y="478" class="c6"/><rect x="954" y="527" class="c7"/><rect x="1183" y="700" class="c0"/><rect x="1218" y="398" class="c0"/><rect x="1232" y="609" class="c0"/><use href="#g" x="1423" y="383" class="c0"/><rect x="1028" y="510" class="c7"/><rect x="1233" y="389" class="c7"/><rect x="928" y="587" class="c4"/><rect x="1098" y="636" class="c3"/><use href="#g" x="1170" y="422" class="c0"/><rect x="1156" y="498" class="c3"/><use href="#g" x="1153" y="439" class="c1"/><use href="#g" x="1202" y="538" class="c0"/><use href="#g" x="1255" y="468" class="c0"/><use href="#g" x="1140" y="432" class="c10"/><rect x="1016" y="480" class="c4"/><rect x="1216" y="343" class="c0"/><path d="M868 642l5-10 5 10z" class="c2"/><rect x="1286" y="383" class="c2"/><use href="#g" x="998" y="608" class="c8"/><rect x="1148" y="545" class="c4"/><path d="M1346 655l5-10 5 10z" class="c3"/><use href="#g" x="1351" y="382" class="c0"/><rect x="967" y="604" class="c7"/><rect x="979" y="637" class="c0"/><rect x="1219" y="387" class="c0"/><use href="#g" x="1139" y="523" class="c0"/><rect x="1109" y="403" class="c0"/><use href="#g" x="1102" y="359" class="c3"/><rect x="987" y="440" class="c6"/><rect x="1260" y="465" class="c0"/><rect x="1159" y="483" class="c0"/><rect x="863" y="633" class="c0"/><rect x="903" y="605" class="c0"/><rect x="1038" y="531" class="c7"/><rect x="1461" y="611" class="c0"/><rect x="1467" y="367" class="c4"/><use href="#g" x="1040" y="497" class="c2"/><rect x="1227" y="435" class="c0"/><path d="M1194 521l5-10 5 10z" class="c2"/><rect x="1126" y="347" class="c5"/><rect x="1317" y="675" class="c0"/><rect x="1128" y="570" class="c2"/><use href="#g" x="1242" y="555" class="c2"/><rect x="1226" y="359" class="c4"/><use href="#g" x="1279" y="488" class="c10"/><path d="M1012 661l5-10 5 10z" class="c0"/><rect x="1036" y="646" class="c7"/><rect x="1327" y="468" class="c0"/><use href="#g" x="1278" y="365" class="c0"/><use href="#g" x="1092" y="497" class="c0"/><use href="#g" x="1469" y="387" class="c2"/><use href="#g" x="1118" y="484" class="c0"/><use href="#g" x="1029" y="438" class="c7"/><rect x="1572" y="563" class="c0"/><path d="M1455 411l5-10 5 10z" class="c7"/><rect x="980" y="662" class="c0"/><rect x="1103" y="507" class="c3"/><use href="#g" x="1448" y="403" class="c0"/><use href="#g" x="1271" y="370" class="c3"/><rect x="1459" y="400" class="c0"/><use href="#g" x="932" y="584" class="c3"/><rect x="1112" y="376" class="c1"/><use href="#g" x="1369" y="407" class="c0"/><rect x="1016" y="429" class="c0"/><rect x="982" y="654" class="c7"/><rect x="1054" y="408" class="c0"/><rect x="1115" y="402" class="c0"/><rect x="1545" y="569" class="c1"/><rect x="1254" y="418" class="c4"/><rect x="1049" y="655" class="c0"/><rect x="1028" y="412" class="c8"/><use href="#g" x="1084" y="470" class="c1"/><rect x="1136" y="531" class="c0"/><rect x="1243" y="523" class="c0"/><use href="#g" x="1015" y="458" class="c0"/><use href="#g" x="1000" y="503" class="c0"/><rect x="1451" y="368" class="c1"/><use href="#g" x="1257" y="435" class="c0"/><use href="#g" x="1226" y="594" class="c0"/><path d="M1206 510l5-10 5 10z" class="c0"/><use href="#g" x="1327" y="356" class="c0"/><use href="#g" x="1167" y="399" class="c3"/><rect x="1320" y="497" class="c0"/><rect x="912" y="544" class="c0"/><rect x="1193" y="669" class="c0"/><use href="#g" x="1282" y="433" class="c0"/><rect x="1434" y="490" class="c0"/><use href="#g" x="1126" y="387" class="c0"/><rect x="1213" y="507" class="c0"/><use href="#g" x="1083" y="512" class="c2"/><use href="#g" x="1374" y="713" class="c1"/><use href="#g" x="1292" y="443" class="c2"/><rect x="1307" y="415" class="c5"/><use href="#g" x="1102" y="339" class="c2"/><rect x="1567" y="566" class="c0"/><path d="M1126 564l5-10 5 10z" class="c7"/><rect x="1162" y="737" class="c0"/><rect x="1137" y="570" class="c0"/><rect x="945" y="507" class="c0"/><use href="#g" x="1023" y="527" class="c0"/><use href="#g" x="1087" y="445" class="c0"/><use href="#g" x="1115" y="535" class="c0"/><use href="#g" x="1184" y="484" class="c7"/><rect x="1191" y="602" class="c0"/><rect x="1262" y="421" class="c0"/><rect x="1432" y="571" class="c0"/><rect x="1009" y="532" class="c7"/><use href="#g" x="1344" y="764" class="c7"/><rect x="1138" y="455" class="c2"/><rect x="845" y="668" class="c1"/><rect x="1221" y="376" class="c0"/><path d="M1287 684l5-10 5 10z" class="c4"/><rect x="968" y="493" class="c5"/><rect x="1027" y="569" class="c0"/><rect x="1484" y="507" class="c0"/><rect x="1211" y="414" class="c0"/><rect x="1243" y="411" class="c0"/><use href="#g" x="1116" y="568" class="c3"/><use href="#g" x="1175" y="357" class="c3"/><rect x="1256" y="480" class="c0"/><use href="#g" x="1243" y="479" class="c0"/><rect x="1049" y="428" class="c4"/><rect x="1281" y="385" class="c0"/><rect x="1048" y="469" class="c7"/><rect x="1313" y="354" class="c9"/><rect x="1291" y="575" class="c0"/><use href="#g" x="955" y="496" class="c5"/><use href="#g" x="1055" y="517" class="c0"/><rect x="1334" y="370" class="c0"/><rect x="954" y="537" class="c0"/><rect x="1305" y="385" class="c0"/><path d="M1382 538l5-10 5 10z" class="c0"/><path d="M1115 596l5-10 5 10z" class="c0"/><use href="#g" x="1348" y="318" class="c4"/><rect x="1018" y="441" class="c0"/><rect x="1097" y="402" class="c2"/><use href="#g" x="1278" y="421" class="c0"/><use href="#g" x="1238" y="362" class="c0"/><rect x="1037" y="555" class="c0"/><rect x="887" y="634" class="c0"/><use href="#g" x="1188" y="357" class="c0"/><use href="#g" x="1026" y="477" class="c0"/><rect x="1351" y="723" class="c0"/><rect x="1015" y="627" class="c0"/><path d="M1498 623l5-10 5 10z" class="c0"/><rect x="1333" y="434" class="c0"/><use href="#g" x="1110" y="568" class="c0"/><rect x="1076" y="528" class="c0"/><use href="#g" x="1073" y="423" class="c0"/><rect x="1359" y="387" class="c0"/><use href="#g" x="1051" y="662" class="c0"/><use href="#g" x="1082" y="452" class="c0"/><use href="#g" x="1130" y="359" class="c3"/><rect x="1292" y="538" class="c0"/><rect x="1612" y="549" class="c0"/><rect x="1392" y="381" class="c5"/><use href="#g" x="1015" y="482" class="c7"/><rect x="1038" y="425" class="c0"/><use href="#g" x="940" y="514" class="c0"/><rect x="1292" y="503" class="c3"/><rect x="1289" y="459" class="c2"/><rect x="1185" y="353" class="c0"/><use href="#g" x="1124" y="403" class="c0"/><rect x="1235" y="426" class="c0"/><path d="M1033 601l5-10 5 10z" class="c0"/><rect x="1041" y="497" class="c0"/><rect x="1103" y="515" class="c0"/><rect x="1082" y="391" class="c0"/><rect x="1118" y="398" class="c0"/><use href="#g" x="1277" y="467" class="c5"/><rect x="1057" y="446" class="c1"/><rect x="1393" y="353" class="c5"/><rect x="1244" y="395" class="c1"/><use href="#g" x="1283" y="310" class="c0"/><use href="#g" x="1088" y="360" class="c0"/><use href="#g" x="1122" y="358" class="c0"/><use href="#g" x="1402" y="409" class="c0"/><use href="#g" x="1306" y="344" class="c7"/><rect x="1470" y="399" class="c3"/><use href="#g" x="1303" y="721" class="c0"/><use href="#g" x="1110" y="445" class="c2"/><rect x="1330" y="354" class="c3"/><rect x="965" y="669" class="c0"/><rect x="1081" y="411" class="c0"/><path d="M1016 475l5-10 5 10z" class="c0"/><rect x="977" y="586" class="c4"/><rect x="1059" y="481" class="c4"/><rect x="1298" y="408" class="c5"/><rect x="893" y="622" class="c0"/><rect x="1099" y="408" class="c7"/><rect x="1026" y="497" class="c0"/><rect x="1260" y="444" class="c0"/><rect x="1007" y="468" class="c0"/><rect x="1403" y="625" class="c0"/><rect x="942" y="603" class="c0"/><rect x="1242" y="391" class="c0"/><use href="#g" x="860" y="648" class="c2"/><rect x="1400" y="464" class="c4"/><use href="#g" x="982" y="439" class="c0"/><rect x="1342" y="443" class="c1"/><use href="#g" x="1267" y="441" class="c0"/><use href="#g" x="1077" y="468" class="c0"/><rect x="991" y="431" class="c0"/><rect x="1262" y="428" class="c3"/><rect x="1365" y="472" class="c0"/><rect x="1476" y="403" class="c0"/><rect x="1286" y="623" class="c2"/><rect x="1419" y="588" class="c3"/><rect x="870" y="647" class="c5"/><use href="#g" x="1032" y="460" class="c7"/><rect x="1293" y="432" class="c0"/><use href="#g" x="1059" y="538" class="c5"/><rect x="918" y="607" class="c5"/><rect x="1212" y="368" class="c4"/><rect x="1460" y="537" class="c0"/><rect x="917" y="555" class="c5"/><use href="#g" x="1123" y="414" class="c0"/><rect x="1053" y="459" class="c7"/><rect x="855" y="710" class="c0"/><rect x="1269" y="447" class="c1"/><use href="#g" x="1221" y="359" class="c0"/><rect x="1097" y="522" class="c0"/><use href="#g" x="1235" y="442" class="c0"/><rect x="1083" y="421" class="c5"/><rect x="1269" y="440" class="c3"/><rect x="1183" y="432" class="c0"/><rect x="1250" y="574" class="c0"/><use href="#g" x="1068" y="474" class="c0"/><rect x="941" y="497" class="c6"/><use href="#g" x="1243" y="438" class="c2"/><rect x="1451" y="503" class="c4"/><path d="M1280 485l5-10 5 10z" class="c0"/><rect x="838" y="701" class="c7"/><use href="#g" x="1168" y="542" class="c3"/><rect x="1224" y="394" class="c4"/><rect x="1346" y="772" class="c0"/><rect x="1314" y="384" class="c7"/><use href="#g" x="1207" y="525" class="c3"/><rect x="988" y="552" class="c0"/><use href="#g" x="966" y="559" class="c4"/><rect x="1018" y="420" class="c0"/><rect x="1264" y="435" class="c0"/><rect x="1111" y="462" class="c3"/><rect x="1148" y="416" class="c4"/><rect x="1101" y="348" class="c5"/><use href="#g" x="1312" y="379" class="c0"/><rect x="1141" y="445" class="c0"/><use href="#g" x="1062" y="427" class="c1"/><rect x="987" y="606" class="c1"/><rect x="1166" y="379" class="c3"/><rect x="964" y="658" class="c5"/><rect x="897" y="606" class="c5"/><rect x="1035" y="450" class="c2"/><use href="#g" x="1148" y="481" class="c0"/><rect x="1146" y="476" class="c4"/><use href="#g" x="1252" y="403" class="c2"/><rect x="1003" y="503" class="c2"/><rect x="1285" y="457" class="c0"/><rect x="1055" y="450" class="c0"/><rect x="1347" y="335" class="c3"/><rect x="1200" y="403" class="c0"/><rect x="1098" y="433" class="c0"/><rect x="943" y="495" class="c7"/><rect x="1112" y="448" class="c0"/><rect x="921" y="591" class="c2"/><rect x="869" y="576" class="c8"/><use href="#g" x="1060" y="453" class="c0"/><rect x="1205" y="353" class="c2"/><rect x="1148" y="432" class="c0"/><use href="#g" x="907" y="555" class="c7"/><rect x="1259" y="351" class="c0"/><use href="#g" x="957" y="521" class="c0"/><use href="#g" x="1131" y="563" class="c0"/><rect x="1343" y="723" class="c0"/><rect x="1256" y="361" class="c2"/><use href="#g" x="1209" y="440" class="c0"/><rect x="1186" y="396" class="c0"/><rect x="1311" y="508" class="c0"/><use href="#g" x="1418" y="380" class="c0"/><use href="#g" x="1035" y="457" class="c6"/><rect x="1040" y="462" class="c4"/><rect x="1400" y="352" class="c5"/><use href="#g" x="1098" y="510" class="c7"/><use href="#g" x="1275" y="359" class="c0"/><use href="#g" x="999" y="499" class="c2"/><use href="#g" x="1107" y="409" class="c1"/><rect x="1143" y="414" class="c2"/><rect x="948" y="542" class="c0"/><use href="#g" x="1002" y="452" class="c0"/><rect x="1189" y="418" class="c0"/><rect x="1246" y="618" class="c5"/><rect x="1375" y="401" class="c0"/><rect x="1101" y="485" class="c0"/><path d="M1454 565l5-10 5 10z" class="c5"/><use href="#g" x="1135" y="412" class="c5"/><rect x="1117" y="515" class="c1"/><rect x="1144" y="357" class="c0"/><use href="#g" x="903" y="642" class="c3"/><rect x="1207" y="658" class="c0"/><rect x="1158" y="557" class="c6"/><rect x="1234" y="351" class="c0"/><rect x="1307" y="496" class="c0"/><rect x="1204" y="387" class="c7"/><use href="#g" x="927" y="517" class="c5"/><rect x="1006" y="482" class="c9"/><rect x="1233" y="399" class="c0"/><rect x="1551" y="591" class="c5"/><path d="M1018 767l5-10 5 10z" class="c0"/><use href="#g" x="1255" y="456" class="c1"/><use href="#g" x="1055" y="486" class="c0"/><rect x="1083" y="437" class="c0"/><rect x="1061" y="530" class="c7"/><use href="#g" x="1235" y="385" class="c7"/><use href="#g" x="1028" y="530" class="c2"/><rect x="1020" y="399" class="c4"/><rect x="1199" y="500" class="c0"/><rect x="1217" y="350" class="c8"/><use href="#g" x="918" y="612" class="c4"/><rect x="1159" y="527" class="c0"/><rect x="1017" y="514" class="c0"/><rect x="1182" y="378" class="c0"/><use href="#g" x="1011" y="487" class="c7"/><path d="M1263 436l5-10 5 10z" class="c0"/><rect x="1266" y="468" class="c0"/><rect x="1308" y="490" class="c5"/><rect x="1121" y="506" class="c2"/><rect x="896" y="552" class="c0"/><path d="M1148 591l5-10 5 10z" class="c0"/><path d="M1340 486l5-10 5 10z" class="c2"/><rect x="1112" y="465" class="c0"/><path d="M1471 421l5-10 5 10z" class="c0"/><rect x="989" y="718" class="c6"/><rect x="954" y="568" class="c0"/><rect x="1063" y="557" class="c0"/><path d="M930 625l5-10 5 10z" class="c0"/><use href="#g" x="1320" y="319" class="c1"/><rect x="1357" y="443" class="c0"/><use href="#g" x="1117" y="458" class="c1"/><rect x="1171" y="685" class="c1"/><use href="#g" x="1353" y="477" class="c0"/><use href="#g" x="1200" y="400" class="c3"/><use href="#g" x="1390" y="391" class="c2"/><use href="#g" x="1244" y="572" class="c0"/><rect x="1393" y="352" class="c7"/><use href="#g" x="1053" y="418" class="c2"/><rect x="1122" y="540" class="c0"/><rect x="1192" y="473" class="c3"/><path d="M1398 676l5-10 5 10z" class="c0"/><path d="M1316 546l5-10 5 10z" class="c0"/><rect x="1463" y="408" class="c2"/><rect x="1119" y="355" class="c3"/><rect x="1612" y="606" class="c0"/><rect x="1118" y="528" class="c5"/><path d="M1397 666l5-10 5 10z" class="c1"/><rect x="1269" y="434" class="c0"/><use href="#g" x="1246" y="532" class="c0"/><rect x="970" y="436" class="c0"/><use href="#g" x="903" y="541" class="c1"/><rect x="1486" y="512" class="c3"/><rect x="1047" y="461" class="c0"/><rect x="1216" y="534" class="c0"/><use href="#g" x="1359" y="377" class="c0"/><rect x="1138" y="377" class="c5"/><use href="#g" x="1376" y="328" class="c3"/><use href="#g" x="1225" y="428" class="c0"/><use href="#g" x="1224" y="338" class="c5"/><rect x="1199" y="513" class="c2"/><rect x="975" y="697" class="c0"/><rect x="1274" y="375" class="c0"/><rect x="927" y="573" class="c0"/><rect x="1007" y="466" class="c0"/><rect x="971" y="686" class="c1"/><rect x="1160" y="491" class="c1"/><rect x="1217" y="542" class="c0"/><use href="#g" x="1012" y="376" class="c0"/><use href="#g" x="1310" y="717" class="c0"/><use href="#g" x="1240" y="502" class="c0"/><path d="M1221 469l5-10 5 10z" class="c0"/><path d="M1390 343l5-10 5 10z" class="c0"/><use href="#g" x="1248" y="528" class="c0"/><rect x="1106" y="479" class="c0"/><rect x="1435" y="578" class="c2"/><rect x="1189" y="521" class="c3"/><rect x="1153" y="549" class="c2"/><use href="#g" x="1147" y="453" class="c5"/><path d="M1058 570l5-10 5 10z" class="c8"/><rect x="1252" y="458" class="c1"/><path d="M1003 461l5-10 5 10z" class="c0"/><rect x="1432" y="358" class="c0"/><rect x="1236" y="433" class="c10"/><rect x="1423" y="350" class="c7"/><rect x="1125" y="443" class="c0"/><rect x="1307" y="537" class="c6"/><rect x="1205" y="403" class="c0"/><rect x="1372" y="373" class="c5"/><use href="#g" x="1131" y="368" class="c1"/><rect x="1288" y="342" class="c1"/><use href="#g" x="1381" y="392" class="c0"/><path d="M1626 536l5-10 5 10z" class="c4"/><rect x="1212" y="485" class="c2"/><rect x="979" y="474" class="c0"/><rect x="1162" y="394" class="c0"/><use href="#g" x="957" y="599" class="c0"/><use href="#g" x="1238" y="476" class="c4"/><rect x="1138" y="403" class="c8"/><rect x="1532" y="569" class="c0"/><rect x="1215" y="353" class="c0"/><rect x="1448" y="426" class="c0"/><use href="#g" x="1389" y="323" class="c1"/><path d="M1523 570l5-10 5 10z" class="c0"/><use href="#g" x="1161" y="341" class="c3"/><rect x="1338" y="452" class="c0"/><rect x="924" y="599" class="c5"/><rect x="1215" y="363" class="c5"/><rect x="847" y="704" class="c7"/><rect x="1090" y="476" class="c0"/><rect x="1105" y="633" class="c0"/><rect x="1159" y="575" class="c6"/><rect x="898" y="643" class="c0"/><use href="#g" x="1276" y="300" class="c7"/><rect x="1297" y="345" class="c3"/><rect x="1187" y="416" class="c0"/><use href="#g" x="1111" y="526" class="c0"/><rect x="1103" y="477" class="c2"/><rect x="1488" y="514" class="c0"/><rect x="1143" y="510" class="c6"/><rect x="1148" y="449" class="c0"/><rect x="1338" y="774" class="c0"/><rect x="913" y="624" class="c1"/><rect x="1106" y="462" class="c1"/><rect x="927" y="512" class="c0"/><rect x="1285" y="398" class="c2"/><rect x="1324" y="316" class="c5"/><path d="M1386 370l5-10 5 10z" class="c7"/><rect x="1047" y="490" class="c0"/><rect x="1388" y="444" class="c5"/><rect x="1150" y="442" class="c2"/><rect x="1426" y="360" class="c2"/><path d="M1179 472l5-10 5 10z" class="c5"/><rect x="1199" y="363" class="c2"/><rect x="1100" y="532" class="c4"/><path d="M1075 537l5-10 5 10z" class="c6"/><rect x="1295" y="398" class="c0"/><use href="#g" x="1151" y="543" class="c2"/><rect x="1329" y="378" class="c0"/><use href="#g" x="1400" y="364" class="c7"/><use href="#g" x="1043" y="454" class="c7"/><rect x="1319" y="415" class="c0"/><rect x="1037" y="595" class="c0"/><rect x="1291" y="554" class="c0"/><use href="#g" x="1320" y="408" class="c1"/><rect x="1373" y="385" class="c0"/><rect x="1442" y="422" class="c8"/><rect x="1421" y="589" class="c3"/><use href="#g" x="937" y="612" class="c6"/><rect x="1017" y="566" class="c0"/><rect x="1427" y="351" class="c7"/><rect x="1264" y="413" class="c0"/><use href="#g" x="849" y="597" class="c0"/><use href="#g" x="1277" y="477" class="c0"/><use href="#g" x="999" y="719" class="c0"/><rect x="1162" y="407" class="c0"/><rect x="1103" y="392" class="c2"/><rect x="1447" y="415" class="c3"/><rect x="1263" y="349" class="c7"/><rect x="995" y="368" class="c0"/><rect x="1106" y="523" class="c9"/><rect x="880" y="587" class="c2"/><rect x="1248" y="496" class="c1"/><rect x="1081" y="501" class="c0"/><rect x="1340" y="358" class="c1"/><rect x="941" y="633" class="c0"/><path d="M1414 634l5-10 5 10z" class="c3"/><rect x="1154" y="363" class="c1"/><rect x="1396" y="562" class="c6"/><rect x="1004" y="684" class="c6"/><rect x="1330" y="487" class="c0"/><rect x="1236" y="485" class="c0"/><rect x="947" y="555" class="c0"/><path d="M1422 420l5-10 5 10z" class="c0"/><rect x="1202" y="449" class="c0"/><rect x="1005" y="532" class="c0"/><rect x="1423" y="503" class="c0"/><rect x="833" y="724" class="c0"/><rect x="1135" y="354" class="c0"/><rect x="1347" y="485" class="c0"/><rect x="1369" y="499" class="c0"/><rect x="1282" y="300" class="c8"/><rect x="1179" y="363" class="c0"/><use href="#g" x="1156" y="375" class="c0"/><use href="#g" x="1237" y="476" class="c0"/><use href="#g" x="1072" y="497" class="c0"/><rect x="1152" y="370" class="c4"/><use href="#g" x="1361" y="363" class="c5"/><rect x="1158" y="403" class="c2"/><rect x="1053" y="438" class="c0"/><use href="#g" x="1424" y="398" class="c0"/><rect x="1031" y="619" class="c7"/><use href="#g" x="1191" y="363" class="c0"/><use href="#g" x="1414" y="349" class="c5"/><use href="#g" x="1323" y="332" class="c0"/><rect x="1180" y="442" class="c0"/><use href="#g" x="1092" y="542" class="c0"/><rect x="1219" y="578" class="c5"/><rect x="971" y="523" class="c0"/><rect x="1271" y="372" class="c7"/><rect x="1024" y="438" class="c0"/><rect x="814" y="711" class="c0"/><rect x="1358" y="462" class="c0"/><rect x="1095" y="461" class="c2"/><use href="#g" x="1310" y="423" class="c0"/><rect x="1121" y="530" class="c0"/><rect x="1429" y="419" class="c7"/><rect x="1166" y="393" class="c3"/><rect x="1298" y="347" class="c0"/><use href="#g" x="1306" y="424" class="c0"/><rect x="1331" y="429" class="c0"/><rect x="1252" y="440" class="c7"/><rect x="1150" y="564" class="c2"/><use href="#g" x="1082" y="529" class="c0"/><path d="M1178 509l5-10 5 10z" class="c2"/><rect x="1426" y="392" class="c7"/><rect x="1185" y="679" class="c9"/><use href="#g" x="1123" y="427" class="c3"/><rect x="1224" y="640" class="c0"/><use href="#g" x="1100" y="385" class="c0"/><rect x="914" y="592" class="c0"/><use href="#g" x="1528" y="649" class="c0"/><use href="#g" x="1112" y="468" class="c2"/><rect x="1317" y="313" class="c2"/><rect x="1097" y="524" class="c2"/><rect x="1052" y="508" class="c3"/><rect x="982" y="493" class="c1"/><rect x="830" y="710" class="c0"/><use href="#g" x="1086" y="452" class="c0"/><use href="#g" x="1047" y="530" class="c8"/><rect x="1430" y="415" class="c0"/><rect x="1107" y="555" class="c4"/><rect x="1289" y="458" class="c0"/><rect x="1523" y="541" class="c5"/><rect x="1240" y="431" class="c0"/><use href="#g" x="1278" y="436" class="c4"/><rect x="1279" y="603" class="c9"/><use href="#g" x="1138" y="470" class="c0"/><rect x="1325" y="644" class="c0"/><rect x="1201" y="480" class="c0"/><rect x="1089" y="429" class="c4"/><use href="#g" x="917" y="516" class="c0"/><rect x="1435" y="589" class="c0"/><rect x="1063" y="430" class="c0"/><use href="#g" x="1113" y="481" class="c0"/><rect x="994" y="552" class="c0"/><use href="#g" x="1216" y="447" class="c4"/><rect x="1129" y="365" class="c0"/><use href="#g" x="1254" y="478" class="c4"/><use href="#g" x="989" y="714" class="c5"/><rect x="1110" y="390" class="c4"/><rect x="912" y="573" class="c0"/><rect x="1072" y="513" class="c0"/><rect x="1067" y="432" class="c5"/><rect x="980" y="714" class="c7"/><use href="#g" x="1150" y="434" class="c0"/><rect x="1115" y="518" class="c0"/><rect x="1013" y="775" class="c4"/><rect x="1204" y="449" class="c0"/><path d="M1451 558l5-10 5 10z" class="c5"/><rect x="1326" y="471" class="c0"/><rect x="1059" y="701" class="c4"/><rect x="1097" y="351" class="c0"/><rect x="1317" y="641" class="c5"/><use href="#g" x="1412" y="401" class="c0"/><rect x="1020" y="438" class="c0"/><use href="#g" x="1172" y="396" class="c4"/><rect x="1338" y="437" class="c5"/><use href="#g" x="979" y="597" class="c2"/><rect x="1013" y="429" class="c2"/><use href="#g" x="1084" y="477" class="c0"/><use href="#g" x="825" y="718" class="c0"/><rect x="1222" y="502" class="c0"/><use href="#g" x="1524" y="575" class="c5"/><rect x="1257" y="314" class="c5"/><use href="#g" x="1389" y="399" class="c0"/><rect x="1436" y="367" class="c5"/><rect x="967" y="659" class="c0"/><path d="M1108 360l5-10 5 10z" class="c0"/><rect x="1025" y="544" class="c3"/><use href="#g" x="1316" y="726" class="c0"/><rect x="998" y="674" class="c0"/><use href="#g" x="1073" y="434" class="c2"/><path d="M1102 645l5-10 5 10z" class="c4"/><rect x="1447" y="441" class="c0"/><use href="#g" x="1088" y="375" class="c0"/><rect x="1400" y="336" class="c0"/><rect x="892" y="579" class="c0"/><use href="#g" x="1286" y="302" class="c8"/><rect x="1234" y="392" class="c7"/><use href="#g" x="1369" y="361" class="c0"/><rect x="1162" y="454" class="c5"/><rect x="1061" y="484" class="c0"/><path d="M1234 509l5-10 5 10z" class="c0"/><rect x="1030" y="429" class="c8"/><rect x="1273" y="367" class="c4"/><use href="#g" x="841" y="673" class="c6"/><rect x="890" y="552" class="c3"/><use href="#g" x="1377" y="388" class="c5"/><rect x="851" y="707" class="c3"/><path d="M1392 372l5-10 5 10z" class="c2"/><rect x="1301" y="416" class="c6"/><rect x="1082" y="384" class="c9"/><path d="M969 655l5-10 5 10z" class="c0"/><rect x="1077" y="465" class="c5"/><rect x="1157" y="453" class="c0"/><rect x="1227" y="637" class="c0"/><rect x="1412" y="407" class="c0"/><rect x="1240" y="366" class="c3"/><rect x="1150" y="554" class="c4"/><rect x="1082" y="457" class="c7"/><path d="M1394 665l5-10 5 10z" class="c1"/><use href="#g" x="1214" y="341" class="c7"/><rect x="1311" y="406" class="c7"/><use href="#g" x="1233" y="405" class="c0"/><rect x="927" y="507" class="c4"/><use href="#g" x="848" y="613" class="c5"/><use href="#g" x="1382" y="402" class="c0"/><rect x="850" y="670" class="c0"/><rect x="1017" y="553" class="c1"/><rect x="1228" y="412" class="c0"/><use href="#g" x="1366" y="393" class="c4"/><rect x="1437" y="380" class="c10"/><rect x="1145" y="535" class="c5"/><rect x="1318" y="476" class="c0"/><use href="#g" x="954" y="510" class="c7"/><rect x="1154" y="353" class="c7"/><use href="#g" x="1145" y="383" class="c0"/><path d="M1304 311l5-10 5 10z" class="c4"/><use href="#g" x="1111" y="515" class="c0"/><use href="#g" x="1437" y="375" class="c0"/><rect x="999" y="432" class="c0"/><rect x="1386" y="378" class="c0"/><use href="#g" x="1125" y="395" class="c5"/><rect x="1280" y="469" class="c6"/><rect x="1373" y="374" class="c2"/><rect x="1347" y="374" class="c5"/><use href="#g" x="1138" y="470" class="c8"/><rect x="1282" y="534" class="c1"/><rect x="1021" y="720" class="c0"/><rect x="1230" y="502" class="c4"/><rect x="1393" y="324" class="c0"/><rect x="1126" y="343" class="c7"/><rect x="1034" y="418" class="c5"/><use href="#g" x="1451" y="485" class="c3"/><use href="#g" x="1145" y="439" class="c0"/><use href="#g" x="1020" y="473" class="c0"/><rect x="1214" y="470" class="c0"/><path d="M1450 598l5-10 5 10z" class="c4"/><rect x="1000" y="485" class="c0"/><rect x="948" y="560" class="c0"/><rect x="1348" y="444" class="c0"/><use href="#g" x="1232" y="349" class="c0"/><use href="#g" x="1338" y="334" class="c0"/><use href="#g" x="984" y="563" class="c2"/><use href="#g" x="1325" y="402" class="c4"/><use href="#g" x="985" y="669" class="c0"/><rect x="1252" y="498" class="c0"/><path d="M1217 475l5-10 5 10z" class="c0"/><use href="#g" x="814" y="705" class="c0"/><rect x="1312" y="442" class="c0"/><use href="#g" x="1151" y="392" class="c0"/><rect x="983" y="663" class="c0"/><use href="#g" x="1268" y="353" class="c0"/><rect x="1224" y="490" class="c2"/><path d="M1266 525l5-10 5 10z" class="c2"/><rect x="1012" y="501" class="c0"/><rect x="835" y="690" class="c7"/><path d="M1003 656l5-10 5 10z" class="c2"/><rect x="1351" y="443" class="c1"/><use href="#g" x="1117" y="402" class="c5"/><rect x="909" y="533" class="c2"/><use href="#g" x="965" y="476" class="c0"/><use href="#g" x="1030" y="418" class="c0"/></g></svg>

<div class="a" style="left:0;top:1013px;width:1920px;height:2px;border-top:1px solid #a0a0a0;border-bottom:1px solid #fff"></div>
<div id="status" class="a" style="top:1015px;height:17px">
<div class="sp" style="left:1px;width:98px;top:0;padding-left:5px">MapsID: 3815</div>
<div class="sp" style="left:102px;width:76px;top:0">png</div>
<div class="sp" style="left:182px;width:97px;top:0">MinZoom: 8</div>
<div class="sp" style="left:282px;width:97px;top:0">MaxZoom: 18</div>
<div class="sp" style="left:382px;width:97px;top:0">TileSize: 256</div>
<div class="sp" style="left:482px;width:97px;top:0">EPSG:3857</div>
<div class="sp" style="left:582px;width:1338px;top:0">Longitude=8.706665, Latitude=46.875213, tile=8/134/90.png</div>
</div>
</body></html>
